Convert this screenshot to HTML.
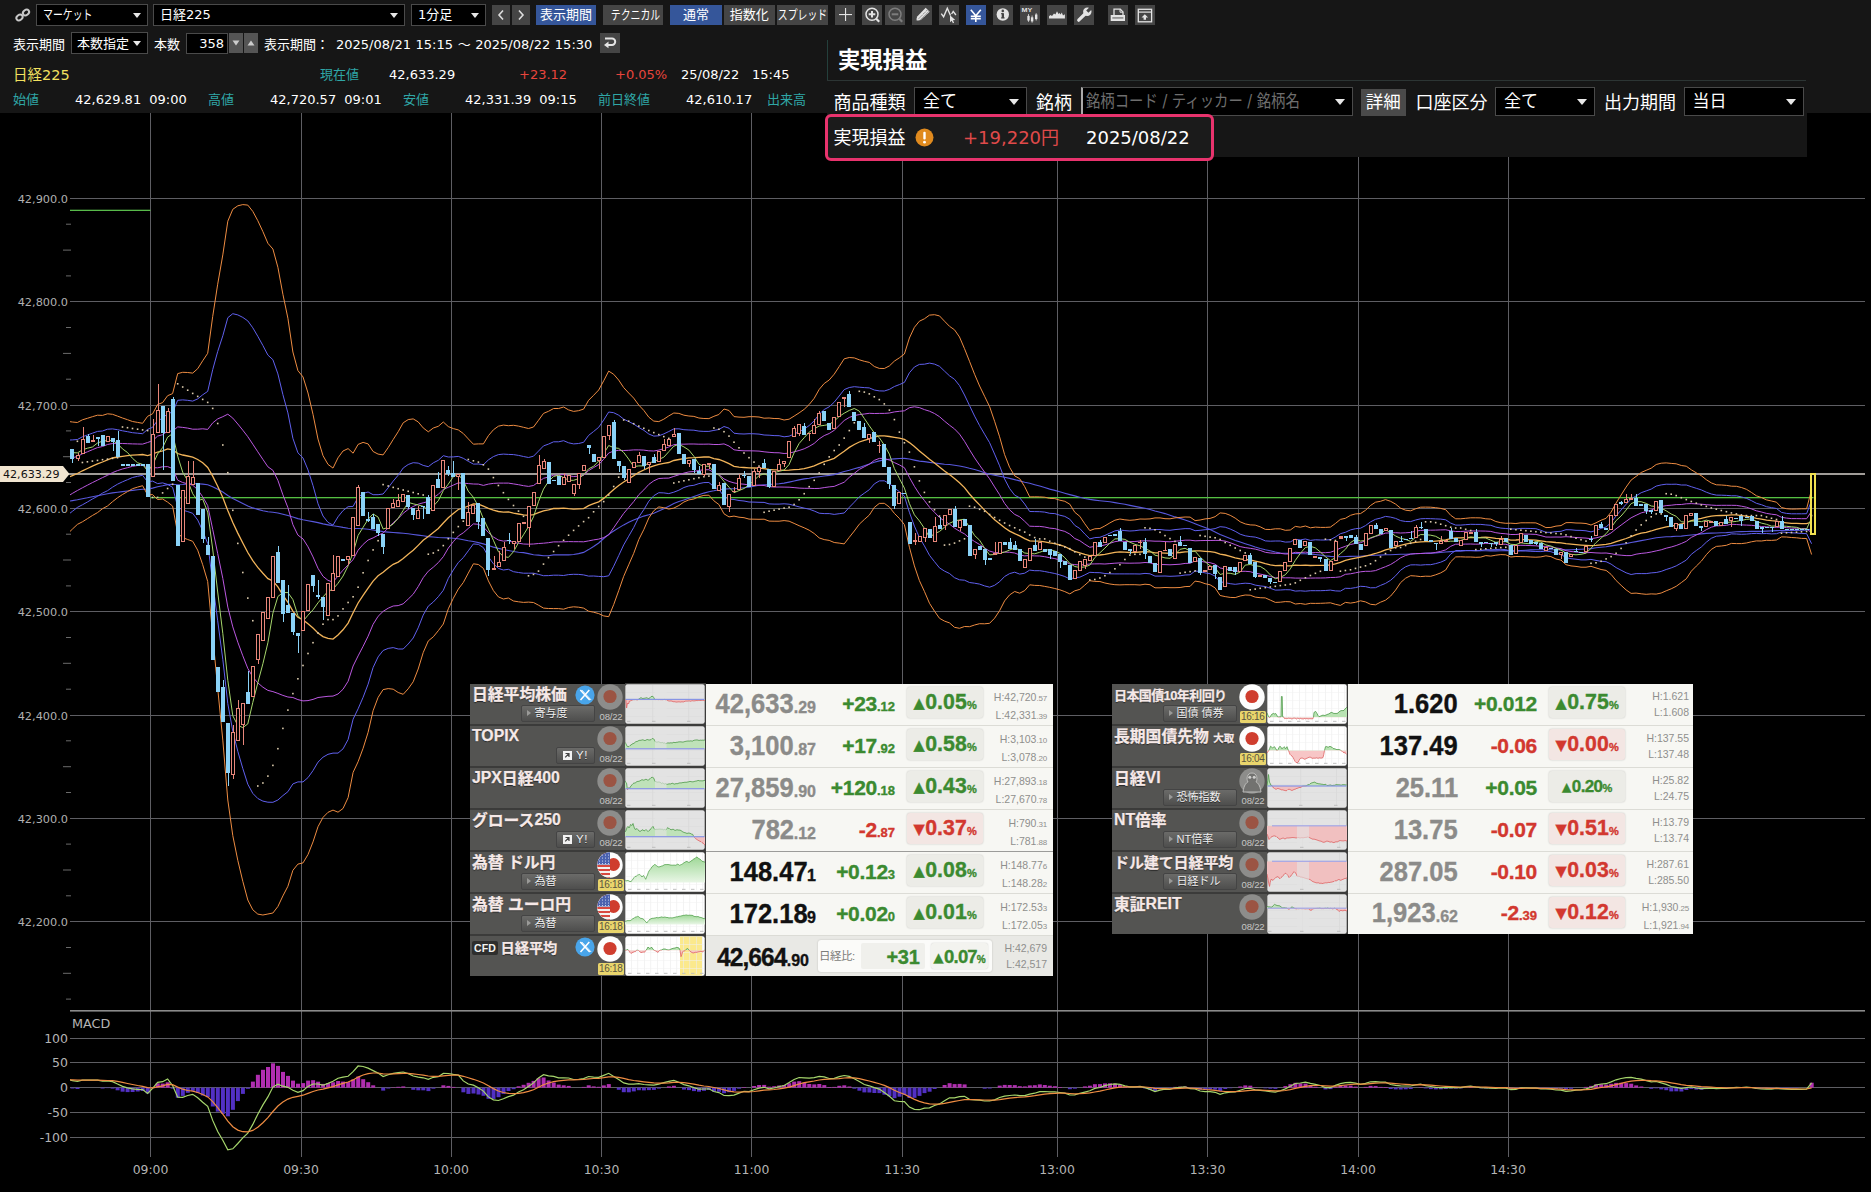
<!DOCTYPE html>
<html lang="ja"><head><meta charset="utf-8"><title>日経225 チャート</title>
<style>

html,body{margin:0;padding:0;background:#000;}
body{width:1871px;height:1192px;position:relative;overflow:hidden;font-family:"DejaVu Sans","Noto Sans CJK JP",sans-serif;color:#fff;}
#chart{position:absolute;left:0;top:0;}
.abs{position:absolute;}
#hdr{position:absolute;left:0;top:0;width:1871px;height:113px;background:#161616;}
.sel{position:absolute;box-sizing:border-box;background:#000;border:1px solid #4a4a4a;color:#fff;font-size:13px;line-height:20px;padding-left:6px;white-space:nowrap;height:22px;}
.sel:after{content:"";position:absolute;right:6px;top:8px;border-left:4px solid transparent;border-right:4px solid transparent;border-top:5px solid #e8e8e8;}
.btn{position:absolute;box-sizing:border-box;background:#454545;color:#fff;font-size:13px;line-height:19px;height:20px;text-align:center;white-space:nowrap;overflow:hidden;}
.btn.on{background:#35569a;}
.ib{position:absolute;top:5px;width:20px;height:20px;background:#454545;}
.ib svg{position:absolute;left:0;top:0;}
.t{position:absolute;white-space:nowrap;font-size:13px;line-height:16px;color:#fff;word-spacing:4px;}
.cy{color:#2fa6a6;}
.kk{display:inline-block;transform:scaleX(.76);transform-origin:0 50%;}
.rd{color:#e8453c;}

#hon:after{display:none;}
#pnl{position:absolute;left:827px;top:40px;width:979.500px;height:117px;background:#161616;font-family:"DejaVu Sans","Noto Sans CJK JP",sans-serif;}
#pnl .ttl{position:absolute;left:11px;top:5px;font-size:22.300px;font-weight:bold;line-height:30px;color:#fff;}
#pnl .lb{position:absolute;font-size:18px;line-height:24px;color:#fff;white-space:nowrap;}
#pnl .sel{font-size:17px;line-height:27px;height:29px;padding-left:8px;}
#pnl .sel:after{top:11px;right:7px;border-left-width:5px;border-right-width:5px;border-top-width:6px;}

.tb{position:absolute;font-family:"Liberation Sans","Noto Sans CJK JP",sans-serif;}
.tb .row{position:absolute;left:0;height:40px;}
.tb small{line-height:0;}
.tb .la{position:relative;top:-1.5px;}
.tb .nm{-webkit-text-stroke:0.25px;}
.tb .v,.tb .c,.tb .pb{-webkit-text-stroke:0.35px;}
.tb .lab{position:absolute;left:0;top:0;width:154.5px;height:40px;background:#545452;border-bottom:2px solid #3b3b3a;}
.tb .nm{position:absolute;left:2px;top:0px;font-weight:bold;font-size:15.8px;line-height:22px;color:#f6e9e8;white-space:nowrap;text-shadow:0 1px 1px rgba(0,0,0,.55);letter-spacing:0;}
.tb .bt{position:absolute;top:21px;height:16.5px;box-sizing:border-box;border:1px solid #444;border-radius:2px;background:linear-gradient(#6b6b69,#4e4e4d);color:#f0f0f0;font-size:11px;line-height:14px;white-space:nowrap;text-shadow:0 1px 0 rgba(0,0,0,.5);}
.tb .bt i{position:absolute;left:5px;top:3.5px;border-top:3.5px solid transparent;border-bottom:3.5px solid transparent;border-left:4px solid #9a9a98;}
.tb .bt span{position:absolute;left:12.5px;top:0;}
.tb .dt{position:absolute;left:598px;top:27px;width:26px;text-align:center;font-size:9.5px;line-height:12px;color:#c4c4c2;letter-spacing:-0.2px;}
.tb .tm{position:absolute;left:128px;top:27px;width:25.5px;height:12px;background:#e9d56c;border-radius:1.5px;text-align:center;font-size:10px;line-height:12px;color:#5a5540;letter-spacing:-0.3px;}
.tb .dd{position:absolute;left:128px;top:27px;width:26px;text-align:center;font-size:9.5px;line-height:12px;color:#c6c6c4;letter-spacing:-0.2px;}
.tb .mc{position:absolute;left:155px;top:0;width:80px;height:40px;}
.tb .wh{position:absolute;left:236px;top:0;width:347px;height:41px;background:#f7f7f3;border-bottom:1px solid #dcdcd6;}
.tb .v{position:absolute;right:237px;bottom:7.5px;font-weight:bold;white-space:nowrap;color:#8b8b89;font-size:27px;line-height:28px;letter-spacing:0;}
.tb .v u{text-decoration:none;display:inline-block;transform:scaleX(.945);transform-origin:100% 50%;}
.tb .v small{font-size:16px;letter-spacing:0;}
.tb .v.k{color:#111;}
.tb .c{position:absolute;right:158px;bottom:10px;font-weight:bold;white-space:nowrap;font-size:21px;line-height:22px;letter-spacing:-0.3px;}
.tb .c small{font-size:13px;letter-spacing:0;}
.tb .g{color:#3b8a30;}
.tb .r{color:#d2382f;}
.tb .pb{position:absolute;left:201px;top:3px;width:76px;height:31px;border-radius:3px;box-shadow:0 0 2px rgba(0,0,0,.22);background:#ecece7;text-align:center;font-weight:bold;white-space:nowrap;font-size:21.3px;line-height:31px;letter-spacing:0.1px;}
.tb .pb.r{background:#f3e6e3;}
.tb .pb small{font-size:11px;letter-spacing:-0.3px;}
.tb .pb b{font-size:14.5px;letter-spacing:0;position:relative;top:-1.5px;margin-right:0.5px;margin-left:0;font-family:'DejaVu Sans',sans-serif;font-weight:normal;}
.tb .hl{position:absolute;right:6px;top:4px;text-align:right;font-size:10.5px;line-height:18px;color:#8f8f8d;white-space:nowrap;letter-spacing:0;}
.tb .hl small{font-size:8px;letter-spacing:-0.2px;}

</style></head><body>
<svg id="chart" width="1871" height="1192" viewBox="0 0 1871 1192" shape-rendering="auto">
<defs><clipPath id="cp"><rect x="70" y="113" width="1795" height="1044"/></clipPath></defs>
<rect x="150" y="113" width="1" height="1044" fill="#5e5e63"/>
<rect x="301" y="113" width="1" height="1044" fill="#5e5e63"/>
<rect x="451" y="113" width="1" height="1044" fill="#5e5e63"/>
<rect x="601" y="113" width="1" height="1044" fill="#5e5e63"/>
<rect x="751" y="113" width="1" height="1044" fill="#5e5e63"/>
<rect x="902" y="113" width="1" height="1044" fill="#5e5e63"/>
<rect x="1057" y="113" width="1" height="1044" fill="#5e5e63"/>
<rect x="1207" y="113" width="1" height="1044" fill="#5e5e63"/>
<rect x="1358" y="113" width="1" height="1044" fill="#5e5e63"/>
<rect x="1508" y="113" width="1" height="1044" fill="#5e5e63"/>
<rect x="70" y="198" width="1795" height="1" fill="#5e5e63"/>
<rect x="70" y="301" width="1795" height="1" fill="#5e5e63"/>
<rect x="70" y="405" width="1795" height="1" fill="#5e5e63"/>
<rect x="70" y="508" width="1795" height="1" fill="#5e5e63"/>
<rect x="70" y="611" width="1795" height="1" fill="#5e5e63"/>
<rect x="70" y="715" width="1795" height="1" fill="#5e5e63"/>
<rect x="70" y="818" width="1795" height="1" fill="#5e5e63"/>
<rect x="70" y="921" width="1795" height="1" fill="#5e5e63"/>
<rect x="66.0" y="223.7" width="5" height="1" fill="#6a6a6a"/>
<rect x="63.0" y="249.6" width="8" height="1" fill="#6a6a6a"/>
<rect x="66.0" y="275.4" width="5" height="1" fill="#6a6a6a"/>
<rect x="66.0" y="327.0" width="5" height="1" fill="#6a6a6a"/>
<rect x="63.0" y="352.9" width="8" height="1" fill="#6a6a6a"/>
<rect x="66.0" y="378.7" width="5" height="1" fill="#6a6a6a"/>
<rect x="66.0" y="430.4" width="5" height="1" fill="#6a6a6a"/>
<rect x="63.0" y="456.2" width="8" height="1" fill="#6a6a6a"/>
<rect x="66.0" y="482.0" width="5" height="1" fill="#6a6a6a"/>
<rect x="66.0" y="533.7" width="5" height="1" fill="#6a6a6a"/>
<rect x="63.0" y="559.5" width="8" height="1" fill="#6a6a6a"/>
<rect x="66.0" y="585.4" width="5" height="1" fill="#6a6a6a"/>
<rect x="66.0" y="637.0" width="5" height="1" fill="#6a6a6a"/>
<rect x="63.0" y="662.8" width="8" height="1" fill="#6a6a6a"/>
<rect x="66.0" y="688.7" width="5" height="1" fill="#6a6a6a"/>
<rect x="66.0" y="740.3" width="5" height="1" fill="#6a6a6a"/>
<rect x="63.0" y="766.2" width="8" height="1" fill="#6a6a6a"/>
<rect x="66.0" y="792.0" width="5" height="1" fill="#6a6a6a"/>
<rect x="66.0" y="843.6" width="5" height="1" fill="#6a6a6a"/>
<rect x="63.0" y="869.5" width="8" height="1" fill="#6a6a6a"/>
<rect x="66.0" y="895.3" width="5" height="1" fill="#6a6a6a"/>
<rect x="66.0" y="947.0" width="5" height="1" fill="#6a6a6a"/>
<rect x="63.0" y="972.8" width="8" height="1" fill="#6a6a6a"/>
<rect x="66.0" y="998.6" width="5" height="1" fill="#6a6a6a"/>
<rect x="70" y="1010" width="1795" height="1.6" fill="#8a8a8a"/>
<rect x="70" y="1038" width="1795" height="1" fill="#5e5e63"/>
<rect x="70" y="1062" width="1795" height="1" fill="#5e5e63"/>
<rect x="70" y="1087" width="1795" height="1" fill="#5e5e63"/>
<rect x="70" y="1112" width="1795" height="1" fill="#5e5e63"/>
<rect x="70" y="1137" width="1795" height="1" fill="#5e5e63"/>
<rect x="70" y="209.7" width="80.5" height="1.3" fill="#58ba4a"/>
<rect x="150.5" y="497" width="1663" height="1.3" fill="#55c042"/>
<rect x="66" y="473" width="1799" height="2" fill="#a09c98"/>
<polyline clip-path="url(#cp)" points="67.4,501.3 72.4,500.6 77.4,499.8 82.4,498.7 87.4,497.8 92.4,496.7 97.5,495.7 102.5,494.8 107.5,493.8 112.5,492.9 117.5,492.2 122.5,491.6 127.5,491.0 132.5,490.4 137.6,489.8 142.6,489.2 147.6,489.1 152.6,488.1 157.6,486.8 162.6,485.8 167.6,484.6 172.6,484.2 177.7,484.7 182.7,484.5 187.7,484.0 192.7,483.6 197.7,483.7 202.7,484.1 207.7,484.7 212.7,486.7 217.7,489.2 222.8,492.0 227.8,495.5 232.8,498.4 237.8,500.9 242.8,503.4 247.8,505.9 252.8,507.9 257.8,509.4 262.9,510.7 267.9,511.7 272.9,512.2 277.9,513.0 282.9,514.3 287.9,515.5 292.9,517.0 297.9,518.6 303.0,519.8 308.0,520.7 313.0,521.6 318.0,522.6 323.0,523.9 328.0,524.9 333.0,525.8 338.0,526.5 343.0,527.4 348.1,528.2 353.1,528.5 358.1,528.5 363.1,528.8 368.1,529.3 373.1,530.0 378.1,530.7 383.1,531.6 388.2,532.1 393.2,532.5 398.2,532.9 403.2,533.2 408.2,533.8 413.2,534.5 418.2,535.1 423.2,535.8 428.3,536.6 433.3,537.0 438.3,537.5 443.3,537.7 448.3,537.9 453.3,538.2 458.3,538.7 463.3,539.7 468.3,540.7 473.4,541.5 478.4,542.6 483.4,543.9 488.4,545.6 493.4,547.1 498.4,548.4 503.4,549.5 508.4,550.5 513.5,551.5 518.5,552.3 523.5,552.6 528.5,553.6 533.5,554.7 538.5,555.1 543.5,555.8 548.5,555.8 553.6,554.9 558.6,554.9 563.6,554.9 568.6,554.9 573.6,554.5 578.6,553.6 583.6,552.4 588.6,549.6 593.6,546.5 598.7,543.0 603.7,538.5 608.7,534.4 613.7,531.0 618.7,527.9 623.7,524.9 628.7,522.2 633.7,520.0 638.8,517.9 643.8,516.1 648.8,514.8 653.8,513.3 658.8,511.1 663.8,508.8 668.8,506.2 673.8,503.6 678.9,501.5 683.9,499.9 688.9,498.2 693.9,496.5 698.9,494.7 703.9,493.1 708.9,491.7 713.9,490.8 718.9,489.7 724.0,489.1 729.0,488.8 734.0,488.8 739.0,488.3 744.0,487.7 749.0,487.1 754.0,486.3 759.0,485.3 764.1,484.7 769.1,484.5 774.1,484.1 779.1,483.7 784.1,483.1 789.1,482.1 794.1,481.0 799.1,479.9 804.2,478.9 809.2,478.2 814.2,477.3 819.2,476.7 824.2,476.0 829.2,475.4 834.2,474.6 839.2,473.0 844.2,471.5 849.3,470.2 854.3,468.8 859.3,467.4 864.3,465.7 869.3,463.9 874.3,462.3 879.3,460.9 884.3,459.9 889.4,459.2 894.4,458.9 899.4,458.5 904.4,458.4 909.4,459.0 914.4,460.1 919.4,461.1 924.4,461.6 929.5,462.4 934.5,463.0 939.5,463.6 944.5,464.2 949.5,464.5 954.5,465.2 959.5,466.0 964.5,467.0 969.5,468.3 974.6,469.5 979.6,471.0 984.6,472.8 989.6,474.2 994.6,475.3 999.6,476.2 1004.6,477.2 1009.6,478.4 1014.7,479.6 1019.7,480.9 1024.7,482.2 1029.7,483.3 1034.7,484.7 1039.7,486.0 1044.7,487.5 1049.7,489.1 1054.8,490.4 1059.8,491.8 1064.8,493.2 1069.8,494.6 1074.8,495.9 1079.8,497.2 1084.8,498.5 1089.8,499.4 1094.8,500.1 1099.9,500.7 1104.9,501.3 1109.9,501.8 1114.9,502.6 1119.9,503.5 1124.9,504.3 1129.9,505.4 1134.9,506.4 1140.0,507.4 1145.0,508.3 1150.0,509.5 1155.0,511.0 1160.0,512.2 1165.0,513.6 1170.0,515.3 1175.0,516.9 1180.1,518.4 1185.1,519.9 1190.1,521.8 1195.1,523.7 1200.1,525.7 1205.1,527.6 1210.1,529.6 1215.1,531.9 1220.1,534.4 1225.2,536.5 1230.2,538.5 1235.2,540.4 1240.2,542.1 1245.2,543.7 1250.2,545.3 1255.2,547.1 1260.2,548.5 1265.3,549.8 1270.3,550.8 1275.3,552.0 1280.3,553.0 1285.3,553.3 1290.3,553.4 1295.3,553.4 1300.3,553.7 1305.4,553.7 1310.4,554.1 1315.4,554.5 1320.4,555.1 1325.4,555.9 1330.4,556.4 1335.4,556.6 1340.4,556.8 1345.4,556.5 1350.5,556.4 1355.5,556.3 1360.5,556.2 1365.5,555.8 1370.5,555.4 1375.5,555.3 1380.5,555.1 1385.5,554.8 1390.6,554.8 1395.6,554.5 1400.6,554.3 1405.6,554.2 1410.6,554.0 1415.6,553.8 1420.6,553.5 1425.6,553.3 1430.7,553.1 1435.7,552.9 1440.7,552.5 1445.7,552.0 1450.7,551.6 1455.7,551.3 1460.7,551.1 1465.7,550.8 1470.7,550.6 1475.8,550.6 1480.8,550.7 1485.8,550.8 1490.8,550.9 1495.8,550.9 1500.8,550.7 1505.8,550.6 1510.8,550.8 1515.9,550.8 1520.9,550.5 1525.9,550.2 1530.9,549.9 1535.9,549.7 1540.9,549.7 1545.9,549.6 1550.9,549.7 1556.0,549.8 1561.0,549.9 1566.0,549.9 1571.0,549.8 1576.0,549.5 1581.0,549.3 1586.0,549.0 1591.0,548.6 1596.0,547.7 1601.1,547.2 1606.1,546.7 1611.1,545.9 1616.1,545.1 1621.1,544.4 1626.1,543.6 1631.1,542.5 1636.1,541.6 1641.2,540.6 1646.2,539.7 1651.2,538.7 1656.2,537.8 1661.2,537.2 1666.2,536.7 1671.2,536.6 1676.2,536.2 1681.3,536.1 1686.3,535.5 1691.3,535.0 1696.3,534.5 1701.3,533.9 1706.3,533.4 1711.3,533.1 1716.3,533.0 1721.3,532.8 1726.4,532.6 1731.4,532.2 1736.4,531.8 1741.4,531.6 1746.4,531.5 1751.4,531.4 1756.4,531.4 1761.4,531.4 1766.5,531.1 1771.5,530.9 1776.5,530.6 1781.5,530.5 1786.5,530.4 1791.5,530.4 1796.5,530.4 1801.5,530.2 1806.6,530.1 1811.6,529.1" fill="none" stroke="#5858dc" stroke-width="1.1" />
<polyline clip-path="url(#cp)" points="67.4,421.3 72.4,422.0 77.4,422.5 82.4,419.8 87.4,418.3 92.4,416.7 97.5,415.2 102.5,415.4 107.5,413.8 112.5,414.3 117.5,416.1 122.5,418.0 127.5,419.7 132.5,421.5 137.6,422.4 142.6,423.3 147.6,416.3 152.6,413.8 157.6,404.5 162.6,402.6 167.6,395.7 172.6,393.6 177.7,373.6 182.7,372.3 187.7,372.5 192.7,373.1 197.7,368.7 202.7,360.8 207.7,353.3 212.7,316.5 217.7,284.2 222.8,254.9 227.8,221.2 232.8,209.3 237.8,205.8 242.8,204.6 247.8,205.1 252.8,211.4 257.8,220.7 262.9,231.6 267.9,243.3 272.9,249.0 277.9,267.3 282.9,294.3 287.9,318.2 292.9,352.0 297.9,370.6 303.0,376.9 308.0,393.0 313.0,414.4 318.0,439.1 323.0,455.7 328.0,464.4 333.0,468.1 338.0,457.8 343.0,451.0 348.1,448.6 353.1,453.2 358.1,444.4 363.1,442.4 368.1,443.9 373.1,451.5 378.1,454.1 383.1,454.9 388.2,447.6 393.2,439.5 398.2,431.7 403.2,422.8 408.2,419.6 413.2,418.9 418.2,421.9 423.2,427.9 428.3,431.8 433.3,428.0 438.3,426.3 443.3,422.0 448.3,426.6 453.3,428.6 458.3,429.9 463.3,433.5 468.3,438.9 473.4,444.2 478.4,443.9 483.4,443.9 488.4,435.7 493.4,429.8 498.4,426.2 503.4,425.1 508.4,425.7 513.5,425.3 518.5,426.1 523.5,427.3 528.5,428.5 533.5,427.0 538.5,420.3 543.5,413.4 548.5,411.3 553.6,408.5 558.6,408.5 563.6,407.0 568.6,409.9 573.6,411.4 578.6,410.7 583.6,409.1 588.6,400.3 593.6,395.3 598.7,390.0 603.7,380.8 608.7,371.1 613.7,374.3 618.7,380.1 623.7,387.6 628.7,393.0 633.7,398.1 638.8,405.1 643.8,410.4 648.8,417.2 653.8,421.1 658.8,421.6 663.8,419.2 668.8,415.9 673.8,413.0 678.9,413.4 683.9,415.2 688.9,416.0 693.9,416.4 698.9,418.0 703.9,418.5 708.9,418.6 713.9,416.3 718.9,414.5 724.0,409.0 729.0,410.5 734.0,416.6 739.0,417.1 744.0,417.3 749.0,416.7 754.0,416.7 759.0,417.0 764.1,418.2 769.1,418.0 774.1,418.5 779.1,418.6 784.1,420.0 789.1,419.2 794.1,416.1 799.1,412.9 804.2,409.3 809.2,404.5 814.2,398.3 819.2,389.4 824.2,383.5 829.2,380.0 834.2,374.2 839.2,366.6 844.2,358.8 849.3,357.5 854.3,357.9 859.3,359.8 864.3,361.3 869.3,362.4 874.3,366.5 879.3,368.4 884.3,368.5 889.4,365.9 894.4,361.1 899.4,357.8 904.4,354.0 909.4,338.0 914.4,327.3 919.4,321.2 924.4,318.8 929.5,315.1 934.5,314.7 939.5,315.9 944.5,321.2 949.5,326.3 954.5,329.8 959.5,337.0 964.5,348.7 969.5,361.3 974.6,374.3 979.6,386.0 984.6,396.3 989.6,406.6 994.6,421.3 999.6,436.8 1004.6,454.6 1009.6,467.3 1014.7,475.9 1019.7,478.7 1024.7,486.7 1029.7,496.9 1034.7,496.8 1039.7,496.9 1044.7,497.2 1049.7,498.4 1054.8,498.6 1059.8,500.2 1064.8,501.3 1069.8,504.2 1074.8,512.3 1079.8,516.3 1084.8,523.8 1089.8,530.6 1094.8,528.8 1099.9,528.5 1104.9,525.9 1109.9,522.9 1114.9,520.2 1119.9,519.0 1124.9,519.8 1129.9,520.3 1134.9,519.9 1140.0,519.0 1145.0,519.1 1150.0,518.9 1155.0,517.9 1160.0,517.9 1165.0,518.7 1170.0,518.8 1175.0,517.9 1180.1,517.4 1185.1,517.0 1190.1,517.1 1195.1,520.6 1200.1,520.0 1205.1,518.9 1210.1,518.4 1215.1,516.7 1220.1,512.9 1225.2,513.4 1230.2,515.3 1235.2,518.1 1240.2,521.8 1245.2,523.9 1250.2,524.9 1255.2,525.1 1260.2,526.8 1265.3,529.4 1270.3,529.5 1275.3,528.8 1280.3,528.8 1285.3,530.3 1290.3,530.0 1295.3,526.4 1300.3,527.2 1305.4,526.0 1310.4,527.8 1315.4,527.1 1320.4,527.4 1325.4,527.4 1330.4,527.1 1335.4,523.5 1340.4,519.4 1345.4,518.3 1350.5,515.3 1355.5,513.9 1360.5,513.6 1365.5,510.3 1370.5,505.5 1375.5,502.2 1380.5,501.3 1385.5,499.6 1390.6,501.3 1395.6,504.1 1400.6,508.2 1405.6,510.2 1410.6,510.8 1415.6,508.8 1420.6,507.2 1425.6,507.1 1430.7,507.2 1435.7,507.7 1440.7,508.4 1445.7,509.7 1450.7,515.3 1455.7,518.8 1460.7,518.8 1465.7,518.3 1470.7,517.8 1475.8,517.8 1480.8,517.9 1485.8,518.8 1490.8,519.1 1495.8,521.5 1500.8,522.7 1505.8,523.3 1510.8,523.2 1515.9,523.5 1520.9,522.8 1525.9,522.8 1530.9,522.8 1535.9,522.9 1540.9,525.0 1545.9,527.6 1550.9,527.4 1556.0,526.1 1561.0,525.6 1566.0,522.7 1571.0,522.6 1576.0,523.0 1581.0,523.1 1586.0,523.5 1591.0,525.0 1596.0,522.8 1601.1,520.2 1606.1,518.3 1611.1,512.1 1616.1,503.0 1621.1,495.0 1626.1,487.1 1631.1,480.1 1636.1,476.4 1641.2,472.5 1646.2,470.3 1651.2,468.2 1656.2,464.5 1661.2,463.2 1666.2,462.9 1671.2,463.4 1676.2,463.8 1681.3,465.5 1686.3,466.2 1691.3,469.8 1696.3,472.8 1701.3,475.7 1706.3,479.7 1711.3,482.9 1716.3,484.8 1721.3,485.0 1726.4,485.4 1731.4,486.2 1736.4,486.3 1741.4,487.5 1746.4,489.3 1751.4,492.4 1756.4,495.8 1761.4,497.5 1766.5,499.9 1771.5,501.0 1776.5,502.2 1781.5,507.5 1786.5,508.7 1791.5,509.1 1796.5,509.0 1801.5,508.8 1806.6,508.8 1811.6,489.5" fill="none" stroke="#ee8c42" stroke-width="1.0" />
<polyline clip-path="url(#cp)" points="67.4,534.0 72.4,529.1 77.4,524.4 82.4,521.8 87.4,518.7 92.4,515.5 97.5,512.6 102.5,508.7 107.5,506.0 112.5,501.7 117.5,497.8 122.5,494.5 127.5,491.6 132.5,488.7 137.6,487.1 142.6,485.7 147.6,494.9 152.6,494.6 157.6,499.5 162.6,499.0 167.6,502.1 172.6,506.1 177.7,533.4 182.7,537.6 187.7,539.5 192.7,541.3 197.7,550.2 202.7,564.7 207.7,581.5 212.7,635.7 217.7,688.2 222.8,740.1 227.8,800.0 232.8,835.7 237.8,860.4 242.8,881.3 247.8,900.0 252.8,909.8 257.8,914.1 262.9,915.0 267.9,914.0 272.9,913.0 277.9,906.5 282.9,895.9 287.9,886.3 292.9,870.3 297.9,864.1 303.0,862.9 308.0,854.5 313.0,841.9 318.0,826.7 323.0,817.4 328.0,812.3 333.0,810.1 338.0,812.2 343.0,808.5 348.1,797.6 353.1,772.4 358.1,761.7 363.1,748.3 368.1,732.3 373.1,710.7 378.1,697.4 383.1,689.6 388.2,688.6 393.2,689.2 398.2,692.5 403.2,694.3 408.2,688.8 413.2,681.8 418.2,669.0 423.2,652.6 428.3,640.9 433.3,636.8 438.3,630.7 443.3,624.0 448.3,608.8 453.3,598.3 458.3,589.1 463.3,582.5 468.3,573.1 473.4,563.8 478.4,564.5 483.4,568.4 488.4,580.9 493.4,590.6 498.4,596.9 503.4,599.0 508.4,598.0 513.5,601.0 518.5,601.8 523.5,602.4 528.5,602.1 533.5,602.5 538.5,605.2 543.5,608.1 548.5,608.5 553.6,608.6 558.6,608.6 563.6,609.2 568.6,607.5 573.6,606.8 578.6,607.2 583.6,608.1 588.6,611.2 593.6,612.2 598.7,613.6 603.7,615.9 608.7,616.7 613.7,604.6 618.7,590.7 623.7,576.3 628.7,564.8 633.7,553.4 638.8,539.5 643.8,529.6 648.8,518.0 653.8,510.7 658.8,506.9 663.8,507.7 668.8,509.1 673.8,508.1 678.9,505.5 683.9,502.0 688.9,499.9 693.9,499.0 698.9,496.7 703.9,495.4 708.9,495.2 713.9,500.8 718.9,504.5 724.0,513.8 729.0,516.9 734.0,516.1 739.0,517.2 744.0,517.7 749.0,519.1 754.0,519.2 759.0,519.3 764.1,519.2 769.1,521.1 774.1,521.2 779.1,521.2 784.1,520.6 789.1,521.2 794.1,523.4 799.1,525.7 804.2,527.8 809.2,530.2 814.2,533.5 819.2,537.9 824.2,539.6 829.2,540.4 834.2,542.5 839.2,543.1 844.2,543.9 849.3,537.3 854.3,531.0 859.3,524.2 864.3,519.5 869.3,515.1 874.3,507.4 879.3,503.4 884.3,503.3 889.4,507.1 894.4,513.4 899.4,518.4 904.4,524.6 909.4,547.2 914.4,565.9 919.4,580.6 924.4,591.4 929.5,603.3 934.5,611.2 939.5,618.3 944.5,621.1 949.5,622.9 954.5,627.3 959.5,628.3 964.5,626.5 969.5,626.7 974.6,625.0 979.6,623.7 984.6,623.8 989.6,623.3 994.6,618.2 999.6,610.7 1004.6,600.9 1009.6,594.9 1014.7,591.5 1019.7,593.2 1024.7,590.6 1029.7,584.8 1034.7,585.4 1039.7,585.5 1044.7,586.4 1049.7,587.3 1054.8,588.5 1059.8,589.8 1064.8,591.6 1069.8,593.9 1074.8,590.8 1079.8,589.4 1084.8,585.1 1089.8,580.7 1094.8,581.4 1099.9,581.5 1104.9,583.0 1109.9,584.0 1114.9,584.7 1119.9,584.9 1124.9,584.7 1129.9,584.7 1134.9,584.7 1140.0,585.0 1145.0,584.2 1150.0,584.7 1155.0,587.8 1160.0,587.8 1165.0,587.5 1170.0,587.7 1175.0,587.7 1180.1,587.5 1185.1,586.6 1190.1,586.4 1195.1,581.1 1200.1,581.9 1205.1,583.7 1210.1,584.8 1215.1,587.9 1220.1,595.5 1225.2,596.6 1230.2,597.4 1235.2,597.6 1240.2,596.0 1245.2,595.0 1250.2,595.2 1255.2,597.1 1260.2,597.7 1265.3,597.9 1270.3,600.1 1275.3,602.4 1280.3,602.2 1285.3,601.6 1290.3,601.8 1295.3,604.0 1300.3,603.5 1305.4,604.3 1310.4,603.3 1315.4,603.4 1320.4,603.3 1325.4,603.1 1330.4,602.8 1335.4,604.3 1340.4,605.4 1345.4,602.4 1350.5,603.1 1355.5,602.3 1360.5,600.8 1365.5,601.9 1370.5,604.3 1375.5,604.8 1380.5,602.2 1385.5,600.2 1390.6,596.1 1395.6,590.1 1400.6,582.6 1405.6,578.2 1410.6,575.7 1415.6,576.0 1420.6,576.6 1425.6,576.2 1430.7,576.3 1435.7,574.8 1440.7,572.9 1445.7,570.0 1450.7,561.8 1455.7,556.9 1460.7,556.8 1465.7,557.0 1470.7,557.0 1475.8,557.3 1480.8,557.1 1485.8,555.6 1490.8,556.1 1495.8,555.2 1500.8,554.6 1505.8,554.8 1510.8,557.0 1515.9,556.5 1520.9,556.6 1525.9,556.7 1530.9,557.0 1535.9,557.2 1540.9,556.9 1545.9,555.8 1550.9,556.6 1556.0,559.0 1561.0,560.1 1566.0,564.7 1571.0,565.9 1576.0,566.4 1581.0,567.2 1586.0,567.2 1591.0,566.3 1596.0,567.9 1601.1,569.5 1606.1,570.4 1611.1,574.4 1616.1,580.5 1621.1,585.3 1626.1,589.9 1631.1,593.4 1636.1,593.1 1641.2,593.8 1646.2,594.3 1651.2,593.9 1656.2,594.1 1661.2,593.0 1666.2,590.8 1671.2,588.8 1676.2,586.3 1681.3,582.6 1686.3,578.8 1691.3,571.2 1696.3,566.1 1701.3,561.2 1706.3,554.7 1711.3,549.4 1716.3,546.4 1721.3,546.0 1726.4,545.3 1731.4,543.4 1736.4,543.6 1741.4,543.6 1746.4,543.0 1751.4,541.8 1756.4,540.9 1761.4,541.0 1766.5,540.3 1771.5,540.4 1776.5,540.0 1781.5,536.9 1786.5,537.0 1791.5,537.5 1796.5,537.8 1801.5,538.4 1806.6,538.5 1811.6,554.5" fill="none" stroke="#ee8c42" stroke-width="1.0" />
<polyline clip-path="url(#cp)" points="67.4,440.1 72.4,439.9 77.4,439.5 82.4,436.8 87.4,435.0 92.4,433.2 97.5,431.4 102.5,431.0 107.5,429.2 112.5,428.9 117.5,429.7 122.5,430.8 127.5,431.7 132.5,432.7 137.6,433.2 142.6,433.7 147.6,429.4 152.6,427.3 157.6,420.3 162.6,418.6 167.6,413.4 172.6,412.3 177.7,400.3 182.7,399.9 187.7,400.3 192.7,401.1 197.7,398.9 202.7,394.8 207.7,391.4 212.7,369.7 217.7,351.5 222.8,335.8 227.8,317.7 232.8,313.7 237.8,314.9 242.8,317.4 247.8,320.9 252.8,327.8 257.8,336.3 262.9,345.5 267.9,355.1 272.9,359.7 277.9,373.9 282.9,394.6 287.9,412.9 292.9,438.3 297.9,452.8 303.0,457.9 308.0,469.9 313.0,485.6 318.0,503.7 323.0,516.0 328.0,522.4 333.0,525.1 338.0,516.8 343.0,510.6 348.1,506.7 353.1,506.4 358.1,497.3 363.1,493.4 368.1,492.0 373.1,494.7 378.1,494.7 383.1,494.0 388.2,487.8 393.2,481.1 398.2,475.2 403.2,468.0 408.2,464.5 413.2,462.7 418.2,463.1 423.2,465.4 428.3,466.7 433.3,462.8 438.3,460.3 443.3,455.7 448.3,457.0 453.3,456.9 458.3,456.4 463.3,458.3 468.3,461.3 473.4,464.1 478.4,464.0 483.4,464.7 488.4,459.9 493.4,456.6 498.4,454.6 503.4,454.1 508.4,454.4 513.5,454.6 518.5,455.4 523.5,456.5 528.5,457.5 533.5,456.2 538.5,451.1 543.5,445.9 548.5,444.1 553.6,441.8 558.6,441.8 563.6,440.7 568.6,442.8 573.6,443.9 578.6,443.5 583.6,442.3 588.6,435.4 593.6,431.5 598.7,427.3 603.7,420.0 608.7,412.0 613.7,412.7 618.7,415.2 623.7,419.1 628.7,421.6 633.7,424.0 638.8,427.5 643.8,430.3 648.8,434.0 653.8,436.1 658.8,435.8 663.8,433.9 668.8,431.5 673.8,428.9 678.9,428.8 683.9,429.7 688.9,430.0 693.9,430.2 698.9,431.1 703.9,431.4 708.9,431.4 713.9,430.4 718.9,429.5 724.0,426.5 729.0,428.2 734.0,433.2 739.0,433.8 744.0,434.0 749.0,433.7 754.0,433.8 759.0,434.1 764.1,435.0 769.1,435.2 774.1,435.6 779.1,435.7 784.1,436.8 789.1,436.2 794.1,434.0 799.1,431.7 804.2,429.1 809.2,425.5 814.2,420.9 819.2,414.2 824.2,409.5 829.2,406.8 834.2,402.2 839.2,396.0 844.2,389.6 849.3,387.5 854.3,386.7 859.3,387.2 864.3,387.6 869.3,387.9 874.3,390.0 879.3,390.9 884.3,391.0 889.4,389.4 894.4,386.5 899.4,384.6 904.4,382.4 909.4,372.8 914.4,367.0 919.4,364.4 924.4,364.2 929.5,363.1 934.5,364.1 939.5,366.3 944.5,371.1 949.5,375.8 954.5,379.3 959.5,385.6 964.5,395.0 969.5,405.5 974.6,416.1 979.6,425.6 984.6,434.2 989.6,442.7 994.6,454.1 999.6,465.8 1004.6,479.0 1009.6,488.5 1014.7,495.2 1019.7,497.8 1024.7,504.0 1029.7,511.5 1034.7,511.6 1039.7,511.7 1044.7,512.1 1049.7,513.3 1054.8,513.6 1059.8,515.2 1064.8,516.4 1069.8,519.2 1074.8,525.4 1079.8,528.5 1084.8,534.0 1089.8,538.9 1094.8,537.6 1099.9,537.3 1104.9,535.4 1109.9,533.1 1114.9,530.9 1119.9,530.0 1124.9,530.6 1129.9,531.0 1134.9,530.7 1140.0,530.0 1145.0,530.0 1150.0,529.9 1155.0,529.5 1160.0,529.5 1165.0,530.1 1170.0,530.3 1175.0,529.6 1180.1,529.1 1185.1,528.6 1190.1,528.7 1195.1,530.7 1200.1,530.3 1205.1,529.7 1210.1,529.4 1215.1,528.6 1220.1,526.7 1225.2,527.2 1230.2,529.0 1235.2,531.3 1240.2,534.2 1245.2,535.8 1250.2,536.6 1255.2,537.1 1260.2,538.6 1265.3,540.9 1270.3,541.2 1275.3,541.0 1280.3,541.0 1285.3,542.1 1290.3,541.9 1295.3,539.3 1300.3,539.9 1305.4,539.0 1310.4,540.4 1315.4,539.8 1320.4,540.0 1325.4,540.0 1330.4,539.7 1335.4,537.0 1340.4,533.7 1345.4,532.3 1350.5,529.9 1355.5,528.7 1360.5,528.2 1365.5,525.6 1370.5,521.9 1375.5,519.3 1380.5,518.1 1385.5,516.4 1390.6,517.1 1395.6,518.4 1400.6,520.6 1405.6,521.5 1410.6,521.6 1415.6,520.0 1420.6,518.8 1425.6,518.6 1430.7,518.7 1435.7,518.9 1440.7,519.1 1445.7,519.8 1450.7,523.1 1455.7,525.1 1460.7,525.1 1465.7,524.7 1470.7,524.3 1475.8,524.4 1480.8,524.4 1485.8,524.9 1490.8,525.3 1495.8,527.1 1500.8,528.1 1505.8,528.5 1510.8,528.9 1515.9,529.0 1520.9,528.4 1525.9,528.4 1530.9,528.5 1535.9,528.7 1540.9,530.3 1545.9,532.3 1550.9,532.3 1556.0,531.6 1561.0,531.3 1566.0,529.7 1571.0,529.8 1576.0,530.3 1581.0,530.4 1586.0,530.8 1591.0,531.9 1596.0,530.4 1601.1,528.4 1606.1,527.0 1611.1,522.5 1616.1,515.9 1621.1,510.0 1626.1,504.3 1631.1,499.0 1636.1,495.9 1641.2,492.7 1646.2,490.9 1651.2,489.1 1656.2,486.1 1661.2,484.9 1666.2,484.2 1671.2,484.3 1676.2,484.2 1681.3,485.0 1686.3,485.0 1691.3,486.7 1696.3,488.3 1701.3,489.9 1706.3,492.2 1711.3,494.0 1716.3,495.1 1721.3,495.2 1726.4,495.4 1731.4,495.8 1736.4,495.8 1741.4,496.9 1746.4,498.3 1751.4,500.6 1756.4,503.3 1761.4,504.7 1766.5,506.7 1771.5,507.6 1776.5,508.5 1781.5,512.4 1786.5,513.4 1791.5,513.8 1796.5,513.8 1801.5,513.8 1806.6,513.7 1811.6,500.4" fill="none" stroke="#6060ee" stroke-width="1.0" />
<polyline clip-path="url(#cp)" points="67.4,515.2 72.4,511.3 77.4,507.4 82.4,504.8 87.4,502.0 92.4,499.0 97.5,496.3 102.5,493.1 107.5,490.7 112.5,487.2 117.5,484.2 122.5,481.8 127.5,479.7 132.5,477.5 137.6,476.3 142.6,475.3 147.6,481.8 152.6,481.1 157.6,483.6 162.6,482.9 167.6,484.4 172.6,487.3 177.7,506.8 182.7,510.1 187.7,511.6 192.7,513.3 197.7,520.0 202.7,530.8 207.7,543.5 212.7,582.5 217.7,620.8 222.8,659.3 227.8,703.6 232.8,731.3 237.8,751.3 242.8,768.5 247.8,784.2 252.8,793.4 257.8,798.5 262.9,801.1 267.9,802.2 272.9,802.3 277.9,800.0 282.9,795.6 287.9,791.7 292.9,783.9 297.9,781.9 303.0,781.9 308.0,777.6 313.0,770.6 318.0,762.1 323.0,757.2 328.0,754.3 333.0,753.1 338.0,753.1 343.0,748.9 348.1,739.5 353.1,719.2 358.1,708.8 363.1,697.3 368.1,684.2 373.1,667.5 378.1,656.9 383.1,650.5 388.2,648.4 393.2,647.6 398.2,649.0 403.2,649.0 408.2,644.0 413.2,638.0 418.2,627.8 423.2,615.1 428.3,606.1 433.3,602.0 438.3,596.7 443.3,590.3 448.3,578.4 453.3,570.0 458.3,562.5 463.3,557.6 468.3,550.8 473.4,543.9 478.4,544.4 483.4,547.6 488.4,556.7 493.4,563.8 498.4,568.4 503.4,570.0 508.4,569.3 513.5,571.7 518.5,572.5 523.5,573.2 528.5,573.2 533.5,573.2 538.5,574.4 543.5,575.7 548.5,575.6 553.6,575.2 558.6,575.2 563.6,575.5 568.6,574.6 573.6,574.3 578.6,574.4 583.6,574.9 588.6,576.1 593.6,576.0 598.7,576.4 603.7,576.7 608.7,575.8 613.7,566.2 618.7,555.6 623.7,544.9 628.7,536.2 633.7,527.5 638.8,517.1 643.8,509.7 648.8,501.2 653.8,495.7 658.8,492.7 663.8,492.9 668.8,493.6 673.8,492.2 678.9,490.2 683.9,487.5 688.9,485.9 693.9,485.3 698.9,483.6 703.9,482.6 708.9,482.5 713.9,486.7 718.9,489.5 724.0,496.3 729.0,499.2 734.0,499.5 739.0,500.5 744.0,501.0 749.0,502.0 754.0,502.1 759.0,502.3 764.1,502.4 769.1,503.9 774.1,504.1 779.1,504.1 784.1,503.8 789.1,504.2 794.1,505.5 799.1,506.9 804.2,508.1 809.2,509.2 814.2,511.0 819.2,513.2 824.2,513.6 829.2,513.6 834.2,514.4 839.2,513.7 844.2,513.0 849.3,507.3 854.3,502.2 859.3,496.8 864.3,493.2 869.3,489.7 874.3,483.9 879.3,480.9 884.3,480.8 889.4,483.6 894.4,488.0 899.4,491.7 904.4,496.1 909.4,512.3 914.4,526.1 919.4,537.4 924.4,545.9 929.5,555.3 934.5,561.7 939.5,567.9 944.5,571.1 949.5,573.5 954.5,577.7 959.5,579.8 964.5,580.2 969.5,582.5 974.6,583.2 979.6,584.1 984.6,585.9 989.6,587.2 994.6,585.3 999.6,581.7 1004.6,576.5 1009.6,573.6 1014.7,572.2 1019.7,574.1 1024.7,573.2 1029.7,570.1 1034.7,570.7 1039.7,570.7 1044.7,571.5 1049.7,572.5 1054.8,573.5 1059.8,574.9 1064.8,576.5 1069.8,579.0 1074.8,577.7 1079.8,577.2 1084.8,574.9 1089.8,572.3 1094.8,572.6 1099.9,572.7 1104.9,573.5 1109.9,573.8 1114.9,573.9 1119.9,573.9 1124.9,573.9 1129.9,573.9 1134.9,573.9 1140.0,574.0 1145.0,573.4 1150.0,573.8 1155.0,576.1 1160.0,576.1 1165.0,576.0 1170.0,576.3 1175.0,576.1 1180.1,575.8 1185.1,575.0 1190.1,574.8 1195.1,571.0 1200.1,571.5 1205.1,572.9 1210.1,573.7 1215.1,576.1 1220.1,581.7 1225.2,582.7 1230.2,583.7 1235.2,584.3 1240.2,583.7 1245.2,583.2 1250.2,583.5 1255.2,585.1 1260.2,585.9 1265.3,586.5 1270.3,588.3 1275.3,590.1 1280.3,590.0 1285.3,589.7 1290.3,589.8 1295.3,591.1 1300.3,590.8 1305.4,591.2 1310.4,590.7 1315.4,590.7 1320.4,590.7 1325.4,590.5 1330.4,590.1 1335.4,590.9 1340.4,591.1 1345.4,588.3 1350.5,588.4 1355.5,587.6 1360.5,586.3 1365.5,586.6 1370.5,587.8 1375.5,587.7 1380.5,585.4 1385.5,583.4 1390.6,580.3 1395.6,575.8 1400.6,570.2 1405.6,566.8 1410.6,564.9 1415.6,564.8 1420.6,565.1 1425.6,564.7 1430.7,564.7 1435.7,563.6 1440.7,562.2 1445.7,560.0 1450.7,554.1 1455.7,550.5 1460.7,550.5 1465.7,550.5 1470.7,550.5 1475.8,550.8 1480.8,550.6 1485.8,549.5 1490.8,549.9 1495.8,549.5 1500.8,549.3 1505.8,549.6 1510.8,551.4 1515.9,551.0 1520.9,551.0 1525.9,551.0 1530.9,551.3 1535.9,551.5 1540.9,551.6 1545.9,551.1 1550.9,551.7 1556.0,553.5 1561.0,554.3 1566.0,557.7 1571.0,558.7 1576.0,559.2 1581.0,559.9 1586.0,559.9 1591.0,559.4 1596.0,560.4 1601.1,561.3 1606.1,561.7 1611.1,564.1 1616.1,567.6 1621.1,570.2 1626.1,572.8 1631.1,574.5 1636.1,573.6 1641.2,573.6 1646.2,573.6 1651.2,572.9 1656.2,572.5 1661.2,571.4 1666.2,569.5 1671.2,567.9 1676.2,565.9 1681.3,563.0 1686.3,560.1 1691.3,554.3 1696.3,550.5 1701.3,547.0 1706.3,542.2 1711.3,538.3 1716.3,536.2 1721.3,535.8 1726.4,535.3 1731.4,533.9 1736.4,534.0 1741.4,534.3 1746.4,534.1 1751.4,533.6 1756.4,533.4 1761.4,533.7 1766.5,533.5 1771.5,533.9 1776.5,533.7 1781.5,532.0 1786.5,532.3 1791.5,532.8 1796.5,533.0 1801.5,533.5 1806.6,533.6 1811.6,543.7" fill="none" stroke="#6060ee" stroke-width="1.0" />
<polyline clip-path="url(#cp)" points="67.4,458.9 72.4,457.7 77.4,456.5 82.4,453.8 87.4,451.8 92.4,449.7 97.5,447.6 102.5,446.5 107.5,444.5 112.5,443.5 117.5,443.3 122.5,443.5 127.5,443.7 132.5,443.9 137.6,444.0 142.6,444.1 147.6,442.5 152.6,440.7 157.6,436.1 162.6,434.7 167.6,431.1 172.6,431.1 177.7,426.9 182.7,427.4 187.7,428.1 192.7,429.2 197.7,429.2 202.7,428.8 207.7,429.4 212.7,422.9 217.7,418.9 222.8,416.7 227.8,414.2 232.8,418.1 237.8,424.0 242.8,430.2 247.8,436.7 252.8,444.2 257.8,451.8 262.9,459.4 267.9,466.8 272.9,470.3 277.9,480.4 282.9,494.8 287.9,507.6 292.9,524.7 297.9,535.1 303.0,538.9 308.0,546.8 313.0,556.9 318.0,568.3 323.0,576.3 328.0,580.4 333.0,582.1 338.0,575.9 343.0,570.2 348.1,564.9 353.1,559.6 358.1,550.2 363.1,544.4 368.1,540.0 373.1,537.9 378.1,535.2 383.1,533.1 388.2,527.9 393.2,522.7 398.2,518.6 403.2,513.3 408.2,509.4 413.2,506.5 418.2,504.2 423.2,502.8 428.3,501.5 433.3,497.6 438.3,494.4 443.3,489.3 448.3,487.3 453.3,485.1 458.3,482.9 463.3,483.1 468.3,483.6 473.4,484.0 478.4,484.1 483.4,485.4 488.4,484.1 493.4,483.4 498.4,483.1 503.4,483.1 508.4,483.1 513.5,483.9 518.5,484.7 523.5,485.7 528.5,486.4 533.5,485.5 538.5,481.9 543.5,478.3 548.5,477.0 553.6,475.2 558.6,475.2 563.6,474.4 568.6,475.8 573.6,476.5 578.6,476.2 583.6,475.4 588.6,470.6 593.6,467.6 598.7,464.6 603.7,459.2 608.7,453.0 613.7,451.1 618.7,450.3 623.7,450.5 628.7,450.3 633.7,449.9 638.8,449.9 643.8,450.1 648.8,450.8 653.8,451.0 658.8,450.1 663.8,448.7 668.8,447.0 673.8,444.7 678.9,444.1 683.9,444.2 688.9,444.0 693.9,444.0 698.9,444.2 703.9,444.2 708.9,444.1 713.9,444.5 718.9,444.5 724.0,443.9 729.0,446.0 734.0,449.8 739.0,450.5 744.0,450.8 749.0,450.8 754.0,450.9 759.0,451.1 764.1,451.8 769.1,452.3 774.1,452.7 779.1,452.8 784.1,453.5 789.1,453.2 794.1,451.9 799.1,450.5 804.2,448.8 809.2,446.4 814.2,443.4 819.2,438.9 824.2,435.6 829.2,433.5 834.2,430.3 839.2,425.4 844.2,420.5 849.3,417.4 854.3,415.6 859.3,414.6 864.3,414.0 869.3,413.3 874.3,413.5 879.3,413.4 884.3,413.4 889.4,413.0 894.4,411.9 899.4,411.3 904.4,410.8 909.4,407.7 914.4,406.8 919.4,407.6 924.4,409.6 929.5,411.2 934.5,413.5 939.5,416.7 944.5,421.1 949.5,425.2 954.5,428.9 959.5,434.1 964.5,441.3 969.5,449.7 974.6,457.9 979.6,465.2 984.6,472.1 989.6,478.8 994.6,486.9 999.6,494.7 1004.6,503.4 1009.6,509.8 1014.7,514.4 1019.7,516.8 1024.7,521.3 1029.7,526.2 1034.7,526.4 1039.7,526.4 1044.7,527.0 1049.7,528.1 1054.8,528.6 1059.8,530.1 1064.8,531.4 1069.8,534.1 1074.8,538.5 1079.8,540.7 1084.8,544.2 1089.8,547.3 1094.8,546.3 1099.9,546.1 1104.9,544.9 1109.9,543.3 1114.9,541.7 1119.9,540.9 1124.9,541.4 1129.9,541.7 1134.9,541.5 1140.0,541.0 1145.0,540.8 1150.0,540.9 1155.0,541.2 1160.0,541.2 1165.0,541.6 1170.0,541.8 1175.0,541.2 1180.1,540.8 1185.1,540.2 1190.1,540.2 1195.1,540.8 1200.1,540.6 1205.1,540.5 1210.1,540.5 1215.1,540.4 1220.1,540.4 1225.2,541.1 1230.2,542.7 1235.2,544.6 1240.2,546.6 1245.2,547.6 1250.2,548.3 1255.2,549.1 1260.2,550.4 1265.3,552.3 1270.3,553.0 1275.3,553.3 1280.3,553.3 1285.3,554.0 1290.3,553.9 1295.3,552.3 1300.3,552.6 1305.4,552.1 1310.4,552.9 1315.4,552.5 1320.4,552.7 1325.4,552.7 1330.4,552.3 1335.4,550.4 1340.4,548.1 1345.4,546.3 1350.5,544.5 1355.5,543.4 1360.5,542.7 1365.5,540.8 1370.5,538.4 1375.5,536.4 1380.5,534.9 1385.5,533.1 1390.6,532.9 1395.6,532.7 1400.6,533.0 1405.6,532.8 1410.6,532.4 1415.6,531.2 1420.6,530.4 1425.6,530.2 1430.7,530.2 1435.7,530.1 1440.7,529.9 1445.7,529.8 1450.7,530.8 1455.7,531.5 1460.7,531.5 1465.7,531.2 1470.7,530.9 1475.8,531.0 1480.8,531.0 1485.8,531.1 1490.8,531.4 1495.8,532.7 1500.8,533.4 1505.8,533.8 1510.8,534.5 1515.9,534.5 1520.9,534.0 1525.9,534.1 1530.9,534.2 1535.9,534.4 1540.9,535.6 1545.9,537.0 1550.9,537.1 1556.0,537.0 1561.0,537.1 1566.0,536.7 1571.0,537.0 1576.0,537.5 1581.0,537.8 1586.0,538.1 1591.0,538.7 1596.0,537.9 1601.1,536.6 1606.1,535.7 1611.1,532.9 1616.1,528.8 1621.1,525.1 1626.1,521.4 1631.1,517.8 1636.1,515.3 1641.2,512.9 1646.2,511.6 1651.2,510.1 1656.2,507.7 1661.2,506.5 1666.2,505.6 1671.2,505.2 1676.2,504.6 1681.3,504.5 1686.3,503.8 1691.3,503.6 1696.3,503.9 1701.3,504.2 1706.3,504.7 1711.3,505.1 1716.3,505.4 1721.3,505.3 1726.4,505.3 1731.4,505.3 1736.4,505.4 1741.4,506.2 1746.4,507.2 1751.4,508.9 1756.4,510.8 1761.4,512.0 1766.5,513.4 1771.5,514.2 1776.5,514.8 1781.5,517.3 1786.5,518.1 1791.5,518.6 1796.5,518.6 1801.5,518.7 1806.6,518.7 1811.6,511.2" fill="none" stroke="#bb58e0" stroke-width="1.0" />
<polyline clip-path="url(#cp)" points="67.4,496.5 72.4,493.4 77.4,490.5 82.4,487.8 87.4,485.2 92.4,482.6 97.5,480.1 102.5,477.6 107.5,475.3 112.5,472.6 117.5,470.6 122.5,469.0 127.5,467.7 132.5,466.3 137.6,465.5 142.6,464.9 147.6,468.7 152.6,467.7 157.6,467.8 162.6,466.8 167.6,466.6 172.6,468.6 177.7,480.2 182.7,482.5 187.7,483.8 192.7,485.2 197.7,489.7 202.7,496.8 207.7,505.5 212.7,529.3 217.7,553.5 222.8,578.4 227.8,607.1 232.8,626.9 237.8,642.2 242.8,655.8 247.8,668.4 252.8,677.0 257.8,682.9 262.9,687.2 267.9,690.4 272.9,691.6 277.9,693.4 282.9,695.4 287.9,697.0 292.9,697.5 297.9,699.6 303.0,700.9 308.0,700.6 313.0,699.4 318.0,697.5 323.0,696.9 328.0,696.3 333.0,696.1 338.0,694.0 343.0,689.3 348.1,681.3 353.1,666.0 358.1,655.9 363.1,646.3 368.1,636.2 373.1,624.3 378.1,616.3 383.1,611.4 388.2,608.2 393.2,606.0 398.2,605.6 403.2,603.8 408.2,599.1 413.2,594.2 418.2,586.6 423.2,577.7 428.3,571.2 433.3,567.2 438.3,562.6 443.3,556.7 448.3,548.1 453.3,541.7 458.3,536.0 463.3,532.8 468.3,528.4 473.4,523.9 478.4,524.3 483.4,526.9 488.4,532.5 493.4,537.0 498.4,540.0 503.4,541.1 508.4,540.6 513.5,542.5 518.5,543.2 523.5,544.0 528.5,544.2 533.5,544.0 538.5,543.5 543.5,543.2 548.5,542.7 553.6,541.9 558.6,541.9 563.6,541.8 568.6,541.6 573.6,541.7 578.6,541.7 583.6,541.8 588.6,540.9 593.6,539.9 598.7,539.1 603.7,537.6 608.7,534.9 613.7,527.8 618.7,520.5 623.7,513.4 628.7,507.5 633.7,501.6 638.8,494.7 643.8,489.9 648.8,484.4 653.8,480.8 658.8,478.5 663.8,478.2 668.8,478.1 673.8,476.4 678.9,474.8 683.9,473.1 688.9,471.9 693.9,471.5 698.9,470.4 703.9,469.8 708.9,469.7 713.9,472.6 718.9,474.5 724.0,478.9 729.0,481.4 734.0,482.9 739.0,483.8 744.0,484.2 749.0,485.0 754.0,485.1 759.0,485.2 764.1,485.5 769.1,486.7 774.1,487.0 779.1,487.0 784.1,487.1 789.1,487.2 794.1,487.6 799.1,488.1 804.2,488.3 809.2,488.3 814.2,488.5 819.2,488.4 824.2,487.6 829.2,486.9 834.2,486.4 839.2,484.3 844.2,482.2 849.3,477.3 854.3,473.3 859.3,469.4 864.3,466.8 869.3,464.2 874.3,460.4 879.3,458.4 884.3,458.4 889.4,460.1 894.4,462.6 899.4,464.9 904.4,467.7 909.4,477.4 914.4,486.3 919.4,494.1 924.4,500.5 929.5,507.2 934.5,512.3 939.5,517.5 944.5,521.1 949.5,524.1 954.5,528.1 959.5,531.2 964.5,533.9 969.5,538.2 974.6,541.5 979.6,544.5 984.6,548.0 989.6,551.1 994.6,552.5 999.6,552.7 1004.6,552.1 1009.6,552.3 1014.7,553.0 1019.7,555.0 1024.7,555.9 1029.7,555.5 1034.7,555.9 1039.7,556.0 1044.7,556.7 1049.7,557.7 1054.8,558.6 1059.8,560.0 1064.8,561.5 1069.8,564.0 1074.8,564.6 1079.8,565.0 1084.8,564.6 1089.8,564.0 1094.8,563.9 1099.9,563.8 1104.9,564.0 1109.9,563.6 1114.9,563.2 1119.9,562.9 1124.9,563.1 1129.9,563.2 1134.9,563.1 1140.0,563.0 1145.0,562.5 1150.0,562.8 1155.0,564.5 1160.0,564.5 1165.0,564.6 1170.0,564.8 1175.0,564.5 1180.1,564.2 1185.1,563.4 1190.1,563.3 1195.1,560.9 1200.1,561.2 1205.1,562.1 1210.1,562.7 1215.1,564.2 1220.1,568.0 1225.2,568.9 1230.2,570.0 1235.2,571.1 1240.2,571.3 1245.2,571.3 1250.2,571.7 1255.2,573.1 1260.2,574.1 1265.3,575.1 1270.3,576.5 1275.3,577.8 1280.3,577.7 1285.3,577.8 1290.3,577.8 1295.3,578.1 1300.3,578.1 1305.4,578.2 1310.4,578.1 1315.4,578.0 1320.4,578.0 1325.4,577.9 1330.4,577.5 1335.4,577.4 1340.4,576.8 1345.4,574.3 1350.5,573.8 1355.5,572.8 1360.5,571.8 1365.5,571.3 1370.5,571.3 1375.5,570.6 1380.5,568.6 1385.5,566.7 1390.6,564.5 1395.6,561.4 1400.6,557.8 1405.6,555.5 1410.6,554.1 1415.6,553.6 1420.6,553.5 1425.6,553.2 1430.7,553.2 1435.7,552.4 1440.7,551.4 1445.7,549.9 1450.7,546.3 1455.7,544.2 1460.7,544.2 1465.7,544.1 1470.7,544.0 1475.8,544.2 1480.8,544.0 1485.8,543.3 1490.8,543.7 1495.8,543.9 1500.8,544.0 1505.8,544.3 1510.8,545.7 1515.9,545.5 1520.9,545.3 1525.9,545.4 1530.9,545.6 1535.9,545.8 1540.9,546.3 1545.9,546.4 1550.9,546.9 1556.0,548.0 1561.0,548.6 1566.0,550.7 1571.0,551.5 1576.0,552.0 1581.0,552.5 1586.0,552.7 1591.0,552.5 1596.0,552.9 1601.1,553.1 1606.1,553.0 1611.1,553.7 1616.1,554.7 1621.1,555.2 1626.1,555.6 1631.1,555.6 1636.1,554.2 1641.2,553.4 1646.2,552.9 1651.2,552.0 1656.2,550.9 1661.2,549.8 1666.2,548.2 1671.2,547.0 1676.2,545.5 1681.3,543.5 1686.3,541.3 1691.3,537.4 1696.3,535.0 1701.3,532.7 1706.3,529.7 1711.3,527.2 1716.3,525.9 1721.3,525.7 1726.4,525.3 1731.4,524.3 1736.4,524.5 1741.4,524.9 1746.4,525.1 1751.4,525.3 1756.4,525.9 1761.4,526.5 1766.5,526.8 1771.5,527.3 1776.5,527.4 1781.5,527.1 1786.5,527.6 1791.5,528.1 1796.5,528.2 1801.5,528.6 1806.6,528.6 1811.6,532.9" fill="none" stroke="#bb58e0" stroke-width="1.0" />
<polyline clip-path="url(#cp)" points="67.4,477.7 72.4,475.6 77.4,473.5 82.4,470.8 87.4,468.5 92.4,466.1 97.5,463.9 102.5,462.0 107.5,459.9 112.5,458.0 117.5,457.0 122.5,456.3 127.5,455.7 132.5,455.1 137.6,454.8 142.6,454.5 147.6,455.6 152.6,454.2 157.6,452.0 162.6,450.8 167.6,448.9 172.6,449.8 177.7,453.5 182.7,455.0 187.7,456.0 192.7,457.2 197.7,459.5 202.7,462.8 207.7,467.4 212.7,476.1 217.7,486.2 222.8,497.5 227.8,510.6 232.8,522.5 237.8,533.1 242.8,543.0 247.8,552.5 252.8,560.6 257.8,567.4 262.9,573.3 267.9,578.6 272.9,581.0 277.9,586.9 282.9,595.1 287.9,602.3 292.9,611.1 297.9,617.3 303.0,619.9 308.0,623.7 313.0,628.1 318.0,632.9 323.0,636.6 328.0,638.4 333.0,639.1 338.0,635.0 343.0,629.8 348.1,623.1 353.1,612.8 358.1,603.0 363.1,595.4 368.1,588.1 373.1,581.1 378.1,575.8 383.1,572.3 388.2,568.1 393.2,564.3 398.2,562.1 403.2,558.5 408.2,554.2 413.2,550.3 418.2,545.4 423.2,540.3 428.3,536.4 433.3,532.4 438.3,528.5 443.3,523.0 448.3,517.7 453.3,513.4 458.3,509.5 463.3,508.0 468.3,506.0 473.4,504.0 478.4,504.2 483.4,506.2 488.4,508.3 493.4,510.2 498.4,511.5 503.4,512.1 508.4,511.8 513.5,513.2 518.5,514.0 523.5,514.8 528.5,515.3 533.5,514.7 538.5,512.7 543.5,510.8 548.5,509.9 553.6,508.5 558.6,508.5 563.6,508.1 568.6,508.7 573.6,509.1 578.6,508.9 583.6,508.6 588.6,505.7 593.6,503.7 598.7,501.8 603.7,498.4 608.7,493.9 613.7,489.5 618.7,485.4 623.7,482.0 628.7,478.9 633.7,475.8 638.8,472.3 643.8,470.0 648.8,467.6 653.8,465.9 658.8,464.3 663.8,463.4 668.8,462.5 673.8,460.5 678.9,459.5 683.9,458.6 688.9,457.9 693.9,457.7 698.9,457.3 703.9,457.0 708.9,456.9 713.9,458.6 718.9,459.5 724.0,461.4 729.0,463.7 734.0,466.4 739.0,467.1 744.0,467.5 749.0,467.9 754.0,468.0 759.0,468.2 764.1,468.7 769.1,469.5 774.1,469.9 779.1,469.9 784.1,470.3 789.1,470.2 794.1,469.7 799.1,469.3 804.2,468.6 809.2,467.3 814.2,465.9 819.2,463.7 824.2,461.6 829.2,460.2 834.2,458.3 839.2,454.8 844.2,451.3 849.3,447.4 854.3,444.5 859.3,442.0 864.3,440.4 869.3,438.8 874.3,437.0 879.3,435.9 884.3,435.9 889.4,436.5 894.4,437.3 899.4,438.1 904.4,439.3 909.4,442.6 914.4,446.6 919.4,450.9 924.4,455.1 929.5,459.2 934.5,462.9 939.5,467.1 944.5,471.1 949.5,474.6 954.5,478.5 959.5,482.7 964.5,487.6 969.5,494.0 974.6,499.7 979.6,504.9 984.6,510.1 989.6,514.9 994.6,519.7 999.6,523.7 1004.6,527.7 1009.6,531.1 1014.7,533.7 1019.7,535.9 1024.7,538.6 1029.7,540.8 1034.7,541.1 1039.7,541.2 1044.7,541.8 1049.7,542.9 1054.8,543.6 1059.8,545.0 1064.8,546.5 1069.8,549.1 1074.8,551.5 1079.8,552.9 1084.8,554.4 1089.8,555.6 1094.8,555.1 1099.9,555.0 1104.9,554.4 1109.9,553.4 1114.9,552.4 1119.9,551.9 1124.9,552.2 1129.9,552.5 1134.9,552.3 1140.0,552.0 1145.0,551.7 1150.0,551.8 1155.0,552.8 1160.0,552.8 1165.0,553.1 1170.0,553.3 1175.0,552.8 1180.1,552.5 1185.1,551.8 1190.1,551.7 1195.1,550.8 1200.1,550.9 1205.1,551.3 1210.1,551.6 1215.1,552.3 1220.1,554.2 1225.2,555.0 1230.2,556.3 1235.2,557.8 1240.2,558.9 1245.2,559.5 1250.2,560.0 1255.2,561.1 1260.2,562.2 1265.3,563.7 1270.3,564.8 1275.3,565.6 1280.3,565.5 1285.3,565.9 1290.3,565.9 1295.3,565.2 1300.3,565.3 1305.4,565.1 1310.4,565.5 1315.4,565.3 1320.4,565.4 1325.4,565.3 1330.4,564.9 1335.4,563.9 1340.4,562.4 1345.4,560.3 1350.5,559.2 1355.5,558.1 1360.5,557.2 1365.5,556.1 1370.5,554.9 1375.5,553.5 1380.5,551.8 1385.5,549.9 1390.6,548.7 1395.6,547.1 1400.6,545.4 1405.6,544.2 1410.6,543.2 1415.6,542.4 1420.6,541.9 1425.6,541.7 1430.7,541.7 1435.7,541.2 1440.7,540.6 1445.7,539.9 1450.7,538.6 1455.7,537.8 1460.7,537.8 1465.7,537.6 1470.7,537.4 1475.8,537.6 1480.8,537.5 1485.8,537.2 1490.8,537.6 1495.8,538.3 1500.8,538.7 1505.8,539.0 1510.8,540.1 1515.9,540.0 1520.9,539.7 1525.9,539.7 1530.9,539.9 1535.9,540.1 1540.9,540.9 1545.9,541.7 1550.9,542.0 1556.0,542.5 1561.0,542.8 1566.0,543.7 1571.0,544.2 1576.0,544.7 1581.0,545.1 1586.0,545.4 1591.0,545.6 1596.0,545.4 1601.1,544.8 1606.1,544.4 1611.1,543.3 1616.1,541.7 1621.1,540.1 1626.1,538.5 1631.1,536.7 1636.1,534.7 1641.2,533.1 1646.2,532.3 1651.2,531.0 1656.2,529.3 1661.2,528.1 1666.2,526.9 1671.2,526.1 1676.2,525.1 1681.3,524.0 1686.3,522.5 1691.3,520.5 1696.3,519.4 1701.3,518.4 1706.3,517.2 1711.3,516.2 1716.3,515.6 1721.3,515.5 1726.4,515.3 1731.4,514.8 1736.4,514.9 1741.4,515.6 1746.4,516.2 1751.4,517.1 1756.4,518.4 1761.4,519.2 1766.5,520.1 1771.5,520.7 1776.5,521.1 1781.5,522.2 1786.5,522.8 1791.5,523.3 1796.5,523.4 1801.5,523.6 1806.6,523.7 1811.6,522.0" fill="none" stroke="#f2b45a" stroke-width="1.3" />
<polyline clip-path="url(#cp)" points="67.4,452.1 72.4,452.6 77.4,452.9 82.4,449.9 87.4,448.2 92.4,447.0 97.5,443.0 102.5,441.1 107.5,440.6 112.5,440.3 117.5,443.7 122.5,448.9 127.5,452.5 132.5,458.3 137.6,462.8 142.6,464.4 147.6,471.0 152.6,465.0 157.6,454.0 162.6,447.7 167.6,437.1 172.6,433.7 177.7,456.2 182.7,472.2 187.7,480.7 192.7,493.7 197.7,500.7 202.7,499.1 207.7,512.1 212.7,549.0 217.7,592.0 222.8,633.4 227.8,680.3 232.8,715.8 237.8,725.4 242.8,727.6 247.8,723.9 252.8,702.4 257.8,682.9 262.9,663.7 267.9,642.7 272.9,613.2 277.9,596.5 282.9,592.5 287.9,592.6 292.9,599.6 297.9,615.5 303.0,621.2 308.0,615.2 313.0,609.8 318.0,602.8 323.0,596.9 328.0,591.4 333.0,589.1 338.0,583.3 343.0,576.1 348.1,565.9 353.1,552.6 358.1,535.4 363.1,527.3 368.1,519.3 373.1,513.9 378.1,517.1 383.1,529.0 388.2,527.4 393.2,524.0 398.2,518.2 403.2,510.4 408.2,502.4 413.2,503.8 418.2,505.0 423.2,506.3 428.3,510.4 433.3,506.1 438.3,500.7 443.3,490.6 448.3,484.1 453.3,476.7 458.3,474.4 463.3,480.6 468.3,491.2 473.4,497.3 478.4,506.4 483.4,518.8 488.4,529.1 493.4,540.3 498.4,551.7 503.4,556.5 508.4,557.4 513.5,551.7 518.5,542.7 523.5,534.8 528.5,526.6 533.5,516.8 538.5,501.6 543.5,489.1 548.5,481.4 553.6,476.5 558.6,475.2 563.6,477.5 568.6,480.3 573.6,480.3 578.6,478.7 583.6,474.7 588.6,468.8 593.6,466.3 598.7,461.0 603.7,453.6 608.7,445.5 613.7,447.7 618.7,448.4 623.7,452.4 628.7,459.1 633.7,466.6 638.8,465.9 643.8,465.9 648.8,462.9 653.8,461.6 658.8,459.4 663.8,457.2 668.8,451.7 673.8,446.2 678.9,444.3 683.9,446.9 688.9,450.1 693.9,456.3 698.9,464.2 703.9,466.3 708.9,466.2 713.9,472.0 718.9,475.0 724.0,481.4 729.0,487.2 734.0,492.7 739.0,490.6 744.0,488.5 749.0,484.9 754.0,480.4 759.0,475.7 764.1,473.7 769.1,476.1 774.1,472.7 779.1,471.3 784.1,470.1 789.1,464.5 794.1,452.8 799.1,443.5 804.2,437.7 809.2,432.1 814.2,428.9 819.2,426.0 824.2,425.4 829.2,424.4 834.2,421.1 839.2,416.5 844.2,413.2 849.3,410.4 854.3,408.5 859.3,411.1 864.3,418.4 869.3,425.8 874.3,432.8 879.3,437.7 884.3,445.0 889.4,454.2 894.4,468.6 899.4,478.5 904.4,488.1 909.4,503.5 914.4,514.8 919.4,520.9 924.4,528.3 929.5,537.4 934.5,533.7 939.5,531.5 944.5,527.2 949.5,523.3 954.5,521.0 959.5,519.9 964.5,519.2 969.5,527.4 974.6,535.5 979.6,540.2 984.6,548.1 989.6,554.9 994.6,554.5 999.6,553.1 1004.6,552.1 1009.6,550.0 1014.7,548.1 1019.7,549.7 1024.7,553.0 1029.7,553.6 1034.7,553.8 1039.7,552.3 1044.7,550.4 1049.7,549.5 1054.8,551.0 1059.8,553.3 1064.8,557.7 1069.8,563.4 1074.8,566.5 1079.8,567.5 1084.8,566.9 1089.8,565.1 1094.8,557.6 1099.9,552.8 1104.9,548.1 1109.9,543.2 1114.9,538.9 1119.9,538.7 1124.9,539.4 1129.9,542.2 1134.9,544.3 1140.0,545.8 1145.0,548.4 1150.0,550.9 1155.0,555.2 1160.0,556.4 1165.0,557.9 1170.0,558.3 1175.0,554.6 1180.1,549.3 1185.1,548.3 1190.1,551.0 1195.1,551.2 1200.1,557.0 1205.1,561.7 1210.1,565.8 1215.1,567.9 1220.1,574.5 1225.2,573.1 1230.2,573.3 1235.2,574.4 1240.2,572.0 1245.2,565.1 1250.2,564.5 1255.2,565.8 1260.2,566.4 1265.3,569.6 1270.3,574.9 1275.3,578.7 1280.3,577.4 1285.3,574.8 1290.3,568.9 1295.3,560.4 1300.3,553.4 1305.4,547.5 1310.4,546.3 1315.4,547.9 1320.4,552.0 1325.4,556.7 1330.4,560.6 1335.4,557.7 1340.4,553.7 1345.4,549.3 1350.5,542.6 1355.5,539.3 1360.5,541.1 1365.5,540.4 1370.5,537.8 1375.5,536.1 1380.5,534.0 1385.5,529.7 1390.6,532.6 1395.6,536.0 1400.6,538.3 1405.6,539.4 1410.6,541.4 1415.6,537.4 1420.6,534.6 1425.6,534.7 1430.7,535.2 1435.7,536.3 1440.7,539.1 1445.7,541.7 1450.7,541.2 1455.7,541.2 1460.7,540.5 1465.7,538.6 1470.7,537.0 1475.8,537.6 1480.8,537.7 1485.8,538.0 1490.8,540.2 1495.8,542.3 1500.8,541.7 1505.8,541.7 1510.8,544.3 1515.9,544.6 1520.9,542.8 1525.9,543.5 1530.9,543.8 1535.9,541.3 1540.9,542.1 1545.9,544.9 1550.9,546.0 1556.0,548.3 1561.0,550.1 1566.0,553.0 1571.0,554.3 1576.0,554.8 1581.0,554.3 1586.0,553.2 1591.0,548.3 1596.0,542.6 1601.1,538.1 1606.1,533.7 1611.1,527.6 1616.1,520.6 1621.1,516.0 1626.1,510.1 1631.1,503.6 1636.1,501.6 1641.2,501.7 1646.2,503.4 1651.2,506.0 1656.2,506.6 1661.2,508.2 1666.2,510.8 1671.2,514.0 1676.2,516.3 1681.3,521.8 1686.3,522.1 1691.3,521.1 1696.3,521.0 1701.3,521.7 1706.3,520.1 1711.3,521.3 1716.3,523.9 1721.3,523.1 1726.4,522.6 1731.4,521.9 1736.4,521.4 1741.4,520.4 1746.4,519.4 1751.4,518.9 1756.4,521.3 1761.4,523.1 1766.5,524.3 1771.5,526.1 1776.5,526.0 1781.5,526.0 1786.5,526.3 1791.5,526.8 1796.5,527.3 1801.5,529.0 1806.6,529.0 1811.6,518.0" fill="none" stroke="#a6d66c" stroke-width="1.0" />
<rect x="76.6" y="440.5" width="1.6" height="1.6" fill="#dccbad"/>
<rect x="81.6" y="461.7" width="1.6" height="1.6" fill="#dccbad"/>
<rect x="86.6" y="461.0" width="1.6" height="1.6" fill="#dccbad"/>
<rect x="91.6" y="460.3" width="1.6" height="1.6" fill="#dccbad"/>
<rect x="96.7" y="459.6" width="1.6" height="1.6" fill="#dccbad"/>
<rect x="101.7" y="458.9" width="1.6" height="1.6" fill="#dccbad"/>
<rect x="106.7" y="458.3" width="1.6" height="1.6" fill="#dccbad"/>
<rect x="111.7" y="457.6" width="1.6" height="1.6" fill="#dccbad"/>
<rect x="116.7" y="457.0" width="1.6" height="1.6" fill="#dccbad"/>
<rect x="121.7" y="426.2" width="1.6" height="1.6" fill="#dccbad"/>
<rect x="126.7" y="426.9" width="1.6" height="1.6" fill="#dccbad"/>
<rect x="131.7" y="427.7" width="1.6" height="1.6" fill="#dccbad"/>
<rect x="136.8" y="428.4" width="1.6" height="1.6" fill="#dccbad"/>
<rect x="141.8" y="429.1" width="1.6" height="1.6" fill="#dccbad"/>
<rect x="146.8" y="429.8" width="1.6" height="1.6" fill="#dccbad"/>
<rect x="151.8" y="496.6" width="1.6" height="1.6" fill="#dccbad"/>
<rect x="156.8" y="496.6" width="1.6" height="1.6" fill="#dccbad"/>
<rect x="161.8" y="492.1" width="1.6" height="1.6" fill="#dccbad"/>
<rect x="166.8" y="487.7" width="1.6" height="1.6" fill="#dccbad"/>
<rect x="171.8" y="483.5" width="1.6" height="1.6" fill="#dccbad"/>
<rect x="176.9" y="383.0" width="1.6" height="1.6" fill="#dccbad"/>
<rect x="181.9" y="386.2" width="1.6" height="1.6" fill="#dccbad"/>
<rect x="186.9" y="389.4" width="1.6" height="1.6" fill="#dccbad"/>
<rect x="191.9" y="392.6" width="1.6" height="1.6" fill="#dccbad"/>
<rect x="196.9" y="395.6" width="1.6" height="1.6" fill="#dccbad"/>
<rect x="201.9" y="398.6" width="1.6" height="1.6" fill="#dccbad"/>
<rect x="206.9" y="401.6" width="1.6" height="1.6" fill="#dccbad"/>
<rect x="211.9" y="407.6" width="1.6" height="1.6" fill="#dccbad"/>
<rect x="216.9" y="422.7" width="1.6" height="1.6" fill="#dccbad"/>
<rect x="222.0" y="444.2" width="1.6" height="1.6" fill="#dccbad"/>
<rect x="227.0" y="471.9" width="1.6" height="1.6" fill="#dccbad"/>
<rect x="232.0" y="509.5" width="1.6" height="1.6" fill="#dccbad"/>
<rect x="237.0" y="542.6" width="1.6" height="1.6" fill="#dccbad"/>
<rect x="242.0" y="571.7" width="1.6" height="1.6" fill="#dccbad"/>
<rect x="247.0" y="597.3" width="1.6" height="1.6" fill="#dccbad"/>
<rect x="252.0" y="619.9" width="1.6" height="1.6" fill="#dccbad"/>
<rect x="257.0" y="785.2" width="1.6" height="1.6" fill="#dccbad"/>
<rect x="262.1" y="782.2" width="1.6" height="1.6" fill="#dccbad"/>
<rect x="267.1" y="775.3" width="1.6" height="1.6" fill="#dccbad"/>
<rect x="272.1" y="764.6" width="1.6" height="1.6" fill="#dccbad"/>
<rect x="277.1" y="747.9" width="1.6" height="1.6" fill="#dccbad"/>
<rect x="282.1" y="727.6" width="1.6" height="1.6" fill="#dccbad"/>
<rect x="287.1" y="709.3" width="1.6" height="1.6" fill="#dccbad"/>
<rect x="292.1" y="692.8" width="1.6" height="1.6" fill="#dccbad"/>
<rect x="297.1" y="678.0" width="1.6" height="1.6" fill="#dccbad"/>
<rect x="302.2" y="664.7" width="1.6" height="1.6" fill="#dccbad"/>
<rect x="307.2" y="652.7" width="1.6" height="1.6" fill="#dccbad"/>
<rect x="312.2" y="641.9" width="1.6" height="1.6" fill="#dccbad"/>
<rect x="317.2" y="632.2" width="1.6" height="1.6" fill="#dccbad"/>
<rect x="322.2" y="623.4" width="1.6" height="1.6" fill="#dccbad"/>
<rect x="327.2" y="618.8" width="1.6" height="1.6" fill="#dccbad"/>
<rect x="332.2" y="618.8" width="1.6" height="1.6" fill="#dccbad"/>
<rect x="337.2" y="615.1" width="1.6" height="1.6" fill="#dccbad"/>
<rect x="342.2" y="608.1" width="1.6" height="1.6" fill="#dccbad"/>
<rect x="347.3" y="601.7" width="1.6" height="1.6" fill="#dccbad"/>
<rect x="352.3" y="596.0" width="1.6" height="1.6" fill="#dccbad"/>
<rect x="357.3" y="586.4" width="1.6" height="1.6" fill="#dccbad"/>
<rect x="362.3" y="572.0" width="1.6" height="1.6" fill="#dccbad"/>
<rect x="367.3" y="559.7" width="1.6" height="1.6" fill="#dccbad"/>
<rect x="372.3" y="549.1" width="1.6" height="1.6" fill="#dccbad"/>
<rect x="377.3" y="539.9" width="1.6" height="1.6" fill="#dccbad"/>
<rect x="382.3" y="483.8" width="1.6" height="1.6" fill="#dccbad"/>
<rect x="387.4" y="485.2" width="1.6" height="1.6" fill="#dccbad"/>
<rect x="392.4" y="486.6" width="1.6" height="1.6" fill="#dccbad"/>
<rect x="397.4" y="487.9" width="1.6" height="1.6" fill="#dccbad"/>
<rect x="402.4" y="489.2" width="1.6" height="1.6" fill="#dccbad"/>
<rect x="407.4" y="490.5" width="1.6" height="1.6" fill="#dccbad"/>
<rect x="412.4" y="491.7" width="1.6" height="1.6" fill="#dccbad"/>
<rect x="417.4" y="493.0" width="1.6" height="1.6" fill="#dccbad"/>
<rect x="422.4" y="494.2" width="1.6" height="1.6" fill="#dccbad"/>
<rect x="427.5" y="553.4" width="1.6" height="1.6" fill="#dccbad"/>
<rect x="432.5" y="552.2" width="1.6" height="1.6" fill="#dccbad"/>
<rect x="437.5" y="549.5" width="1.6" height="1.6" fill="#dccbad"/>
<rect x="442.5" y="544.8" width="1.6" height="1.6" fill="#dccbad"/>
<rect x="447.5" y="537.9" width="1.6" height="1.6" fill="#dccbad"/>
<rect x="452.5" y="531.6" width="1.6" height="1.6" fill="#dccbad"/>
<rect x="457.5" y="525.8" width="1.6" height="1.6" fill="#dccbad"/>
<rect x="462.5" y="520.4" width="1.6" height="1.6" fill="#dccbad"/>
<rect x="467.5" y="458.7" width="1.6" height="1.6" fill="#dccbad"/>
<rect x="472.6" y="460.0" width="1.6" height="1.6" fill="#dccbad"/>
<rect x="477.6" y="461.3" width="1.6" height="1.6" fill="#dccbad"/>
<rect x="482.6" y="464.0" width="1.6" height="1.6" fill="#dccbad"/>
<rect x="487.6" y="468.3" width="1.6" height="1.6" fill="#dccbad"/>
<rect x="492.6" y="476.8" width="1.6" height="1.6" fill="#dccbad"/>
<rect x="497.6" y="484.7" width="1.6" height="1.6" fill="#dccbad"/>
<rect x="502.6" y="491.9" width="1.6" height="1.6" fill="#dccbad"/>
<rect x="507.6" y="498.6" width="1.6" height="1.6" fill="#dccbad"/>
<rect x="512.7" y="504.7" width="1.6" height="1.6" fill="#dccbad"/>
<rect x="517.7" y="510.3" width="1.6" height="1.6" fill="#dccbad"/>
<rect x="522.7" y="515.5" width="1.6" height="1.6" fill="#dccbad"/>
<rect x="527.7" y="575.0" width="1.6" height="1.6" fill="#dccbad"/>
<rect x="532.7" y="573.6" width="1.6" height="1.6" fill="#dccbad"/>
<rect x="537.7" y="570.3" width="1.6" height="1.6" fill="#dccbad"/>
<rect x="542.7" y="563.3" width="1.6" height="1.6" fill="#dccbad"/>
<rect x="547.7" y="556.8" width="1.6" height="1.6" fill="#dccbad"/>
<rect x="552.8" y="550.7" width="1.6" height="1.6" fill="#dccbad"/>
<rect x="557.8" y="544.9" width="1.6" height="1.6" fill="#dccbad"/>
<rect x="562.8" y="539.5" width="1.6" height="1.6" fill="#dccbad"/>
<rect x="567.8" y="534.4" width="1.6" height="1.6" fill="#dccbad"/>
<rect x="572.8" y="529.6" width="1.6" height="1.6" fill="#dccbad"/>
<rect x="577.8" y="525.1" width="1.6" height="1.6" fill="#dccbad"/>
<rect x="582.8" y="520.8" width="1.6" height="1.6" fill="#dccbad"/>
<rect x="587.8" y="516.9" width="1.6" height="1.6" fill="#dccbad"/>
<rect x="592.8" y="511.0" width="1.6" height="1.6" fill="#dccbad"/>
<rect x="597.9" y="505.7" width="1.6" height="1.6" fill="#dccbad"/>
<rect x="602.9" y="500.8" width="1.6" height="1.6" fill="#dccbad"/>
<rect x="607.9" y="494.2" width="1.6" height="1.6" fill="#dccbad"/>
<rect x="612.9" y="485.7" width="1.6" height="1.6" fill="#dccbad"/>
<rect x="617.9" y="476.4" width="1.6" height="1.6" fill="#dccbad"/>
<rect x="622.9" y="419.2" width="1.6" height="1.6" fill="#dccbad"/>
<rect x="627.9" y="420.4" width="1.6" height="1.6" fill="#dccbad"/>
<rect x="632.9" y="422.9" width="1.6" height="1.6" fill="#dccbad"/>
<rect x="638.0" y="425.3" width="1.6" height="1.6" fill="#dccbad"/>
<rect x="643.0" y="427.5" width="1.6" height="1.6" fill="#dccbad"/>
<rect x="648.0" y="429.7" width="1.6" height="1.6" fill="#dccbad"/>
<rect x="653.0" y="431.8" width="1.6" height="1.6" fill="#dccbad"/>
<rect x="658.0" y="433.8" width="1.6" height="1.6" fill="#dccbad"/>
<rect x="663.0" y="435.8" width="1.6" height="1.6" fill="#dccbad"/>
<rect x="668.0" y="437.6" width="1.6" height="1.6" fill="#dccbad"/>
<rect x="673.0" y="482.2" width="1.6" height="1.6" fill="#dccbad"/>
<rect x="678.1" y="481.1" width="1.6" height="1.6" fill="#dccbad"/>
<rect x="683.1" y="480.0" width="1.6" height="1.6" fill="#dccbad"/>
<rect x="688.1" y="479.0" width="1.6" height="1.6" fill="#dccbad"/>
<rect x="693.1" y="477.9" width="1.6" height="1.6" fill="#dccbad"/>
<rect x="698.1" y="476.9" width="1.6" height="1.6" fill="#dccbad"/>
<rect x="703.1" y="475.9" width="1.6" height="1.6" fill="#dccbad"/>
<rect x="708.1" y="475.3" width="1.6" height="1.6" fill="#dccbad"/>
<rect x="713.1" y="427.2" width="1.6" height="1.6" fill="#dccbad"/>
<rect x="718.1" y="428.4" width="1.6" height="1.6" fill="#dccbad"/>
<rect x="723.2" y="430.9" width="1.6" height="1.6" fill="#dccbad"/>
<rect x="728.2" y="435.3" width="1.6" height="1.6" fill="#dccbad"/>
<rect x="733.2" y="441.4" width="1.6" height="1.6" fill="#dccbad"/>
<rect x="738.2" y="447.0" width="1.6" height="1.6" fill="#dccbad"/>
<rect x="743.2" y="452.2" width="1.6" height="1.6" fill="#dccbad"/>
<rect x="748.2" y="456.9" width="1.6" height="1.6" fill="#dccbad"/>
<rect x="753.2" y="461.3" width="1.6" height="1.6" fill="#dccbad"/>
<rect x="758.2" y="465.3" width="1.6" height="1.6" fill="#dccbad"/>
<rect x="763.3" y="511.5" width="1.6" height="1.6" fill="#dccbad"/>
<rect x="768.3" y="510.4" width="1.6" height="1.6" fill="#dccbad"/>
<rect x="773.3" y="509.4" width="1.6" height="1.6" fill="#dccbad"/>
<rect x="778.3" y="508.3" width="1.6" height="1.6" fill="#dccbad"/>
<rect x="783.3" y="507.3" width="1.6" height="1.6" fill="#dccbad"/>
<rect x="788.3" y="506.4" width="1.6" height="1.6" fill="#dccbad"/>
<rect x="793.3" y="503.7" width="1.6" height="1.6" fill="#dccbad"/>
<rect x="798.3" y="499.0" width="1.6" height="1.6" fill="#dccbad"/>
<rect x="803.4" y="492.9" width="1.6" height="1.6" fill="#dccbad"/>
<rect x="808.4" y="485.9" width="1.6" height="1.6" fill="#dccbad"/>
<rect x="813.4" y="479.5" width="1.6" height="1.6" fill="#dccbad"/>
<rect x="818.4" y="472.2" width="1.6" height="1.6" fill="#dccbad"/>
<rect x="823.4" y="463.5" width="1.6" height="1.6" fill="#dccbad"/>
<rect x="828.4" y="456.1" width="1.6" height="1.6" fill="#dccbad"/>
<rect x="833.4" y="449.7" width="1.6" height="1.6" fill="#dccbad"/>
<rect x="838.4" y="444.2" width="1.6" height="1.6" fill="#dccbad"/>
<rect x="843.4" y="437.3" width="1.6" height="1.6" fill="#dccbad"/>
<rect x="848.5" y="429.8" width="1.6" height="1.6" fill="#dccbad"/>
<rect x="853.5" y="422.0" width="1.6" height="1.6" fill="#dccbad"/>
<rect x="858.5" y="390.5" width="1.6" height="1.6" fill="#dccbad"/>
<rect x="863.5" y="391.3" width="1.6" height="1.6" fill="#dccbad"/>
<rect x="868.5" y="393.1" width="1.6" height="1.6" fill="#dccbad"/>
<rect x="873.5" y="396.0" width="1.6" height="1.6" fill="#dccbad"/>
<rect x="878.5" y="398.8" width="1.6" height="1.6" fill="#dccbad"/>
<rect x="883.5" y="403.1" width="1.6" height="1.6" fill="#dccbad"/>
<rect x="888.6" y="409.3" width="1.6" height="1.6" fill="#dccbad"/>
<rect x="893.6" y="418.8" width="1.6" height="1.6" fill="#dccbad"/>
<rect x="898.6" y="431.3" width="1.6" height="1.6" fill="#dccbad"/>
<rect x="903.6" y="442.0" width="1.6" height="1.6" fill="#dccbad"/>
<rect x="908.6" y="451.3" width="1.6" height="1.6" fill="#dccbad"/>
<rect x="913.6" y="466.0" width="1.6" height="1.6" fill="#dccbad"/>
<rect x="918.6" y="480.1" width="1.6" height="1.6" fill="#dccbad"/>
<rect x="923.6" y="491.6" width="1.6" height="1.6" fill="#dccbad"/>
<rect x="928.7" y="501.1" width="1.6" height="1.6" fill="#dccbad"/>
<rect x="933.7" y="508.9" width="1.6" height="1.6" fill="#dccbad"/>
<rect x="938.7" y="515.3" width="1.6" height="1.6" fill="#dccbad"/>
<rect x="943.7" y="544.3" width="1.6" height="1.6" fill="#dccbad"/>
<rect x="948.7" y="543.7" width="1.6" height="1.6" fill="#dccbad"/>
<rect x="953.7" y="542.3" width="1.6" height="1.6" fill="#dccbad"/>
<rect x="958.7" y="540.1" width="1.6" height="1.6" fill="#dccbad"/>
<rect x="963.7" y="538.0" width="1.6" height="1.6" fill="#dccbad"/>
<rect x="968.7" y="505.4" width="1.6" height="1.6" fill="#dccbad"/>
<rect x="973.8" y="506.4" width="1.6" height="1.6" fill="#dccbad"/>
<rect x="978.8" y="508.5" width="1.6" height="1.6" fill="#dccbad"/>
<rect x="983.8" y="510.5" width="1.6" height="1.6" fill="#dccbad"/>
<rect x="988.8" y="513.7" width="1.6" height="1.6" fill="#dccbad"/>
<rect x="993.8" y="516.7" width="1.6" height="1.6" fill="#dccbad"/>
<rect x="998.8" y="519.5" width="1.6" height="1.6" fill="#dccbad"/>
<rect x="1003.8" y="522.2" width="1.6" height="1.6" fill="#dccbad"/>
<rect x="1008.8" y="524.7" width="1.6" height="1.6" fill="#dccbad"/>
<rect x="1013.9" y="527.0" width="1.6" height="1.6" fill="#dccbad"/>
<rect x="1018.9" y="529.2" width="1.6" height="1.6" fill="#dccbad"/>
<rect x="1023.9" y="531.3" width="1.6" height="1.6" fill="#dccbad"/>
<rect x="1028.9" y="534.2" width="1.6" height="1.6" fill="#dccbad"/>
<rect x="1033.9" y="536.8" width="1.6" height="1.6" fill="#dccbad"/>
<rect x="1038.9" y="538.1" width="1.6" height="1.6" fill="#dccbad"/>
<rect x="1043.9" y="538.1" width="1.6" height="1.6" fill="#dccbad"/>
<rect x="1048.9" y="540.4" width="1.6" height="1.6" fill="#dccbad"/>
<rect x="1054.0" y="542.5" width="1.6" height="1.6" fill="#dccbad"/>
<rect x="1059.0" y="544.4" width="1.6" height="1.6" fill="#dccbad"/>
<rect x="1064.0" y="546.2" width="1.6" height="1.6" fill="#dccbad"/>
<rect x="1069.0" y="547.9" width="1.6" height="1.6" fill="#dccbad"/>
<rect x="1074.0" y="551.0" width="1.6" height="1.6" fill="#dccbad"/>
<rect x="1079.0" y="553.8" width="1.6" height="1.6" fill="#dccbad"/>
<rect x="1084.0" y="556.3" width="1.6" height="1.6" fill="#dccbad"/>
<rect x="1089.0" y="579.2" width="1.6" height="1.6" fill="#dccbad"/>
<rect x="1094.0" y="578.7" width="1.6" height="1.6" fill="#dccbad"/>
<rect x="1099.1" y="577.2" width="1.6" height="1.6" fill="#dccbad"/>
<rect x="1104.1" y="574.9" width="1.6" height="1.6" fill="#dccbad"/>
<rect x="1109.1" y="571.8" width="1.6" height="1.6" fill="#dccbad"/>
<rect x="1114.1" y="568.0" width="1.6" height="1.6" fill="#dccbad"/>
<rect x="1119.1" y="563.9" width="1.6" height="1.6" fill="#dccbad"/>
<rect x="1124.1" y="558.7" width="1.6" height="1.6" fill="#dccbad"/>
<rect x="1129.1" y="554.3" width="1.6" height="1.6" fill="#dccbad"/>
<rect x="1134.1" y="553.5" width="1.6" height="1.6" fill="#dccbad"/>
<rect x="1139.2" y="553.5" width="1.6" height="1.6" fill="#dccbad"/>
<rect x="1144.2" y="527.0" width="1.6" height="1.6" fill="#dccbad"/>
<rect x="1149.2" y="527.6" width="1.6" height="1.6" fill="#dccbad"/>
<rect x="1154.2" y="529.0" width="1.6" height="1.6" fill="#dccbad"/>
<rect x="1159.2" y="531.5" width="1.6" height="1.6" fill="#dccbad"/>
<rect x="1164.2" y="534.8" width="1.6" height="1.6" fill="#dccbad"/>
<rect x="1169.2" y="537.8" width="1.6" height="1.6" fill="#dccbad"/>
<rect x="1174.2" y="540.6" width="1.6" height="1.6" fill="#dccbad"/>
<rect x="1179.3" y="572.3" width="1.6" height="1.6" fill="#dccbad"/>
<rect x="1184.3" y="571.5" width="1.6" height="1.6" fill="#dccbad"/>
<rect x="1189.3" y="570.8" width="1.6" height="1.6" fill="#dccbad"/>
<rect x="1194.3" y="570.1" width="1.6" height="1.6" fill="#dccbad"/>
<rect x="1199.3" y="534.7" width="1.6" height="1.6" fill="#dccbad"/>
<rect x="1204.3" y="535.5" width="1.6" height="1.6" fill="#dccbad"/>
<rect x="1209.3" y="536.3" width="1.6" height="1.6" fill="#dccbad"/>
<rect x="1214.3" y="537.0" width="1.6" height="1.6" fill="#dccbad"/>
<rect x="1219.3" y="538.7" width="1.6" height="1.6" fill="#dccbad"/>
<rect x="1224.4" y="541.7" width="1.6" height="1.6" fill="#dccbad"/>
<rect x="1229.4" y="544.5" width="1.6" height="1.6" fill="#dccbad"/>
<rect x="1234.4" y="547.2" width="1.6" height="1.6" fill="#dccbad"/>
<rect x="1239.4" y="549.7" width="1.6" height="1.6" fill="#dccbad"/>
<rect x="1244.4" y="552.1" width="1.6" height="1.6" fill="#dccbad"/>
<rect x="1249.4" y="589.0" width="1.6" height="1.6" fill="#dccbad"/>
<rect x="1254.4" y="588.3" width="1.6" height="1.6" fill="#dccbad"/>
<rect x="1259.4" y="587.5" width="1.6" height="1.6" fill="#dccbad"/>
<rect x="1264.5" y="586.8" width="1.6" height="1.6" fill="#dccbad"/>
<rect x="1269.5" y="586.2" width="1.6" height="1.6" fill="#dccbad"/>
<rect x="1274.5" y="585.5" width="1.6" height="1.6" fill="#dccbad"/>
<rect x="1279.5" y="584.8" width="1.6" height="1.6" fill="#dccbad"/>
<rect x="1284.5" y="584.2" width="1.6" height="1.6" fill="#dccbad"/>
<rect x="1289.5" y="583.5" width="1.6" height="1.6" fill="#dccbad"/>
<rect x="1294.5" y="582.1" width="1.6" height="1.6" fill="#dccbad"/>
<rect x="1299.5" y="579.5" width="1.6" height="1.6" fill="#dccbad"/>
<rect x="1304.6" y="577.0" width="1.6" height="1.6" fill="#dccbad"/>
<rect x="1309.6" y="574.7" width="1.6" height="1.6" fill="#dccbad"/>
<rect x="1314.6" y="572.5" width="1.6" height="1.6" fill="#dccbad"/>
<rect x="1319.6" y="570.5" width="1.6" height="1.6" fill="#dccbad"/>
<rect x="1324.6" y="538.4" width="1.6" height="1.6" fill="#dccbad"/>
<rect x="1329.6" y="539.0" width="1.6" height="1.6" fill="#dccbad"/>
<rect x="1334.6" y="539.7" width="1.6" height="1.6" fill="#dccbad"/>
<rect x="1339.6" y="570.4" width="1.6" height="1.6" fill="#dccbad"/>
<rect x="1344.6" y="569.7" width="1.6" height="1.6" fill="#dccbad"/>
<rect x="1349.7" y="569.0" width="1.6" height="1.6" fill="#dccbad"/>
<rect x="1354.7" y="567.6" width="1.6" height="1.6" fill="#dccbad"/>
<rect x="1359.7" y="566.3" width="1.6" height="1.6" fill="#dccbad"/>
<rect x="1364.7" y="565.0" width="1.6" height="1.6" fill="#dccbad"/>
<rect x="1369.7" y="563.0" width="1.6" height="1.6" fill="#dccbad"/>
<rect x="1374.7" y="559.9" width="1.6" height="1.6" fill="#dccbad"/>
<rect x="1379.7" y="556.1" width="1.6" height="1.6" fill="#dccbad"/>
<rect x="1384.7" y="552.8" width="1.6" height="1.6" fill="#dccbad"/>
<rect x="1389.8" y="549.7" width="1.6" height="1.6" fill="#dccbad"/>
<rect x="1394.8" y="547.0" width="1.6" height="1.6" fill="#dccbad"/>
<rect x="1399.8" y="546.7" width="1.6" height="1.6" fill="#dccbad"/>
<rect x="1404.8" y="544.7" width="1.6" height="1.6" fill="#dccbad"/>
<rect x="1409.8" y="542.5" width="1.6" height="1.6" fill="#dccbad"/>
<rect x="1414.8" y="540.5" width="1.6" height="1.6" fill="#dccbad"/>
<rect x="1419.8" y="538.7" width="1.6" height="1.6" fill="#dccbad"/>
<rect x="1424.8" y="521.0" width="1.6" height="1.6" fill="#dccbad"/>
<rect x="1429.9" y="521.0" width="1.6" height="1.6" fill="#dccbad"/>
<rect x="1434.9" y="521.8" width="1.6" height="1.6" fill="#dccbad"/>
<rect x="1439.9" y="523.4" width="1.6" height="1.6" fill="#dccbad"/>
<rect x="1444.9" y="524.9" width="1.6" height="1.6" fill="#dccbad"/>
<rect x="1449.9" y="526.4" width="1.6" height="1.6" fill="#dccbad"/>
<rect x="1454.9" y="527.2" width="1.6" height="1.6" fill="#dccbad"/>
<rect x="1459.9" y="527.2" width="1.6" height="1.6" fill="#dccbad"/>
<rect x="1464.9" y="528.5" width="1.6" height="1.6" fill="#dccbad"/>
<rect x="1469.9" y="529.7" width="1.6" height="1.6" fill="#dccbad"/>
<rect x="1475.0" y="548.8" width="1.6" height="1.6" fill="#dccbad"/>
<rect x="1480.0" y="548.4" width="1.6" height="1.6" fill="#dccbad"/>
<rect x="1485.0" y="548.0" width="1.6" height="1.6" fill="#dccbad"/>
<rect x="1490.0" y="547.6" width="1.6" height="1.6" fill="#dccbad"/>
<rect x="1495.0" y="547.2" width="1.6" height="1.6" fill="#dccbad"/>
<rect x="1500.0" y="546.8" width="1.6" height="1.6" fill="#dccbad"/>
<rect x="1505.0" y="546.5" width="1.6" height="1.6" fill="#dccbad"/>
<rect x="1510.0" y="528.4" width="1.6" height="1.6" fill="#dccbad"/>
<rect x="1515.1" y="528.9" width="1.6" height="1.6" fill="#dccbad"/>
<rect x="1520.1" y="529.4" width="1.6" height="1.6" fill="#dccbad"/>
<rect x="1525.1" y="529.9" width="1.6" height="1.6" fill="#dccbad"/>
<rect x="1530.1" y="530.4" width="1.6" height="1.6" fill="#dccbad"/>
<rect x="1535.1" y="530.9" width="1.6" height="1.6" fill="#dccbad"/>
<rect x="1540.1" y="531.3" width="1.6" height="1.6" fill="#dccbad"/>
<rect x="1545.1" y="531.8" width="1.6" height="1.6" fill="#dccbad"/>
<rect x="1550.1" y="532.2" width="1.6" height="1.6" fill="#dccbad"/>
<rect x="1555.2" y="532.7" width="1.6" height="1.6" fill="#dccbad"/>
<rect x="1560.2" y="533.1" width="1.6" height="1.6" fill="#dccbad"/>
<rect x="1565.2" y="534.1" width="1.6" height="1.6" fill="#dccbad"/>
<rect x="1570.2" y="535.8" width="1.6" height="1.6" fill="#dccbad"/>
<rect x="1575.2" y="537.4" width="1.6" height="1.6" fill="#dccbad"/>
<rect x="1580.2" y="538.9" width="1.6" height="1.6" fill="#dccbad"/>
<rect x="1585.2" y="540.3" width="1.6" height="1.6" fill="#dccbad"/>
<rect x="1590.2" y="562.5" width="1.6" height="1.6" fill="#dccbad"/>
<rect x="1595.2" y="562.0" width="1.6" height="1.6" fill="#dccbad"/>
<rect x="1600.3" y="560.5" width="1.6" height="1.6" fill="#dccbad"/>
<rect x="1605.3" y="558.1" width="1.6" height="1.6" fill="#dccbad"/>
<rect x="1610.3" y="555.8" width="1.6" height="1.6" fill="#dccbad"/>
<rect x="1615.3" y="552.5" width="1.6" height="1.6" fill="#dccbad"/>
<rect x="1620.3" y="547.6" width="1.6" height="1.6" fill="#dccbad"/>
<rect x="1625.3" y="542.0" width="1.6" height="1.6" fill="#dccbad"/>
<rect x="1630.3" y="535.1" width="1.6" height="1.6" fill="#dccbad"/>
<rect x="1635.3" y="529.2" width="1.6" height="1.6" fill="#dccbad"/>
<rect x="1640.4" y="524.1" width="1.6" height="1.6" fill="#dccbad"/>
<rect x="1645.4" y="519.7" width="1.6" height="1.6" fill="#dccbad"/>
<rect x="1650.4" y="516.0" width="1.6" height="1.6" fill="#dccbad"/>
<rect x="1655.4" y="513.1" width="1.6" height="1.6" fill="#dccbad"/>
<rect x="1660.4" y="513.1" width="1.6" height="1.6" fill="#dccbad"/>
<rect x="1665.4" y="492.9" width="1.6" height="1.6" fill="#dccbad"/>
<rect x="1670.4" y="493.4" width="1.6" height="1.6" fill="#dccbad"/>
<rect x="1675.4" y="494.8" width="1.6" height="1.6" fill="#dccbad"/>
<rect x="1680.5" y="496.9" width="1.6" height="1.6" fill="#dccbad"/>
<rect x="1685.5" y="498.8" width="1.6" height="1.6" fill="#dccbad"/>
<rect x="1690.5" y="500.7" width="1.6" height="1.6" fill="#dccbad"/>
<rect x="1695.5" y="502.4" width="1.6" height="1.6" fill="#dccbad"/>
<rect x="1700.5" y="504.1" width="1.6" height="1.6" fill="#dccbad"/>
<rect x="1705.5" y="505.6" width="1.6" height="1.6" fill="#dccbad"/>
<rect x="1710.5" y="507.1" width="1.6" height="1.6" fill="#dccbad"/>
<rect x="1715.5" y="508.4" width="1.6" height="1.6" fill="#dccbad"/>
<rect x="1720.5" y="509.7" width="1.6" height="1.6" fill="#dccbad"/>
<rect x="1725.6" y="510.9" width="1.6" height="1.6" fill="#dccbad"/>
<rect x="1730.6" y="512.1" width="1.6" height="1.6" fill="#dccbad"/>
<rect x="1735.6" y="513.1" width="1.6" height="1.6" fill="#dccbad"/>
<rect x="1740.6" y="514.1" width="1.6" height="1.6" fill="#dccbad"/>
<rect x="1745.6" y="514.8" width="1.6" height="1.6" fill="#dccbad"/>
<rect x="1750.6" y="514.8" width="1.6" height="1.6" fill="#dccbad"/>
<rect x="1755.6" y="514.8" width="1.6" height="1.6" fill="#dccbad"/>
<rect x="1760.6" y="514.8" width="1.6" height="1.6" fill="#dccbad"/>
<rect x="1765.7" y="516.2" width="1.6" height="1.6" fill="#dccbad"/>
<rect x="1770.7" y="517.5" width="1.6" height="1.6" fill="#dccbad"/>
<rect x="1775.7" y="518.7" width="1.6" height="1.6" fill="#dccbad"/>
<rect x="1780.7" y="532.4" width="1.6" height="1.6" fill="#dccbad"/>
<rect x="1785.7" y="532.0" width="1.6" height="1.6" fill="#dccbad"/>
<rect x="1790.7" y="531.7" width="1.6" height="1.6" fill="#dccbad"/>
<rect x="1795.7" y="531.4" width="1.6" height="1.6" fill="#dccbad"/>
<rect x="1800.7" y="531.0" width="1.6" height="1.6" fill="#dccbad"/>
<rect x="1805.8" y="530.7" width="1.6" height="1.6" fill="#dccbad"/>
<rect x="1810.8" y="514.8" width="1.6" height="1.6" fill="#dccbad"/>
<g shape-rendering="crispEdges">
<rect x="71.5" y="458.7" width="1" height="3.8" fill="#8ad2f7"/>
<rect x="70.0" y="448.9" width="4.0" height="9.8" fill="#8ad2f7"/>
<rect x="77.5" y="453.0" width="1" height="2.4" fill="#e8867a"/>
<rect x="77.5" y="459.2" width="1" height="1.3" fill="#e8867a"/>
<rect x="76.5" y="455.9" width="3.0" height="2.8" fill="#000" stroke="#e8867a" stroke-width="1"/>
<rect x="82.5" y="427.0" width="1" height="11.5" fill="#e8867a"/>
<rect x="81.5" y="439.0" width="3.0" height="14.8" fill="#000" stroke="#e8867a" stroke-width="1"/>
<rect x="87.5" y="433.6" width="1" height="2.7" fill="#8ad2f7"/>
<rect x="86.0" y="436.3" width="4.0" height="6.6" fill="#8ad2f7"/>
<rect x="92.5" y="435.3" width="1" height="4.3" fill="#e8867a"/>
<rect x="91.0" y="439.6" width="4.0" height="2.2" fill="#e8867a"/>
<rect x="97.5" y="438.5" width="1" height="7.1" fill="#8ad2f7"/>
<rect x="96.0" y="436.9" width="4.0" height="1.6" fill="#8ad2f7"/>
<rect x="101.0" y="435.3" width="4.0" height="10.9" fill="#8ad2f7"/>
<rect x="106.5" y="436.1" width="3.0" height="5.5" fill="#000" stroke="#e8867a" stroke-width="1"/>
<rect x="112.5" y="441.8" width="1" height="8.7" fill="#8ad2f7"/>
<rect x="111.0" y="438.0" width="4.0" height="3.8" fill="#8ad2f7"/>
<rect x="117.5" y="431.4" width="1" height="8.2" fill="#8ad2f7"/>
<rect x="116.0" y="439.6" width="4.0" height="16.9" fill="#8ad2f7"/>
<rect x="121.0" y="464.4" width="4.0" height="1.2" fill="#8ad2f7"/>
<rect x="126.0" y="464.4" width="4.0" height="1.2" fill="#8ad2f7"/>
<rect x="131.0" y="464.4" width="4.0" height="1.2" fill="#8ad2f7"/>
<rect x="136.0" y="464.4" width="4.0" height="1.2" fill="#8ad2f7"/>
<rect x="141.0" y="464.4" width="4.0" height="1.2" fill="#8ad2f7"/>
<rect x="146.0" y="464.4" width="4.0" height="33.0" fill="#8ad2f7"/>
<rect x="152.5" y="418.9" width="1" height="15.3" fill="#e8867a"/>
<rect x="151.5" y="434.7" width="3.0" height="42.0" fill="#000" stroke="#e8867a" stroke-width="1"/>
<rect x="157.5" y="383.8" width="1" height="25.8" fill="#e8867a"/>
<rect x="156.5" y="410.1" width="3.0" height="21.9" fill="#000" stroke="#e8867a" stroke-width="1"/>
<rect x="162.5" y="433.1" width="1" height="36.5" fill="#8ad2f7"/>
<rect x="161.0" y="406.4" width="4.0" height="26.7" fill="#8ad2f7"/>
<rect x="167.5" y="408.0" width="1" height="3.3" fill="#e8867a"/>
<rect x="166.5" y="411.8" width="3.0" height="20.8" fill="#000" stroke="#e8867a" stroke-width="1"/>
<rect x="172.5" y="396.5" width="1" height="2.8" fill="#8ad2f7"/>
<rect x="171.0" y="399.3" width="4.0" height="81.2" fill="#8ad2f7"/>
<rect x="176.0" y="485.3" width="4.0" height="61.0" fill="#8ad2f7"/>
<rect x="181.5" y="490.1" width="3.0" height="51.4" fill="#000" stroke="#e8867a" stroke-width="1"/>
<rect x="187.5" y="460.9" width="1" height="14.7" fill="#e8867a"/>
<rect x="186.5" y="476.1" width="3.0" height="27.2" fill="#000" stroke="#e8867a" stroke-width="1"/>
<rect x="192.5" y="460.9" width="1" height="15.6" fill="#e8867a"/>
<rect x="191.5" y="477.0" width="3.0" height="7.8" fill="#000" stroke="#e8867a" stroke-width="1"/>
<rect x="196.0" y="482.5" width="4.0" height="32.8" fill="#8ad2f7"/>
<rect x="202.5" y="538.7" width="1" height="4.3" fill="#8ad2f7"/>
<rect x="201.0" y="508.7" width="4.0" height="30.0" fill="#8ad2f7"/>
<rect x="207.5" y="536.5" width="1" height="8.7" fill="#8ad2f7"/>
<rect x="206.0" y="545.2" width="4.0" height="9.3" fill="#8ad2f7"/>
<rect x="211.0" y="556.4" width="4.0" height="103.6" fill="#8ad2f7"/>
<rect x="216.0" y="666.5" width="4.0" height="25.1" fill="#8ad2f7"/>
<rect x="222.5" y="680.0" width="1" height="7.2" fill="#8ad2f7"/>
<rect x="221.0" y="687.2" width="4.0" height="34.9" fill="#8ad2f7"/>
<rect x="227.5" y="773.4" width="1" height="12.6" fill="#8ad2f7"/>
<rect x="226.0" y="723.2" width="4.0" height="50.2" fill="#8ad2f7"/>
<rect x="232.5" y="725.0" width="1" height="7.0" fill="#e8867a"/>
<rect x="232.5" y="774.5" width="1" height="4.5" fill="#e8867a"/>
<rect x="231.5" y="732.5" width="3.0" height="41.5" fill="#000" stroke="#e8867a" stroke-width="1"/>
<rect x="237.5" y="700.0" width="1" height="8.0" fill="#e8867a"/>
<rect x="236.5" y="708.5" width="3.0" height="31.7" fill="#000" stroke="#e8867a" stroke-width="1"/>
<rect x="242.5" y="725.4" width="1" height="19.6" fill="#e8867a"/>
<rect x="241.5" y="703.0" width="3.0" height="21.9" fill="#000" stroke="#e8867a" stroke-width="1"/>
<rect x="247.5" y="671.0" width="1" height="21.2" fill="#8ad2f7"/>
<rect x="246.0" y="692.2" width="4.0" height="11.4" fill="#8ad2f7"/>
<rect x="251.5" y="666.5" width="3.0" height="30.0" fill="#000" stroke="#e8867a" stroke-width="1"/>
<rect x="257.5" y="659.5" width="1" height="4.5" fill="#e8867a"/>
<rect x="256.5" y="634.7" width="3.0" height="24.3" fill="#000" stroke="#e8867a" stroke-width="1"/>
<rect x="261.5" y="612.9" width="3.0" height="27.4" fill="#000" stroke="#e8867a" stroke-width="1"/>
<rect x="266.5" y="597.6" width="3.0" height="20.4" fill="#000" stroke="#e8867a" stroke-width="1"/>
<rect x="271.5" y="556.9" width="3.0" height="40.4" fill="#000" stroke="#e8867a" stroke-width="1"/>
<rect x="277.5" y="545.5" width="1" height="6.5" fill="#8ad2f7"/>
<rect x="276.0" y="552.0" width="4.0" height="30.5" fill="#8ad2f7"/>
<rect x="282.5" y="614.2" width="1" height="8.2" fill="#8ad2f7"/>
<rect x="281.0" y="580.3" width="4.0" height="33.9" fill="#8ad2f7"/>
<rect x="287.5" y="584.7" width="1" height="20.7" fill="#8ad2f7"/>
<rect x="286.0" y="605.4" width="4.0" height="7.6" fill="#8ad2f7"/>
<rect x="292.5" y="632.0" width="1" height="3.0" fill="#8ad2f7"/>
<rect x="291.0" y="613.0" width="4.0" height="19.0" fill="#8ad2f7"/>
<rect x="297.5" y="636.0" width="1" height="17.4" fill="#8ad2f7"/>
<rect x="296.0" y="632.7" width="4.0" height="3.3" fill="#8ad2f7"/>
<rect x="301.5" y="611.4" width="3.0" height="19.3" fill="#000" stroke="#e8867a" stroke-width="1"/>
<rect x="306.5" y="584.8" width="3.0" height="25.6" fill="#000" stroke="#e8867a" stroke-width="1"/>
<rect x="312.5" y="585.8" width="1" height="6.5" fill="#8ad2f7"/>
<rect x="311.0" y="575.3" width="4.0" height="10.5" fill="#8ad2f7"/>
<rect x="317.5" y="580.3" width="1" height="14.2" fill="#8ad2f7"/>
<rect x="317.5" y="597.0" width="1" height="2.3" fill="#8ad2f7"/>
<rect x="316.0" y="594.5" width="4.0" height="2.5" fill="#8ad2f7"/>
<rect x="322.5" y="606.5" width="1" height="13.1" fill="#8ad2f7"/>
<rect x="321.0" y="596.7" width="4.0" height="9.8" fill="#8ad2f7"/>
<rect x="326.5" y="583.7" width="3.0" height="31.7" fill="#000" stroke="#e8867a" stroke-width="1"/>
<rect x="332.5" y="555.3" width="1" height="17.9" fill="#e8867a"/>
<rect x="331.5" y="573.7" width="3.0" height="17.1" fill="#000" stroke="#e8867a" stroke-width="1"/>
<rect x="336.5" y="556.9" width="3.0" height="19.7" fill="#000" stroke="#e8867a" stroke-width="1"/>
<rect x="341.0" y="558.5" width="4.0" height="2.7" fill="#8ad2f7"/>
<rect x="347.5" y="559.6" width="1" height="5.4" fill="#e8867a"/>
<rect x="346.5" y="556.2" width="3.0" height="2.9" fill="#000" stroke="#e8867a" stroke-width="1"/>
<rect x="351.5" y="517.1" width="3.0" height="38.4" fill="#000" stroke="#e8867a" stroke-width="1"/>
<rect x="357.5" y="484.6" width="1" height="2.7" fill="#e8867a"/>
<rect x="356.5" y="487.8" width="3.0" height="37.3" fill="#000" stroke="#e8867a" stroke-width="1"/>
<rect x="361.0" y="492.2" width="4.0" height="23.7" fill="#8ad2f7"/>
<rect x="367.5" y="512.4" width="1" height="6.3" fill="#8ad2f7"/>
<rect x="367.5" y="520.8" width="1" height="1.4" fill="#8ad2f7"/>
<rect x="366.0" y="518.7" width="4.0" height="2.1" fill="#8ad2f7"/>
<rect x="372.5" y="513.8" width="1" height="3.5" fill="#8ad2f7"/>
<rect x="371.0" y="517.3" width="4.0" height="11.8" fill="#8ad2f7"/>
<rect x="377.5" y="532.6" width="1" height="3.5" fill="#8ad2f7"/>
<rect x="376.0" y="524.2" width="4.0" height="8.4" fill="#8ad2f7"/>
<rect x="382.5" y="546.5" width="1" height="7.7" fill="#8ad2f7"/>
<rect x="381.0" y="534.4" width="4.0" height="12.1" fill="#8ad2f7"/>
<rect x="386.5" y="508.7" width="3.0" height="19.9" fill="#000" stroke="#e8867a" stroke-width="1"/>
<rect x="392.5" y="498.5" width="1" height="4.9" fill="#e8867a"/>
<rect x="391.5" y="503.9" width="3.0" height="3.8" fill="#000" stroke="#e8867a" stroke-width="1"/>
<rect x="397.5" y="493.6" width="1" height="6.6" fill="#e8867a"/>
<rect x="396.5" y="500.7" width="3.0" height="5.4" fill="#000" stroke="#e8867a" stroke-width="1"/>
<rect x="401.5" y="494.1" width="3.0" height="7.8" fill="#000" stroke="#e8867a" stroke-width="1"/>
<rect x="407.5" y="506.6" width="1" height="2.3" fill="#8ad2f7"/>
<rect x="406.0" y="495.0" width="4.0" height="11.6" fill="#8ad2f7"/>
<rect x="412.5" y="515.2" width="1" height="4.9" fill="#8ad2f7"/>
<rect x="411.0" y="508.2" width="4.0" height="7.0" fill="#8ad2f7"/>
<rect x="417.5" y="505.5" width="1" height="4.1" fill="#e8867a"/>
<rect x="416.5" y="510.1" width="3.0" height="8.1" fill="#000" stroke="#e8867a" stroke-width="1"/>
<rect x="422.5" y="506.6" width="1" height="12.8" fill="#8ad2f7"/>
<rect x="421.0" y="506.0" width="4.0" height="1.2" fill="#8ad2f7"/>
<rect x="427.5" y="495.0" width="1" height="2.1" fill="#8ad2f7"/>
<rect x="426.0" y="497.1" width="4.0" height="16.7" fill="#8ad2f7"/>
<rect x="431.5" y="485.8" width="3.0" height="24.7" fill="#000" stroke="#e8867a" stroke-width="1"/>
<rect x="437.5" y="472.0" width="1" height="7.0" fill="#8ad2f7"/>
<rect x="436.0" y="479.0" width="4.0" height="9.0" fill="#8ad2f7"/>
<rect x="441.5" y="460.0" width="3.0" height="27.5" fill="#000" stroke="#e8867a" stroke-width="1"/>
<rect x="447.5" y="465.8" width="1" height="4.1" fill="#8ad2f7"/>
<rect x="447.5" y="474.1" width="1" height="2.1" fill="#8ad2f7"/>
<rect x="446.0" y="469.9" width="4.0" height="4.2" fill="#8ad2f7"/>
<rect x="452.5" y="460.9" width="1" height="12.5" fill="#8ad2f7"/>
<rect x="451.0" y="473.4" width="4.0" height="3.1" fill="#8ad2f7"/>
<rect x="457.5" y="476.9" width="1" height="13.2" fill="#e8867a"/>
<rect x="456.5" y="474.6" width="3.0" height="1.8" fill="#000" stroke="#e8867a" stroke-width="1"/>
<rect x="461.0" y="472.7" width="4.0" height="46.0" fill="#8ad2f7"/>
<rect x="467.5" y="502.0" width="1" height="10.4" fill="#e8867a"/>
<rect x="466.5" y="512.9" width="3.0" height="12.9" fill="#000" stroke="#e8867a" stroke-width="1"/>
<rect x="471.5" y="505.3" width="3.0" height="8.0" fill="#000" stroke="#e8867a" stroke-width="1"/>
<rect x="477.5" y="522.2" width="1" height="6.9" fill="#8ad2f7"/>
<rect x="476.0" y="503.4" width="4.0" height="18.8" fill="#8ad2f7"/>
<rect x="481.0" y="518.0" width="4.0" height="18.1" fill="#8ad2f7"/>
<rect x="487.5" y="570.2" width="1" height="5.6" fill="#8ad2f7"/>
<rect x="486.0" y="538.2" width="4.0" height="32.0" fill="#8ad2f7"/>
<rect x="493.5" y="555.6" width="1" height="12.5" fill="#e8867a"/>
<rect x="492.0" y="568.1" width="4.0" height="2.1" fill="#e8867a"/>
<rect x="498.5" y="551.4" width="1" height="10.4" fill="#e8867a"/>
<rect x="497.5" y="562.3" width="3.0" height="3.9" fill="#000" stroke="#e8867a" stroke-width="1"/>
<rect x="503.5" y="541.7" width="1" height="4.8" fill="#e8867a"/>
<rect x="502.5" y="547.0" width="3.0" height="13.7" fill="#000" stroke="#e8867a" stroke-width="1"/>
<rect x="508.5" y="532.6" width="1" height="7.4" fill="#8ad2f7"/>
<rect x="508.5" y="540.5" width="1" height="3.9" fill="#8ad2f7"/>
<rect x="507.0" y="540.0" width="4.0" height="1.2" fill="#8ad2f7"/>
<rect x="513.5" y="544.4" width="1" height="4.2" fill="#e8867a"/>
<rect x="512.5" y="541.9" width="3.0" height="2.0" fill="#000" stroke="#e8867a" stroke-width="1"/>
<rect x="517.5" y="523.8" width="3.0" height="17.4" fill="#000" stroke="#e8867a" stroke-width="1"/>
<rect x="522.0" y="522.2" width="4.0" height="2.1" fill="#e8867a"/>
<rect x="528.5" y="528.4" width="1" height="18.1" fill="#e8867a"/>
<rect x="527.5" y="506.0" width="3.0" height="21.9" fill="#000" stroke="#e8867a" stroke-width="1"/>
<rect x="532.5" y="492.3" width="3.0" height="12.7" fill="#000" stroke="#e8867a" stroke-width="1"/>
<rect x="538.5" y="455.3" width="1" height="9.8" fill="#e8867a"/>
<rect x="537.5" y="465.6" width="3.0" height="17.8" fill="#000" stroke="#e8867a" stroke-width="1"/>
<rect x="543.5" y="458.8" width="1" height="2.1" fill="#e8867a"/>
<rect x="542.5" y="461.4" width="3.0" height="6.6" fill="#000" stroke="#e8867a" stroke-width="1"/>
<rect x="547.0" y="462.3" width="4.0" height="21.6" fill="#8ad2f7"/>
<rect x="552.0" y="480.2" width="4.0" height="1.2" fill="#8ad2f7"/>
<rect x="557.0" y="476.2" width="4.0" height="9.1" fill="#8ad2f7"/>
<rect x="563.5" y="472.7" width="1" height="4.2" fill="#e8867a"/>
<rect x="562.5" y="477.4" width="3.0" height="7.4" fill="#000" stroke="#e8867a" stroke-width="1"/>
<rect x="567.5" y="475.3" width="3.0" height="6.0" fill="#000" stroke="#e8867a" stroke-width="1"/>
<rect x="573.5" y="493.6" width="1" height="2.8" fill="#e8867a"/>
<rect x="572.5" y="484.4" width="3.0" height="8.7" fill="#000" stroke="#e8867a" stroke-width="1"/>
<rect x="578.5" y="485.3" width="1" height="4.1" fill="#e8867a"/>
<rect x="577.5" y="473.2" width="3.0" height="11.6" fill="#000" stroke="#e8867a" stroke-width="1"/>
<rect x="582.5" y="465.6" width="3.0" height="4.8" fill="#000" stroke="#e8867a" stroke-width="1"/>
<rect x="588.5" y="447.7" width="1" height="6.3" fill="#8ad2f7"/>
<rect x="587.0" y="444.9" width="4.0" height="2.8" fill="#8ad2f7"/>
<rect x="592.0" y="453.8" width="4.0" height="8.4" fill="#8ad2f7"/>
<rect x="598.5" y="460.8" width="1" height="8.2" fill="#e8867a"/>
<rect x="597.5" y="457.8" width="3.0" height="2.5" fill="#000" stroke="#e8867a" stroke-width="1"/>
<rect x="602.5" y="436.2" width="3.0" height="21.3" fill="#000" stroke="#e8867a" stroke-width="1"/>
<rect x="608.5" y="436.4" width="1" height="3.5" fill="#e8867a"/>
<rect x="607.5" y="425.1" width="3.0" height="10.8" fill="#000" stroke="#e8867a" stroke-width="1"/>
<rect x="613.5" y="420.0" width="1" height="1.8" fill="#8ad2f7"/>
<rect x="612.0" y="421.8" width="4.0" height="36.9" fill="#8ad2f7"/>
<rect x="618.5" y="465.6" width="1" height="6.3" fill="#8ad2f7"/>
<rect x="617.0" y="460.8" width="4.0" height="4.8" fill="#8ad2f7"/>
<rect x="623.5" y="477.5" width="1" height="2.8" fill="#8ad2f7"/>
<rect x="622.0" y="466.3" width="4.0" height="11.2" fill="#8ad2f7"/>
<rect x="627.5" y="469.6" width="3.0" height="12.9" fill="#000" stroke="#e8867a" stroke-width="1"/>
<rect x="632.5" y="462.7" width="3.0" height="5.2" fill="#000" stroke="#e8867a" stroke-width="1"/>
<rect x="638.5" y="451.7" width="1" height="3.5" fill="#e8867a"/>
<rect x="637.5" y="455.7" width="3.0" height="6.7" fill="#000" stroke="#e8867a" stroke-width="1"/>
<rect x="643.5" y="465.6" width="1" height="3.5" fill="#8ad2f7"/>
<rect x="642.0" y="455.9" width="4.0" height="9.7" fill="#8ad2f7"/>
<rect x="648.5" y="465.0" width="1" height="7.6" fill="#e8867a"/>
<rect x="647.5" y="462.7" width="3.0" height="1.8" fill="#000" stroke="#e8867a" stroke-width="1"/>
<rect x="653.5" y="453.8" width="1" height="3.5" fill="#8ad2f7"/>
<rect x="652.0" y="457.3" width="4.0" height="5.6" fill="#8ad2f7"/>
<rect x="657.5" y="451.5" width="3.0" height="10.2" fill="#000" stroke="#e8867a" stroke-width="1"/>
<rect x="663.5" y="438.5" width="1" height="5.6" fill="#e8867a"/>
<rect x="662.5" y="444.6" width="3.0" height="5.9" fill="#000" stroke="#e8867a" stroke-width="1"/>
<rect x="667.5" y="439.0" width="3.0" height="6.6" fill="#000" stroke="#e8867a" stroke-width="1"/>
<rect x="673.5" y="428.0" width="1" height="6.3" fill="#e8867a"/>
<rect x="672.5" y="434.8" width="3.0" height="2.1" fill="#000" stroke="#e8867a" stroke-width="1"/>
<rect x="677.0" y="433.2" width="4.0" height="20.6" fill="#8ad2f7"/>
<rect x="682.0" y="453.8" width="4.0" height="9.8" fill="#8ad2f7"/>
<rect x="688.5" y="464.2" width="1" height="2.8" fill="#e8867a"/>
<rect x="687.5" y="460.6" width="3.0" height="3.1" fill="#000" stroke="#e8867a" stroke-width="1"/>
<rect x="693.5" y="469.8" width="1" height="2.8" fill="#8ad2f7"/>
<rect x="692.0" y="458.7" width="4.0" height="11.1" fill="#8ad2f7"/>
<rect x="698.5" y="466.3" width="1" height="4.2" fill="#8ad2f7"/>
<rect x="697.0" y="470.5" width="4.0" height="3.1" fill="#8ad2f7"/>
<rect x="703.5" y="474.7" width="1" height="1.4" fill="#e8867a"/>
<rect x="702.5" y="464.7" width="3.0" height="9.5" fill="#000" stroke="#e8867a" stroke-width="1"/>
<rect x="708.5" y="465.2" width="1" height="3.9" fill="#e8867a"/>
<rect x="707.0" y="463.3" width="4.0" height="1.9" fill="#e8867a"/>
<rect x="712.0" y="463.6" width="4.0" height="25.3" fill="#8ad2f7"/>
<rect x="718.5" y="482.4" width="1" height="2.7" fill="#e8867a"/>
<rect x="717.5" y="485.6" width="3.0" height="5.3" fill="#000" stroke="#e8867a" stroke-width="1"/>
<rect x="722.0" y="483.3" width="4.0" height="22.0" fill="#8ad2f7"/>
<rect x="728.5" y="507.4" width="1" height="4.9" fill="#e8867a"/>
<rect x="727.5" y="494.0" width="3.0" height="12.9" fill="#000" stroke="#e8867a" stroke-width="1"/>
<rect x="733.5" y="486.5" width="1" height="4.2" fill="#e8867a"/>
<rect x="732.0" y="490.7" width="4.0" height="1.4" fill="#e8867a"/>
<rect x="738.5" y="474.0" width="1" height="4.2" fill="#e8867a"/>
<rect x="737.5" y="478.7" width="3.0" height="10.8" fill="#000" stroke="#e8867a" stroke-width="1"/>
<rect x="743.5" y="471.2" width="1" height="3.5" fill="#8ad2f7"/>
<rect x="743.5" y="475.0" width="1" height="2.5" fill="#8ad2f7"/>
<rect x="742.0" y="474.7" width="4.0" height="1.2" fill="#8ad2f7"/>
<rect x="747.0" y="476.1" width="4.0" height="11.1" fill="#8ad2f7"/>
<rect x="753.5" y="469.1" width="1" height="2.1" fill="#e8867a"/>
<rect x="752.5" y="471.7" width="3.0" height="13.6" fill="#000" stroke="#e8867a" stroke-width="1"/>
<rect x="758.5" y="471.9" width="1" height="5.6" fill="#e8867a"/>
<rect x="757.5" y="467.5" width="3.0" height="3.9" fill="#000" stroke="#e8867a" stroke-width="1"/>
<rect x="763.5" y="458.7" width="1" height="4.2" fill="#8ad2f7"/>
<rect x="762.0" y="462.9" width="4.0" height="5.5" fill="#8ad2f7"/>
<rect x="768.5" y="486.5" width="1" height="1.4" fill="#8ad2f7"/>
<rect x="767.0" y="469.1" width="4.0" height="17.4" fill="#8ad2f7"/>
<rect x="772.5" y="471.0" width="3.0" height="15.0" fill="#000" stroke="#e8867a" stroke-width="1"/>
<rect x="778.5" y="459.4" width="1" height="4.8" fill="#e8867a"/>
<rect x="777.5" y="464.7" width="3.0" height="6.0" fill="#000" stroke="#e8867a" stroke-width="1"/>
<rect x="783.5" y="463.6" width="1" height="3.4" fill="#e8867a"/>
<rect x="782.5" y="461.3" width="3.0" height="1.8" fill="#000" stroke="#e8867a" stroke-width="1"/>
<rect x="787.5" y="441.1" width="3.0" height="16.4" fill="#000" stroke="#e8867a" stroke-width="1"/>
<rect x="793.5" y="426.0" width="1" height="2.0" fill="#e8867a"/>
<rect x="792.5" y="428.5" width="3.0" height="8.4" fill="#000" stroke="#e8867a" stroke-width="1"/>
<rect x="798.5" y="433.6" width="1" height="2.1" fill="#e8867a"/>
<rect x="797.5" y="424.4" width="3.0" height="8.7" fill="#000" stroke="#e8867a" stroke-width="1"/>
<rect x="803.5" y="423.2" width="1" height="2.8" fill="#8ad2f7"/>
<rect x="802.0" y="426.0" width="4.0" height="9.0" fill="#8ad2f7"/>
<rect x="808.5" y="434.3" width="1" height="6.3" fill="#e8867a"/>
<rect x="807.0" y="432.9" width="4.0" height="1.4" fill="#e8867a"/>
<rect x="813.5" y="419.0" width="1" height="5.6" fill="#e8867a"/>
<rect x="812.5" y="425.1" width="3.0" height="8.0" fill="#000" stroke="#e8867a" stroke-width="1"/>
<rect x="818.5" y="411.3" width="1" height="2.1" fill="#e8867a"/>
<rect x="817.5" y="413.9" width="3.0" height="10.9" fill="#000" stroke="#e8867a" stroke-width="1"/>
<rect x="822.0" y="411.3" width="4.0" height="9.8" fill="#8ad2f7"/>
<rect x="827.0" y="423.4" width="4.0" height="6.7" fill="#8ad2f7"/>
<rect x="832.5" y="417.0" width="3.0" height="11.9" fill="#000" stroke="#e8867a" stroke-width="1"/>
<rect x="837.5" y="402.1" width="3.0" height="13.9" fill="#000" stroke="#e8867a" stroke-width="1"/>
<rect x="843.5" y="398.8" width="1" height="8.4" fill="#e8867a"/>
<rect x="842.0" y="396.7" width="4.0" height="2.1" fill="#e8867a"/>
<rect x="848.5" y="391.3" width="1" height="2.6" fill="#8ad2f7"/>
<rect x="847.0" y="393.9" width="4.0" height="13.3" fill="#8ad2f7"/>
<rect x="852.0" y="411.5" width="4.0" height="9.0" fill="#8ad2f7"/>
<rect x="857.0" y="420.5" width="4.0" height="9.1" fill="#8ad2f7"/>
<rect x="863.5" y="423.3" width="1" height="3.5" fill="#8ad2f7"/>
<rect x="862.0" y="426.8" width="4.0" height="11.1" fill="#8ad2f7"/>
<rect x="868.5" y="438.6" width="1" height="4.2" fill="#e8867a"/>
<rect x="867.5" y="434.2" width="3.0" height="3.9" fill="#000" stroke="#e8867a" stroke-width="1"/>
<rect x="872.0" y="432.3" width="4.0" height="9.8" fill="#8ad2f7"/>
<rect x="878.5" y="440.7" width="1" height="4.3" fill="#e8867a"/>
<rect x="878.5" y="445.4" width="1" height="7.8" fill="#e8867a"/>
<rect x="877.0" y="445.0" width="4.0" height="1.2" fill="#e8867a"/>
<rect x="882.0" y="444.2" width="4.0" height="22.3" fill="#8ad2f7"/>
<rect x="888.5" y="483.9" width="1" height="4.8" fill="#8ad2f7"/>
<rect x="887.0" y="467.2" width="4.0" height="16.7" fill="#8ad2f7"/>
<rect x="893.5" y="505.5" width="1" height="3.4" fill="#8ad2f7"/>
<rect x="892.0" y="484.6" width="4.0" height="20.9" fill="#8ad2f7"/>
<rect x="897.5" y="492.0" width="3.0" height="11.6" fill="#000" stroke="#e8867a" stroke-width="1"/>
<rect x="902.0" y="492.9" width="4.0" height="1.2" fill="#8ad2f7"/>
<rect x="908.0" y="521.5" width="4.0" height="22.3" fill="#8ad2f7"/>
<rect x="914.5" y="533.3" width="1" height="7.0" fill="#e8867a"/>
<rect x="914.5" y="540.6" width="1" height="4.5" fill="#e8867a"/>
<rect x="913.0" y="540.3" width="4.0" height="1.2" fill="#e8867a"/>
<rect x="918.5" y="536.6" width="3.0" height="4.6" fill="#000" stroke="#e8867a" stroke-width="1"/>
<rect x="924.5" y="537.5" width="1" height="4.9" fill="#e8867a"/>
<rect x="923.5" y="528.9" width="3.0" height="8.1" fill="#000" stroke="#e8867a" stroke-width="1"/>
<rect x="928.0" y="529.1" width="4.0" height="9.1" fill="#8ad2f7"/>
<rect x="934.5" y="517.3" width="1" height="8.3" fill="#e8867a"/>
<rect x="933.5" y="526.1" width="3.0" height="15.1" fill="#000" stroke="#e8867a" stroke-width="1"/>
<rect x="939.5" y="516.6" width="1" height="8.4" fill="#8ad2f7"/>
<rect x="938.0" y="525.0" width="4.0" height="4.1" fill="#8ad2f7"/>
<rect x="944.5" y="525.6" width="1" height="4.2" fill="#e8867a"/>
<rect x="943.5" y="515.0" width="3.0" height="10.1" fill="#000" stroke="#e8867a" stroke-width="1"/>
<rect x="948.5" y="509.4" width="3.0" height="5.3" fill="#000" stroke="#e8867a" stroke-width="1"/>
<rect x="954.5" y="506.2" width="1" height="2.7" fill="#8ad2f7"/>
<rect x="953.0" y="508.9" width="4.0" height="18.1" fill="#8ad2f7"/>
<rect x="959.5" y="528.4" width="1" height="2.1" fill="#e8867a"/>
<rect x="958.5" y="520.6" width="3.0" height="7.3" fill="#000" stroke="#e8867a" stroke-width="1"/>
<rect x="963.0" y="519.4" width="4.0" height="6.2" fill="#8ad2f7"/>
<rect x="968.0" y="525.0" width="4.0" height="30.6" fill="#8ad2f7"/>
<rect x="974.5" y="554.9" width="1" height="4.2" fill="#e8867a"/>
<rect x="973.5" y="549.9" width="3.0" height="4.5" fill="#000" stroke="#e8867a" stroke-width="1"/>
<rect x="978.0" y="545.9" width="4.0" height="4.2" fill="#8ad2f7"/>
<rect x="984.5" y="559.8" width="1" height="4.9" fill="#8ad2f7"/>
<rect x="983.0" y="548.7" width="4.0" height="11.1" fill="#8ad2f7"/>
<rect x="988.0" y="557.7" width="4.0" height="2.1" fill="#8ad2f7"/>
<rect x="994.5" y="542.4" width="1" height="10.9" fill="#e8867a"/>
<rect x="993.0" y="553.3" width="4.0" height="1.2" fill="#e8867a"/>
<rect x="998.5" y="542.9" width="3.0" height="10.9" fill="#000" stroke="#e8867a" stroke-width="1"/>
<rect x="1003.0" y="542.4" width="4.0" height="2.8" fill="#8ad2f7"/>
<rect x="1009.5" y="538.2" width="1" height="3.5" fill="#8ad2f7"/>
<rect x="1008.0" y="541.7" width="4.0" height="7.7" fill="#8ad2f7"/>
<rect x="1014.5" y="541.0" width="1" height="3.5" fill="#8ad2f7"/>
<rect x="1013.0" y="544.5" width="4.0" height="5.6" fill="#8ad2f7"/>
<rect x="1018.0" y="548.7" width="4.0" height="12.5" fill="#8ad2f7"/>
<rect x="1023.5" y="559.6" width="3.0" height="7.4" fill="#000" stroke="#e8867a" stroke-width="1"/>
<rect x="1028.5" y="548.5" width="3.0" height="11.5" fill="#000" stroke="#e8867a" stroke-width="1"/>
<rect x="1034.5" y="538.9" width="1" height="6.3" fill="#8ad2f7"/>
<rect x="1033.0" y="545.2" width="4.0" height="5.6" fill="#8ad2f7"/>
<rect x="1038.5" y="542.9" width="3.0" height="6.7" fill="#000" stroke="#e8867a" stroke-width="1"/>
<rect x="1043.0" y="548.7" width="4.0" height="2.8" fill="#8ad2f7"/>
<rect x="1049.5" y="554.9" width="1" height="4.2" fill="#8ad2f7"/>
<rect x="1048.0" y="548.7" width="4.0" height="6.2" fill="#8ad2f7"/>
<rect x="1053.0" y="550.8" width="4.0" height="4.8" fill="#8ad2f7"/>
<rect x="1059.5" y="561.9" width="1" height="5.6" fill="#8ad2f7"/>
<rect x="1058.0" y="554.3" width="4.0" height="7.6" fill="#8ad2f7"/>
<rect x="1063.0" y="561.2" width="4.0" height="3.5" fill="#8ad2f7"/>
<rect x="1068.0" y="565.4" width="4.0" height="14.6" fill="#8ad2f7"/>
<rect x="1073.5" y="570.8" width="3.0" height="8.0" fill="#000" stroke="#e8867a" stroke-width="1"/>
<rect x="1078.5" y="561.0" width="3.0" height="9.5" fill="#000" stroke="#e8867a" stroke-width="1"/>
<rect x="1084.5" y="566.1" width="1" height="2.8" fill="#e8867a"/>
<rect x="1083.5" y="559.6" width="3.0" height="6.0" fill="#000" stroke="#e8867a" stroke-width="1"/>
<rect x="1088.5" y="556.1" width="3.0" height="3.9" fill="#000" stroke="#e8867a" stroke-width="1"/>
<rect x="1093.5" y="542.9" width="3.0" height="12.2" fill="#000" stroke="#e8867a" stroke-width="1"/>
<rect x="1099.5" y="539.6" width="1" height="2.1" fill="#8ad2f7"/>
<rect x="1098.0" y="541.7" width="4.0" height="4.9" fill="#8ad2f7"/>
<rect x="1103.5" y="537.1" width="3.0" height="5.5" fill="#000" stroke="#e8867a" stroke-width="1"/>
<rect x="1108.0" y="534.6" width="4.0" height="1.2" fill="#8ad2f7"/>
<rect x="1113.0" y="534.3" width="4.0" height="1.2" fill="#8ad2f7"/>
<rect x="1119.5" y="527.8" width="1" height="3.5" fill="#8ad2f7"/>
<rect x="1118.0" y="531.3" width="4.0" height="9.7" fill="#8ad2f7"/>
<rect x="1123.0" y="542.4" width="4.0" height="7.7" fill="#8ad2f7"/>
<rect x="1129.5" y="550.8" width="1" height="3.5" fill="#8ad2f7"/>
<rect x="1128.0" y="548.7" width="4.0" height="2.1" fill="#8ad2f7"/>
<rect x="1133.5" y="545.7" width="3.0" height="5.3" fill="#000" stroke="#e8867a" stroke-width="1"/>
<rect x="1139.5" y="539.6" width="1" height="2.1" fill="#e8867a"/>
<rect x="1139.5" y="543.1" width="1" height="6.3" fill="#e8867a"/>
<rect x="1138.0" y="541.7" width="4.0" height="1.4" fill="#e8867a"/>
<rect x="1144.5" y="538.2" width="1" height="3.5" fill="#8ad2f7"/>
<rect x="1144.5" y="554.3" width="1" height="4.8" fill="#8ad2f7"/>
<rect x="1143.0" y="541.7" width="4.0" height="12.6" fill="#8ad2f7"/>
<rect x="1148.0" y="556.3" width="4.0" height="6.3" fill="#8ad2f7"/>
<rect x="1153.0" y="562.6" width="4.0" height="9.8" fill="#8ad2f7"/>
<rect x="1158.5" y="551.3" width="3.0" height="21.3" fill="#000" stroke="#e8867a" stroke-width="1"/>
<rect x="1164.5" y="542.4" width="1" height="7.1" fill="#e8867a"/>
<rect x="1163.0" y="549.5" width="4.0" height="1.2" fill="#e8867a"/>
<rect x="1168.0" y="549.4" width="4.0" height="6.9" fill="#8ad2f7"/>
<rect x="1173.5" y="544.3" width="3.0" height="14.3" fill="#000" stroke="#e8867a" stroke-width="1"/>
<rect x="1179.5" y="535.5" width="1" height="6.9" fill="#8ad2f7"/>
<rect x="1178.0" y="542.4" width="4.0" height="3.9" fill="#8ad2f7"/>
<rect x="1183.0" y="545.0" width="4.0" height="1.2" fill="#8ad2f7"/>
<rect x="1188.0" y="548.0" width="4.0" height="15.3" fill="#8ad2f7"/>
<rect x="1193.5" y="557.5" width="3.0" height="3.9" fill="#000" stroke="#e8867a" stroke-width="1"/>
<rect x="1199.5" y="573.1" width="1" height="2.0" fill="#8ad2f7"/>
<rect x="1198.0" y="558.4" width="4.0" height="14.7" fill="#8ad2f7"/>
<rect x="1203.5" y="570.1" width="3.0" height="1.8" fill="#000" stroke="#e8867a" stroke-width="1"/>
<rect x="1208.5" y="566.6" width="3.0" height="2.5" fill="#000" stroke="#e8867a" stroke-width="1"/>
<rect x="1214.5" y="573.7" width="1" height="4.9" fill="#8ad2f7"/>
<rect x="1213.0" y="565.4" width="4.0" height="8.3" fill="#8ad2f7"/>
<rect x="1218.0" y="576.5" width="4.0" height="13.3" fill="#8ad2f7"/>
<rect x="1223.5" y="566.8" width="3.0" height="19.9" fill="#000" stroke="#e8867a" stroke-width="1"/>
<rect x="1228.0" y="567.0" width="4.0" height="3.5" fill="#8ad2f7"/>
<rect x="1234.5" y="571.9" width="1" height="3.5" fill="#8ad2f7"/>
<rect x="1233.0" y="566.6" width="4.0" height="5.3" fill="#8ad2f7"/>
<rect x="1238.5" y="562.0" width="3.0" height="9.4" fill="#000" stroke="#e8867a" stroke-width="1"/>
<rect x="1243.5" y="555.7" width="3.0" height="4.6" fill="#000" stroke="#e8867a" stroke-width="1"/>
<rect x="1249.5" y="553.1" width="1" height="2.1" fill="#8ad2f7"/>
<rect x="1248.0" y="555.2" width="4.0" height="8.4" fill="#8ad2f7"/>
<rect x="1254.5" y="576.8" width="1" height="1.4" fill="#8ad2f7"/>
<rect x="1253.0" y="561.5" width="4.0" height="15.3" fill="#8ad2f7"/>
<rect x="1258.0" y="574.7" width="4.0" height="2.1" fill="#e8867a"/>
<rect x="1263.0" y="575.4" width="4.0" height="2.1" fill="#8ad2f7"/>
<rect x="1269.5" y="581.7" width="1" height="2.0" fill="#8ad2f7"/>
<rect x="1268.0" y="578.2" width="4.0" height="3.5" fill="#8ad2f7"/>
<rect x="1273.0" y="582.2" width="4.0" height="1.2" fill="#8ad2f7"/>
<rect x="1278.5" y="571.0" width="3.0" height="10.9" fill="#000" stroke="#e8867a" stroke-width="1"/>
<rect x="1283.5" y="562.0" width="3.0" height="8.0" fill="#000" stroke="#e8867a" stroke-width="1"/>
<rect x="1288.5" y="548.7" width="3.0" height="13.0" fill="#000" stroke="#e8867a" stroke-width="1"/>
<rect x="1293.5" y="539.7" width="3.0" height="4.6" fill="#000" stroke="#e8867a" stroke-width="1"/>
<rect x="1298.0" y="539.9" width="4.0" height="7.6" fill="#8ad2f7"/>
<rect x="1303.5" y="541.8" width="3.0" height="3.2" fill="#000" stroke="#e8867a" stroke-width="1"/>
<rect x="1308.0" y="542.0" width="4.0" height="13.2" fill="#8ad2f7"/>
<rect x="1313.0" y="556.4" width="4.0" height="1.2" fill="#e8867a"/>
<rect x="1319.5" y="559.4" width="1" height="2.8" fill="#8ad2f7"/>
<rect x="1318.0" y="557.3" width="4.0" height="2.1" fill="#8ad2f7"/>
<rect x="1324.0" y="559.4" width="4.0" height="11.8" fill="#8ad2f7"/>
<rect x="1329.5" y="561.3" width="3.0" height="8.7" fill="#000" stroke="#e8867a" stroke-width="1"/>
<rect x="1334.5" y="541.1" width="3.0" height="19.2" fill="#000" stroke="#e8867a" stroke-width="1"/>
<rect x="1339.0" y="536.4" width="4.0" height="2.1" fill="#e8867a"/>
<rect x="1345.5" y="537.4" width="1" height="3.9" fill="#8ad2f7"/>
<rect x="1344.0" y="536.4" width="4.0" height="1.2" fill="#8ad2f7"/>
<rect x="1349.0" y="535.0" width="4.0" height="2.8" fill="#8ad2f7"/>
<rect x="1355.5" y="535.0" width="1" height="2.1" fill="#8ad2f7"/>
<rect x="1354.0" y="537.1" width="4.0" height="7.0" fill="#8ad2f7"/>
<rect x="1359.0" y="544.1" width="4.0" height="5.5" fill="#8ad2f7"/>
<rect x="1364.5" y="533.4" width="3.0" height="12.2" fill="#000" stroke="#e8867a" stroke-width="1"/>
<rect x="1369.5" y="525.1" width="3.0" height="8.0" fill="#000" stroke="#e8867a" stroke-width="1"/>
<rect x="1375.5" y="523.2" width="1" height="1.6" fill="#8ad2f7"/>
<rect x="1374.0" y="524.8" width="4.0" height="4.6" fill="#8ad2f7"/>
<rect x="1379.0" y="529.0" width="4.0" height="4.6" fill="#8ad2f7"/>
<rect x="1384.5" y="528.5" width="3.0" height="1.8" fill="#000" stroke="#e8867a" stroke-width="1"/>
<rect x="1389.0" y="530.4" width="4.0" height="17.1" fill="#8ad2f7"/>
<rect x="1394.5" y="541.8" width="3.0" height="3.2" fill="#000" stroke="#e8867a" stroke-width="1"/>
<rect x="1400.5" y="536.4" width="1" height="4.4" fill="#8ad2f7"/>
<rect x="1399.0" y="540.8" width="4.0" height="1.2" fill="#8ad2f7"/>
<rect x="1404.0" y="539.2" width="4.0" height="1.2" fill="#8ad2f7"/>
<rect x="1410.5" y="530.8" width="1" height="6.8" fill="#8ad2f7"/>
<rect x="1409.0" y="537.6" width="4.0" height="1.2" fill="#8ad2f7"/>
<rect x="1415.5" y="524.6" width="1" height="2.7" fill="#e8867a"/>
<rect x="1414.5" y="527.8" width="3.0" height="9.5" fill="#000" stroke="#e8867a" stroke-width="1"/>
<rect x="1420.5" y="521.8" width="1" height="5.3" fill="#8ad2f7"/>
<rect x="1420.5" y="527.5" width="1" height="1.2" fill="#8ad2f7"/>
<rect x="1419.0" y="527.1" width="4.0" height="1.2" fill="#8ad2f7"/>
<rect x="1424.0" y="529.0" width="4.0" height="12.3" fill="#8ad2f7"/>
<rect x="1429.0" y="539.9" width="4.0" height="2.1" fill="#8ad2f7"/>
<rect x="1435.5" y="543.6" width="1" height="6.0" fill="#8ad2f7"/>
<rect x="1434.0" y="543.2" width="4.0" height="1.2" fill="#8ad2f7"/>
<rect x="1440.5" y="536.4" width="1" height="4.9" fill="#e8867a"/>
<rect x="1439.5" y="541.8" width="3.0" height="1.8" fill="#000" stroke="#e8867a" stroke-width="1"/>
<rect x="1444.0" y="540.4" width="4.0" height="1.2" fill="#e8867a"/>
<rect x="1450.5" y="528.0" width="1" height="2.8" fill="#8ad2f7"/>
<rect x="1449.0" y="530.8" width="4.0" height="7.7" fill="#8ad2f7"/>
<rect x="1454.0" y="537.8" width="4.0" height="4.2" fill="#8ad2f7"/>
<rect x="1459.5" y="540.8" width="3.0" height="4.6" fill="#000" stroke="#e8867a" stroke-width="1"/>
<rect x="1464.5" y="532.5" width="3.0" height="6.6" fill="#000" stroke="#e8867a" stroke-width="1"/>
<rect x="1469.0" y="532.0" width="4.0" height="2.0" fill="#e8867a"/>
<rect x="1475.5" y="529.2" width="1" height="2.8" fill="#8ad2f7"/>
<rect x="1474.0" y="532.0" width="4.0" height="9.7" fill="#8ad2f7"/>
<rect x="1480.5" y="542.6" width="1" height="4.7" fill="#8ad2f7"/>
<rect x="1479.0" y="542.4" width="4.0" height="1.2" fill="#8ad2f7"/>
<rect x="1484.0" y="541.9" width="4.0" height="1.2" fill="#8ad2f7"/>
<rect x="1490.5" y="542.9" width="1" height="4.4" fill="#8ad2f7"/>
<rect x="1489.0" y="542.7" width="4.0" height="1.2" fill="#8ad2f7"/>
<rect x="1495.5" y="542.6" width="1" height="3.3" fill="#8ad2f7"/>
<rect x="1494.0" y="542.4" width="4.0" height="1.2" fill="#8ad2f7"/>
<rect x="1500.5" y="535.5" width="1" height="3.4" fill="#e8867a"/>
<rect x="1499.5" y="539.4" width="3.0" height="5.3" fill="#000" stroke="#e8867a" stroke-width="1"/>
<rect x="1504.0" y="537.5" width="4.0" height="4.9" fill="#8ad2f7"/>
<rect x="1509.0" y="545.2" width="4.0" height="9.7" fill="#8ad2f7"/>
<rect x="1514.5" y="545.0" width="3.0" height="8.7" fill="#000" stroke="#e8867a" stroke-width="1"/>
<rect x="1519.5" y="533.9" width="3.0" height="8.7" fill="#000" stroke="#e8867a" stroke-width="1"/>
<rect x="1524.0" y="534.8" width="4.0" height="7.6" fill="#8ad2f7"/>
<rect x="1529.0" y="540.3" width="4.0" height="3.5" fill="#8ad2f7"/>
<rect x="1535.5" y="542.6" width="1" height="2.6" fill="#8ad2f7"/>
<rect x="1534.0" y="542.4" width="4.0" height="1.2" fill="#8ad2f7"/>
<rect x="1539.0" y="543.1" width="4.0" height="5.6" fill="#8ad2f7"/>
<rect x="1544.5" y="547.8" width="3.0" height="2.5" fill="#000" stroke="#e8867a" stroke-width="1"/>
<rect x="1549.0" y="548.0" width="4.0" height="1.2" fill="#8ad2f7"/>
<rect x="1554.0" y="548.7" width="4.0" height="6.2" fill="#8ad2f7"/>
<rect x="1560.5" y="554.9" width="1" height="4.2" fill="#e8867a"/>
<rect x="1559.5" y="552.0" width="3.0" height="2.4" fill="#000" stroke="#e8867a" stroke-width="1"/>
<rect x="1564.0" y="551.5" width="4.0" height="11.8" fill="#8ad2f7"/>
<rect x="1569.5" y="554.1" width="3.0" height="2.4" fill="#000" stroke="#e8867a" stroke-width="1"/>
<rect x="1575.5" y="548.0" width="1" height="2.8" fill="#8ad2f7"/>
<rect x="1574.0" y="550.8" width="4.0" height="1.2" fill="#8ad2f7"/>
<rect x="1579.0" y="552.0" width="4.0" height="1.2" fill="#8ad2f7"/>
<rect x="1584.5" y="546.4" width="3.0" height="5.3" fill="#000" stroke="#e8867a" stroke-width="1"/>
<rect x="1590.5" y="536.1" width="1" height="2.8" fill="#8ad2f7"/>
<rect x="1590.5" y="539.1" width="1" height="3.3" fill="#8ad2f7"/>
<rect x="1589.0" y="538.9" width="4.0" height="1.2" fill="#8ad2f7"/>
<rect x="1594.5" y="525.9" width="3.0" height="9.7" fill="#000" stroke="#e8867a" stroke-width="1"/>
<rect x="1600.5" y="521.5" width="1" height="2.8" fill="#8ad2f7"/>
<rect x="1599.0" y="524.3" width="4.0" height="3.9" fill="#8ad2f7"/>
<rect x="1604.0" y="527.8" width="4.0" height="2.4" fill="#8ad2f7"/>
<rect x="1609.5" y="515.8" width="3.0" height="13.6" fill="#000" stroke="#e8867a" stroke-width="1"/>
<rect x="1614.5" y="504.6" width="3.0" height="10.9" fill="#000" stroke="#e8867a" stroke-width="1"/>
<rect x="1620.5" y="501.3" width="1" height="1.0" fill="#8ad2f7"/>
<rect x="1620.5" y="502.5" width="1" height="2.3" fill="#8ad2f7"/>
<rect x="1619.0" y="502.3" width="4.0" height="1.2" fill="#8ad2f7"/>
<rect x="1625.5" y="493.7" width="1" height="4.8" fill="#e8867a"/>
<rect x="1624.5" y="499.0" width="3.0" height="3.9" fill="#000" stroke="#e8867a" stroke-width="1"/>
<rect x="1630.5" y="494.4" width="1" height="3.2" fill="#e8867a"/>
<rect x="1629.0" y="497.6" width="4.0" height="2.3" fill="#e8867a"/>
<rect x="1635.5" y="493.7" width="1" height="3.9" fill="#8ad2f7"/>
<rect x="1634.0" y="497.6" width="4.0" height="7.9" fill="#8ad2f7"/>
<rect x="1639.0" y="504.3" width="4.0" height="1.2" fill="#8ad2f7"/>
<rect x="1645.5" y="511.1" width="1" height="2.8" fill="#8ad2f7"/>
<rect x="1644.0" y="504.1" width="4.0" height="7.0" fill="#8ad2f7"/>
<rect x="1650.5" y="511.5" width="1" height="2.4" fill="#8ad2f7"/>
<rect x="1649.0" y="509.7" width="4.0" height="1.8" fill="#8ad2f7"/>
<rect x="1654.5" y="501.1" width="3.0" height="9.5" fill="#000" stroke="#e8867a" stroke-width="1"/>
<rect x="1659.0" y="499.5" width="4.0" height="13.9" fill="#8ad2f7"/>
<rect x="1665.5" y="517.3" width="1" height="3.5" fill="#8ad2f7"/>
<rect x="1664.0" y="515.3" width="4.0" height="2.0" fill="#8ad2f7"/>
<rect x="1669.0" y="517.3" width="4.0" height="9.8" fill="#8ad2f7"/>
<rect x="1675.5" y="528.5" width="1" height="2.1" fill="#e8867a"/>
<rect x="1674.5" y="523.4" width="3.0" height="4.6" fill="#000" stroke="#e8867a" stroke-width="1"/>
<rect x="1679.0" y="523.6" width="4.0" height="4.9" fill="#8ad2f7"/>
<rect x="1684.5" y="515.1" width="3.0" height="13.6" fill="#000" stroke="#e8867a" stroke-width="1"/>
<rect x="1689.5" y="513.0" width="3.0" height="2.5" fill="#000" stroke="#e8867a" stroke-width="1"/>
<rect x="1694.0" y="513.2" width="4.0" height="13.2" fill="#8ad2f7"/>
<rect x="1700.5" y="526.5" width="1" height="4.0" fill="#8ad2f7"/>
<rect x="1699.0" y="526.3" width="4.0" height="1.2" fill="#8ad2f7"/>
<rect x="1704.5" y="521.1" width="3.0" height="5.7" fill="#000" stroke="#e8867a" stroke-width="1"/>
<rect x="1709.5" y="521.1" width="3.0" height="1.5" fill="#000" stroke="#e8867a" stroke-width="1"/>
<rect x="1714.0" y="521.4" width="4.0" height="4.2" fill="#8ad2f7"/>
<rect x="1719.5" y="522.8" width="3.0" height="2.3" fill="#000" stroke="#e8867a" stroke-width="1"/>
<rect x="1725.5" y="515.6" width="1" height="3.3" fill="#8ad2f7"/>
<rect x="1724.0" y="518.9" width="4.0" height="5.0" fill="#8ad2f7"/>
<rect x="1730.5" y="521.4" width="1" height="5.9" fill="#e8867a"/>
<rect x="1729.5" y="517.7" width="3.0" height="3.2" fill="#000" stroke="#e8867a" stroke-width="1"/>
<rect x="1734.0" y="518.1" width="4.0" height="1.2" fill="#8ad2f7"/>
<rect x="1740.5" y="520.6" width="1" height="5.0" fill="#8ad2f7"/>
<rect x="1739.0" y="515.6" width="4.0" height="5.0" fill="#8ad2f7"/>
<rect x="1745.0" y="517.0" width="4.0" height="1.2" fill="#8ad2f7"/>
<rect x="1750.0" y="515.6" width="4.0" height="5.8" fill="#8ad2f7"/>
<rect x="1755.0" y="520.6" width="4.0" height="8.4" fill="#8ad2f7"/>
<rect x="1761.5" y="527.5" width="1" height="5.7" fill="#8ad2f7"/>
<rect x="1760.0" y="527.3" width="4.0" height="1.2" fill="#8ad2f7"/>
<rect x="1765.0" y="526.5" width="4.0" height="1.2" fill="#8ad2f7"/>
<rect x="1771.5" y="526.7" width="1" height="5.6" fill="#8ad2f7"/>
<rect x="1770.0" y="526.5" width="4.0" height="1.2" fill="#8ad2f7"/>
<rect x="1775.5" y="521.1" width="3.0" height="4.9" fill="#000" stroke="#e8867a" stroke-width="1"/>
<rect x="1781.5" y="515.6" width="1" height="5.8" fill="#8ad2f7"/>
<rect x="1780.0" y="521.4" width="4.0" height="7.6" fill="#8ad2f7"/>
<rect x="1785.0" y="529.0" width="4.0" height="1.2" fill="#8ad2f7"/>
<rect x="1790.0" y="529.0" width="4.0" height="1.2" fill="#8ad2f7"/>
<rect x="1795.0" y="529.0" width="4.0" height="1.2" fill="#8ad2f7"/>
<rect x="1800.0" y="529.0" width="4.0" height="1.2" fill="#8ad2f7"/>
<rect x="1805.0" y="529.0" width="4.0" height="1.2" fill="#8ad2f7"/>
<rect x="1810.9" y="474.0" width="4.2" height="60.0" fill="none" stroke="#f0e050" stroke-width="1.2"/>
</g>
<rect x="70.5" y="1087.7" width="4" height="0.8" fill="#5230c4"/>
<rect x="75.5" y="1087.7" width="4" height="1.3" fill="#5230c4"/>
<rect x="100.6" y="1087.7" width="4" height="0.8" fill="#5230c4"/>
<rect x="105.6" y="1087.7" width="4" height="0.4" fill="#5230c4"/>
<rect x="110.6" y="1087.7" width="4" height="0.9" fill="#5230c4"/>
<rect x="115.6" y="1087.7" width="4" height="2.6" fill="#5230c4"/>
<rect x="120.6" y="1087.7" width="4" height="4.0" fill="#5230c4"/>
<rect x="125.6" y="1087.7" width="4" height="4.4" fill="#5230c4"/>
<rect x="130.6" y="1087.7" width="4" height="4.3" fill="#5230c4"/>
<rect x="135.7" y="1087.7" width="4" height="3.8" fill="#5230c4"/>
<rect x="140.7" y="1087.7" width="4" height="3.3" fill="#5230c4"/>
<rect x="145.7" y="1087.7" width="4" height="5.7" fill="#5230c4"/>
<rect x="150.7" y="1087.7" width="4" height="0.5" fill="#5230c4"/>
<rect x="155.7" y="1083.3" width="4" height="4.4" fill="#b02eb0"/>
<rect x="160.7" y="1083.6" width="4" height="4.1" fill="#b02eb0"/>
<rect x="165.7" y="1082.3" width="4" height="5.4" fill="#b02eb0"/>
<rect x="170.7" y="1087.7" width="4" height="0.9" fill="#5230c4"/>
<rect x="175.8" y="1087.7" width="4" height="10.0" fill="#5230c4"/>
<rect x="180.8" y="1087.7" width="4" height="8.2" fill="#5230c4"/>
<rect x="185.8" y="1087.7" width="4" height="5.1" fill="#5230c4"/>
<rect x="190.8" y="1087.7" width="4" height="3.1" fill="#5230c4"/>
<rect x="195.8" y="1087.7" width="4" height="5.3" fill="#5230c4"/>
<rect x="200.8" y="1087.7" width="4" height="7.8" fill="#5230c4"/>
<rect x="205.8" y="1087.7" width="4" height="9.5" fill="#5230c4"/>
<rect x="210.8" y="1087.7" width="4" height="18.8" fill="#5230c4"/>
<rect x="215.8" y="1087.7" width="4" height="23.9" fill="#5230c4"/>
<rect x="220.9" y="1087.7" width="4" height="26.2" fill="#5230c4"/>
<rect x="225.9" y="1087.7" width="4" height="28.6" fill="#5230c4"/>
<rect x="230.9" y="1087.7" width="4" height="22.1" fill="#5230c4"/>
<rect x="235.9" y="1087.7" width="4" height="13.4" fill="#5230c4"/>
<rect x="240.9" y="1087.7" width="4" height="6.2" fill="#5230c4"/>
<rect x="245.9" y="1087.7" width="4" height="1.1" fill="#5230c4"/>
<rect x="250.9" y="1081.6" width="4" height="6.1" fill="#b02eb0"/>
<rect x="255.9" y="1074.8" width="4" height="12.9" fill="#b02eb0"/>
<rect x="261.0" y="1069.8" width="4" height="17.9" fill="#b02eb0"/>
<rect x="266.0" y="1067.0" width="4" height="20.7" fill="#b02eb0"/>
<rect x="271.0" y="1063.3" width="4" height="24.4" fill="#b02eb0"/>
<rect x="276.0" y="1065.9" width="4" height="21.8" fill="#b02eb0"/>
<rect x="281.0" y="1071.9" width="4" height="15.8" fill="#b02eb0"/>
<rect x="286.0" y="1075.9" width="4" height="11.8" fill="#b02eb0"/>
<rect x="291.0" y="1080.6" width="4" height="7.1" fill="#b02eb0"/>
<rect x="296.0" y="1083.7" width="4" height="4.0" fill="#b02eb0"/>
<rect x="301.1" y="1083.1" width="4" height="4.6" fill="#b02eb0"/>
<rect x="306.1" y="1080.6" width="4" height="7.1" fill="#b02eb0"/>
<rect x="311.1" y="1080.2" width="4" height="7.5" fill="#b02eb0"/>
<rect x="316.1" y="1081.7" width="4" height="6.0" fill="#b02eb0"/>
<rect x="321.1" y="1083.9" width="4" height="3.8" fill="#b02eb0"/>
<rect x="326.1" y="1083.1" width="4" height="4.6" fill="#b02eb0"/>
<rect x="331.1" y="1082.3" width="4" height="5.4" fill="#b02eb0"/>
<rect x="336.1" y="1081.0" width="4" height="6.7" fill="#b02eb0"/>
<rect x="341.1" y="1081.6" width="4" height="6.1" fill="#b02eb0"/>
<rect x="346.2" y="1082.1" width="4" height="5.6" fill="#b02eb0"/>
<rect x="351.2" y="1079.5" width="4" height="8.2" fill="#b02eb0"/>
<rect x="356.2" y="1076.6" width="4" height="11.1" fill="#b02eb0"/>
<rect x="361.2" y="1079.2" width="4" height="8.5" fill="#b02eb0"/>
<rect x="366.2" y="1082.2" width="4" height="5.5" fill="#b02eb0"/>
<rect x="371.2" y="1085.3" width="4" height="2.4" fill="#b02eb0"/>
<rect x="381.2" y="1087.7" width="4" height="2.9" fill="#5230c4"/>
<rect x="386.3" y="1087.7" width="4" height="0.8" fill="#5230c4"/>
<rect x="391.3" y="1087.3" width="4" height="0.4" fill="#b02eb0"/>
<rect x="396.3" y="1086.8" width="4" height="0.9" fill="#b02eb0"/>
<rect x="401.3" y="1086.4" width="4" height="1.3" fill="#b02eb0"/>
<rect x="411.3" y="1087.7" width="4" height="2.1" fill="#5230c4"/>
<rect x="416.3" y="1087.7" width="4" height="2.6" fill="#5230c4"/>
<rect x="421.3" y="1087.7" width="4" height="2.6" fill="#5230c4"/>
<rect x="426.4" y="1087.7" width="4" height="3.4" fill="#5230c4"/>
<rect x="431.4" y="1087.7" width="4" height="1.0" fill="#5230c4"/>
<rect x="441.4" y="1085.3" width="4" height="2.4" fill="#b02eb0"/>
<rect x="446.4" y="1085.9" width="4" height="1.8" fill="#b02eb0"/>
<rect x="451.4" y="1086.9" width="4" height="0.8" fill="#b02eb0"/>
<rect x="461.4" y="1087.7" width="4" height="4.6" fill="#5230c4"/>
<rect x="466.4" y="1087.7" width="4" height="6.2" fill="#5230c4"/>
<rect x="471.5" y="1087.7" width="4" height="5.8" fill="#5230c4"/>
<rect x="476.5" y="1087.7" width="4" height="6.8" fill="#5230c4"/>
<rect x="481.5" y="1087.7" width="4" height="8.1" fill="#5230c4"/>
<rect x="486.5" y="1087.7" width="4" height="11.1" fill="#5230c4"/>
<rect x="491.5" y="1087.7" width="4" height="11.2" fill="#5230c4"/>
<rect x="496.5" y="1087.7" width="4" height="9.5" fill="#5230c4"/>
<rect x="501.5" y="1087.7" width="4" height="6.2" fill="#5230c4"/>
<rect x="506.5" y="1087.7" width="4" height="3.3" fill="#5230c4"/>
<rect x="511.6" y="1087.7" width="4" height="1.5" fill="#5230c4"/>
<rect x="516.6" y="1086.3" width="4" height="1.4" fill="#b02eb0"/>
<rect x="521.6" y="1084.8" width="4" height="2.9" fill="#b02eb0"/>
<rect x="526.6" y="1082.8" width="4" height="4.9" fill="#b02eb0"/>
<rect x="531.6" y="1080.9" width="4" height="6.8" fill="#b02eb0"/>
<rect x="536.6" y="1078.2" width="4" height="9.5" fill="#b02eb0"/>
<rect x="541.6" y="1077.5" width="4" height="10.2" fill="#b02eb0"/>
<rect x="546.6" y="1080.5" width="4" height="7.2" fill="#b02eb0"/>
<rect x="551.7" y="1082.5" width="4" height="5.2" fill="#b02eb0"/>
<rect x="556.7" y="1084.6" width="4" height="3.1" fill="#b02eb0"/>
<rect x="561.7" y="1085.3" width="4" height="2.4" fill="#b02eb0"/>
<rect x="566.7" y="1085.9" width="4" height="1.8" fill="#b02eb0"/>
<rect x="581.7" y="1086.9" width="4" height="0.8" fill="#b02eb0"/>
<rect x="586.7" y="1085.3" width="4" height="2.4" fill="#b02eb0"/>
<rect x="591.7" y="1086.4" width="4" height="1.3" fill="#b02eb0"/>
<rect x="596.8" y="1086.8" width="4" height="0.9" fill="#b02eb0"/>
<rect x="601.8" y="1085.4" width="4" height="2.3" fill="#b02eb0"/>
<rect x="606.8" y="1084.1" width="4" height="3.6" fill="#b02eb0"/>
<rect x="616.8" y="1087.7" width="4" height="2.1" fill="#5230c4"/>
<rect x="621.8" y="1087.7" width="4" height="4.5" fill="#5230c4"/>
<rect x="626.8" y="1087.7" width="4" height="4.6" fill="#5230c4"/>
<rect x="631.8" y="1087.7" width="4" height="3.7" fill="#5230c4"/>
<rect x="636.9" y="1087.7" width="4" height="2.5" fill="#5230c4"/>
<rect x="641.9" y="1087.7" width="4" height="2.7" fill="#5230c4"/>
<rect x="646.9" y="1087.7" width="4" height="2.4" fill="#5230c4"/>
<rect x="651.9" y="1087.7" width="4" height="2.2" fill="#5230c4"/>
<rect x="656.9" y="1087.7" width="4" height="0.9" fill="#5230c4"/>
<rect x="666.9" y="1086.4" width="4" height="1.3" fill="#b02eb0"/>
<rect x="671.9" y="1085.8" width="4" height="1.9" fill="#b02eb0"/>
<rect x="682.0" y="1087.7" width="4" height="1.9" fill="#5230c4"/>
<rect x="687.0" y="1087.7" width="4" height="2.4" fill="#5230c4"/>
<rect x="692.0" y="1087.7" width="4" height="3.4" fill="#5230c4"/>
<rect x="697.0" y="1087.7" width="4" height="4.0" fill="#5230c4"/>
<rect x="702.0" y="1087.7" width="4" height="3.1" fill="#5230c4"/>
<rect x="707.0" y="1087.7" width="4" height="2.2" fill="#5230c4"/>
<rect x="712.0" y="1087.7" width="4" height="4.0" fill="#5230c4"/>
<rect x="717.0" y="1087.7" width="4" height="4.1" fill="#5230c4"/>
<rect x="722.1" y="1087.7" width="4" height="5.5" fill="#5230c4"/>
<rect x="727.1" y="1087.7" width="4" height="4.5" fill="#5230c4"/>
<rect x="732.1" y="1087.7" width="4" height="3.2" fill="#5230c4"/>
<rect x="737.1" y="1087.7" width="4" height="1.0" fill="#5230c4"/>
<rect x="742.1" y="1087.1" width="4" height="0.6" fill="#b02eb0"/>
<rect x="752.1" y="1086.0" width="4" height="1.7" fill="#b02eb0"/>
<rect x="757.1" y="1085.0" width="4" height="2.7" fill="#b02eb0"/>
<rect x="762.2" y="1084.9" width="4" height="2.8" fill="#b02eb0"/>
<rect x="767.2" y="1086.7" width="4" height="1.0" fill="#b02eb0"/>
<rect x="772.2" y="1086.2" width="4" height="1.5" fill="#b02eb0"/>
<rect x="777.2" y="1085.5" width="4" height="2.2" fill="#b02eb0"/>
<rect x="782.2" y="1085.0" width="4" height="2.7" fill="#b02eb0"/>
<rect x="787.2" y="1083.2" width="4" height="4.5" fill="#b02eb0"/>
<rect x="792.2" y="1081.6" width="4" height="6.1" fill="#b02eb0"/>
<rect x="797.2" y="1081.2" width="4" height="6.5" fill="#b02eb0"/>
<rect x="802.3" y="1082.8" width="4" height="4.9" fill="#b02eb0"/>
<rect x="807.3" y="1084.0" width="4" height="3.7" fill="#b02eb0"/>
<rect x="812.3" y="1084.4" width="4" height="3.3" fill="#b02eb0"/>
<rect x="817.3" y="1084.0" width="4" height="3.7" fill="#b02eb0"/>
<rect x="822.3" y="1085.1" width="4" height="2.6" fill="#b02eb0"/>
<rect x="827.3" y="1087.0" width="4" height="0.7" fill="#b02eb0"/>
<rect x="832.3" y="1086.9" width="4" height="0.8" fill="#b02eb0"/>
<rect x="837.3" y="1085.8" width="4" height="1.9" fill="#b02eb0"/>
<rect x="842.3" y="1085.3" width="4" height="2.4" fill="#b02eb0"/>
<rect x="847.4" y="1086.5" width="4" height="1.2" fill="#b02eb0"/>
<rect x="852.4" y="1087.7" width="4" height="1.0" fill="#5230c4"/>
<rect x="857.4" y="1087.7" width="4" height="3.0" fill="#5230c4"/>
<rect x="862.4" y="1087.7" width="4" height="4.7" fill="#5230c4"/>
<rect x="867.4" y="1087.7" width="4" height="4.8" fill="#5230c4"/>
<rect x="872.4" y="1087.7" width="4" height="5.3" fill="#5230c4"/>
<rect x="877.4" y="1087.7" width="4" height="5.4" fill="#5230c4"/>
<rect x="882.4" y="1087.7" width="4" height="7.0" fill="#5230c4"/>
<rect x="887.5" y="1087.7" width="4" height="8.6" fill="#5230c4"/>
<rect x="892.5" y="1087.7" width="4" height="10.5" fill="#5230c4"/>
<rect x="897.5" y="1087.7" width="4" height="9.0" fill="#5230c4"/>
<rect x="902.5" y="1087.7" width="4" height="7.3" fill="#5230c4"/>
<rect x="907.5" y="1087.7" width="4" height="10.3" fill="#5230c4"/>
<rect x="912.5" y="1087.7" width="4" height="10.1" fill="#5230c4"/>
<rect x="917.5" y="1087.7" width="4" height="8.2" fill="#5230c4"/>
<rect x="922.5" y="1087.7" width="4" height="5.4" fill="#5230c4"/>
<rect x="927.6" y="1087.7" width="4" height="4.0" fill="#5230c4"/>
<rect x="932.6" y="1087.7" width="4" height="1.3" fill="#5230c4"/>
<rect x="942.6" y="1085.0" width="4" height="2.7" fill="#b02eb0"/>
<rect x="947.6" y="1083.2" width="4" height="4.5" fill="#b02eb0"/>
<rect x="952.6" y="1084.1" width="4" height="3.6" fill="#b02eb0"/>
<rect x="957.6" y="1083.9" width="4" height="3.8" fill="#b02eb0"/>
<rect x="962.6" y="1084.4" width="4" height="3.3" fill="#b02eb0"/>
<rect x="982.7" y="1087.7" width="4" height="1.0" fill="#5230c4"/>
<rect x="987.7" y="1087.7" width="4" height="0.8" fill="#5230c4"/>
<rect x="997.7" y="1085.6" width="4" height="2.1" fill="#b02eb0"/>
<rect x="1002.7" y="1084.9" width="4" height="2.8" fill="#b02eb0"/>
<rect x="1007.7" y="1085.0" width="4" height="2.7" fill="#b02eb0"/>
<rect x="1012.8" y="1085.1" width="4" height="2.6" fill="#b02eb0"/>
<rect x="1017.8" y="1086.2" width="4" height="1.5" fill="#b02eb0"/>
<rect x="1022.8" y="1086.4" width="4" height="1.3" fill="#b02eb0"/>
<rect x="1027.8" y="1085.4" width="4" height="2.3" fill="#b02eb0"/>
<rect x="1032.8" y="1085.2" width="4" height="2.5" fill="#b02eb0"/>
<rect x="1037.8" y="1084.4" width="4" height="3.3" fill="#b02eb0"/>
<rect x="1042.8" y="1085.0" width="4" height="2.7" fill="#b02eb0"/>
<rect x="1047.8" y="1085.7" width="4" height="2.0" fill="#b02eb0"/>
<rect x="1052.9" y="1086.2" width="4" height="1.5" fill="#b02eb0"/>
<rect x="1057.9" y="1087.0" width="4" height="0.7" fill="#b02eb0"/>
<rect x="1067.9" y="1087.7" width="4" height="1.5" fill="#5230c4"/>
<rect x="1072.9" y="1087.7" width="4" height="1.0" fill="#5230c4"/>
<rect x="1082.9" y="1086.4" width="4" height="1.3" fill="#b02eb0"/>
<rect x="1087.9" y="1085.7" width="4" height="2.0" fill="#b02eb0"/>
<rect x="1092.9" y="1084.2" width="4" height="3.5" fill="#b02eb0"/>
<rect x="1098.0" y="1084.1" width="4" height="3.6" fill="#b02eb0"/>
<rect x="1103.0" y="1083.4" width="4" height="4.3" fill="#b02eb0"/>
<rect x="1108.0" y="1083.3" width="4" height="4.4" fill="#b02eb0"/>
<rect x="1113.0" y="1083.7" width="4" height="4.0" fill="#b02eb0"/>
<rect x="1118.0" y="1084.8" width="4" height="2.9" fill="#b02eb0"/>
<rect x="1123.0" y="1086.6" width="4" height="1.1" fill="#b02eb0"/>
<rect x="1143.1" y="1087.7" width="4" height="0.7" fill="#5230c4"/>
<rect x="1148.1" y="1087.7" width="4" height="2.0" fill="#5230c4"/>
<rect x="1153.1" y="1087.7" width="4" height="3.3" fill="#5230c4"/>
<rect x="1158.1" y="1087.7" width="4" height="1.5" fill="#5230c4"/>
<rect x="1168.1" y="1087.7" width="4" height="0.4" fill="#5230c4"/>
<rect x="1173.1" y="1086.9" width="4" height="0.8" fill="#b02eb0"/>
<rect x="1178.2" y="1086.6" width="4" height="1.1" fill="#b02eb0"/>
<rect x="1183.2" y="1086.5" width="4" height="1.2" fill="#b02eb0"/>
<rect x="1188.2" y="1087.7" width="4" height="0.5" fill="#5230c4"/>
<rect x="1193.2" y="1087.7" width="4" height="0.7" fill="#5230c4"/>
<rect x="1198.2" y="1087.7" width="4" height="2.1" fill="#5230c4"/>
<rect x="1203.2" y="1087.7" width="4" height="2.3" fill="#5230c4"/>
<rect x="1208.2" y="1087.7" width="4" height="1.7" fill="#5230c4"/>
<rect x="1213.2" y="1087.7" width="4" height="1.9" fill="#5230c4"/>
<rect x="1218.2" y="1087.7" width="4" height="3.3" fill="#5230c4"/>
<rect x="1223.3" y="1087.7" width="4" height="1.3" fill="#5230c4"/>
<rect x="1228.3" y="1087.7" width="4" height="0.5" fill="#5230c4"/>
<rect x="1238.3" y="1086.5" width="4" height="1.2" fill="#b02eb0"/>
<rect x="1243.3" y="1085.4" width="4" height="2.3" fill="#b02eb0"/>
<rect x="1248.3" y="1085.7" width="4" height="2.0" fill="#b02eb0"/>
<rect x="1253.3" y="1087.3" width="4" height="0.4" fill="#b02eb0"/>
<rect x="1263.4" y="1087.7" width="4" height="0.6" fill="#5230c4"/>
<rect x="1268.4" y="1087.7" width="4" height="1.0" fill="#5230c4"/>
<rect x="1273.4" y="1087.7" width="4" height="1.2" fill="#5230c4"/>
<rect x="1283.4" y="1086.1" width="4" height="1.6" fill="#b02eb0"/>
<rect x="1288.4" y="1084.2" width="4" height="3.5" fill="#b02eb0"/>
<rect x="1293.4" y="1082.8" width="4" height="4.9" fill="#b02eb0"/>
<rect x="1298.4" y="1083.4" width="4" height="4.3" fill="#b02eb0"/>
<rect x="1303.5" y="1083.6" width="4" height="4.1" fill="#b02eb0"/>
<rect x="1308.5" y="1085.4" width="4" height="2.3" fill="#b02eb0"/>
<rect x="1313.5" y="1086.7" width="4" height="1.0" fill="#b02eb0"/>
<rect x="1323.5" y="1087.7" width="4" height="1.7" fill="#5230c4"/>
<rect x="1328.5" y="1087.7" width="4" height="1.4" fill="#5230c4"/>
<rect x="1333.5" y="1087.0" width="4" height="0.7" fill="#b02eb0"/>
<rect x="1338.5" y="1085.7" width="4" height="2.0" fill="#b02eb0"/>
<rect x="1343.5" y="1085.4" width="4" height="2.3" fill="#b02eb0"/>
<rect x="1348.6" y="1085.6" width="4" height="2.1" fill="#b02eb0"/>
<rect x="1353.6" y="1086.6" width="4" height="1.1" fill="#b02eb0"/>
<rect x="1363.6" y="1086.9" width="4" height="0.8" fill="#b02eb0"/>
<rect x="1368.6" y="1085.9" width="4" height="1.8" fill="#b02eb0"/>
<rect x="1373.6" y="1086.1" width="4" height="1.6" fill="#b02eb0"/>
<rect x="1378.6" y="1086.9" width="4" height="0.8" fill="#b02eb0"/>
<rect x="1383.6" y="1087.0" width="4" height="0.7" fill="#b02eb0"/>
<rect x="1388.7" y="1087.7" width="4" height="1.3" fill="#5230c4"/>
<rect x="1393.7" y="1087.7" width="4" height="1.7" fill="#5230c4"/>
<rect x="1398.7" y="1087.7" width="4" height="1.8" fill="#5230c4"/>
<rect x="1403.7" y="1087.7" width="4" height="1.6" fill="#5230c4"/>
<rect x="1408.7" y="1087.7" width="4" height="1.3" fill="#5230c4"/>
<rect x="1418.7" y="1087.3" width="4" height="0.4" fill="#b02eb0"/>
<rect x="1423.7" y="1087.7" width="4" height="0.7" fill="#5230c4"/>
<rect x="1428.8" y="1087.7" width="4" height="1.4" fill="#5230c4"/>
<rect x="1433.8" y="1087.7" width="4" height="1.7" fill="#5230c4"/>
<rect x="1438.8" y="1087.7" width="4" height="1.6" fill="#5230c4"/>
<rect x="1443.8" y="1087.7" width="4" height="1.3" fill="#5230c4"/>
<rect x="1448.8" y="1087.7" width="4" height="0.9" fill="#5230c4"/>
<rect x="1453.8" y="1087.7" width="4" height="0.9" fill="#5230c4"/>
<rect x="1458.8" y="1087.7" width="4" height="0.7" fill="#5230c4"/>
<rect x="1468.8" y="1087.1" width="4" height="0.6" fill="#b02eb0"/>
<rect x="1478.9" y="1087.7" width="4" height="0.6" fill="#5230c4"/>
<rect x="1483.9" y="1087.7" width="4" height="0.8" fill="#5230c4"/>
<rect x="1488.9" y="1087.7" width="4" height="0.8" fill="#5230c4"/>
<rect x="1493.9" y="1087.7" width="4" height="0.8" fill="#5230c4"/>
<rect x="1508.9" y="1087.7" width="4" height="1.5" fill="#5230c4"/>
<rect x="1514.0" y="1087.7" width="4" height="1.0" fill="#5230c4"/>
<rect x="1519.0" y="1087.2" width="4" height="0.5" fill="#b02eb0"/>
<rect x="1539.0" y="1087.7" width="4" height="0.5" fill="#5230c4"/>
<rect x="1544.0" y="1087.7" width="4" height="0.6" fill="#5230c4"/>
<rect x="1549.0" y="1087.7" width="4" height="0.6" fill="#5230c4"/>
<rect x="1554.1" y="1087.7" width="4" height="1.2" fill="#5230c4"/>
<rect x="1559.1" y="1087.7" width="4" height="1.0" fill="#5230c4"/>
<rect x="1564.1" y="1087.7" width="4" height="1.8" fill="#5230c4"/>
<rect x="1569.1" y="1087.7" width="4" height="1.1" fill="#5230c4"/>
<rect x="1584.1" y="1086.9" width="4" height="0.8" fill="#b02eb0"/>
<rect x="1589.1" y="1085.9" width="4" height="1.8" fill="#b02eb0"/>
<rect x="1594.1" y="1084.3" width="4" height="3.4" fill="#b02eb0"/>
<rect x="1599.2" y="1084.2" width="4" height="3.5" fill="#b02eb0"/>
<rect x="1604.2" y="1084.6" width="4" height="3.1" fill="#b02eb0"/>
<rect x="1609.2" y="1083.8" width="4" height="3.9" fill="#b02eb0"/>
<rect x="1614.2" y="1082.9" width="4" height="4.8" fill="#b02eb0"/>
<rect x="1619.2" y="1082.8" width="4" height="4.9" fill="#b02eb0"/>
<rect x="1624.2" y="1083.1" width="4" height="4.6" fill="#b02eb0"/>
<rect x="1629.2" y="1083.7" width="4" height="4.0" fill="#b02eb0"/>
<rect x="1634.2" y="1085.4" width="4" height="2.3" fill="#b02eb0"/>
<rect x="1639.3" y="1086.5" width="4" height="1.2" fill="#b02eb0"/>
<rect x="1649.3" y="1087.7" width="4" height="1.1" fill="#5230c4"/>
<rect x="1654.3" y="1087.7" width="4" height="0.6" fill="#5230c4"/>
<rect x="1659.3" y="1087.7" width="4" height="1.7" fill="#5230c4"/>
<rect x="1664.3" y="1087.7" width="4" height="2.5" fill="#5230c4"/>
<rect x="1669.3" y="1087.7" width="4" height="3.7" fill="#5230c4"/>
<rect x="1674.3" y="1087.7" width="4" height="3.6" fill="#5230c4"/>
<rect x="1679.4" y="1087.7" width="4" height="3.8" fill="#5230c4"/>
<rect x="1684.4" y="1087.7" width="4" height="2.3" fill="#5230c4"/>
<rect x="1689.4" y="1087.7" width="4" height="1.2" fill="#5230c4"/>
<rect x="1694.4" y="1087.7" width="4" height="1.9" fill="#5230c4"/>
<rect x="1699.4" y="1087.7" width="4" height="2.1" fill="#5230c4"/>
<rect x="1704.4" y="1087.7" width="4" height="1.4" fill="#5230c4"/>
<rect x="1709.4" y="1087.7" width="4" height="1.0" fill="#5230c4"/>
<rect x="1714.4" y="1087.7" width="4" height="1.1" fill="#5230c4"/>
<rect x="1719.4" y="1087.7" width="4" height="0.8" fill="#5230c4"/>
<rect x="1724.5" y="1087.7" width="4" height="0.7" fill="#5230c4"/>
<rect x="1744.5" y="1087.3" width="4" height="0.4" fill="#b02eb0"/>
<rect x="1754.5" y="1087.7" width="4" height="0.8" fill="#5230c4"/>
<rect x="1759.5" y="1087.7" width="4" height="1.0" fill="#5230c4"/>
<rect x="1764.6" y="1087.7" width="4" height="0.9" fill="#5230c4"/>
<rect x="1769.6" y="1087.7" width="4" height="0.7" fill="#5230c4"/>
<rect x="1779.6" y="1087.7" width="4" height="0.4" fill="#5230c4"/>
<rect x="1784.6" y="1087.7" width="4" height="0.6" fill="#5230c4"/>
<rect x="1789.6" y="1087.7" width="4" height="0.5" fill="#5230c4"/>
<rect x="1794.6" y="1087.7" width="4" height="0.4" fill="#5230c4"/>
<rect x="1809.7" y="1082.7" width="4" height="5.0" fill="#b02eb0"/>
<polyline clip-path="url(#cp)" points="67.4,1079.1 72.4,1080.7 77.4,1081.5 82.4,1080.2 87.4,1080.2 92.4,1080.1 97.5,1080.1 102.5,1081.2 107.5,1080.9 112.5,1081.6 117.5,1084.0 122.5,1086.4 127.5,1087.9 132.5,1088.8 137.6,1089.3 142.6,1089.6 147.6,1093.5 152.6,1088.4 157.6,1082.4 162.6,1081.7 167.6,1079.0 172.6,1085.6 177.7,1097.2 182.7,1097.4 187.7,1095.5 192.7,1094.3 197.7,1097.8 202.7,1102.3 207.7,1106.4 212.7,1120.4 217.7,1131.5 222.8,1140.2 227.8,1149.8 232.8,1148.8 237.8,1143.5 242.8,1137.9 247.8,1133.1 252.8,1124.4 257.8,1114.3 262.9,1104.9 267.9,1096.9 272.9,1087.1 277.9,1084.2 282.9,1086.2 287.9,1087.3 292.9,1090.2 297.9,1092.3 303.0,1090.6 308.0,1086.4 313.0,1084.0 318.0,1084.0 323.0,1085.2 328.0,1083.4 333.0,1081.2 338.0,1078.2 343.0,1077.2 348.1,1076.3 353.1,1071.7 358.1,1066.0 363.1,1066.5 368.1,1068.1 373.1,1070.6 378.1,1073.1 383.1,1076.6 388.2,1074.7 393.2,1073.4 398.2,1072.7 403.2,1072.0 408.2,1073.6 413.2,1076.0 418.2,1077.1 423.2,1077.8 428.3,1079.4 433.3,1077.3 438.3,1076.7 443.3,1073.4 448.3,1073.5 453.3,1074.4 458.3,1075.0 463.3,1080.9 468.3,1084.0 473.4,1085.1 478.4,1087.8 483.4,1091.1 488.4,1096.9 493.4,1099.8 498.4,1100.5 503.4,1098.7 508.4,1096.6 513.5,1095.2 518.5,1092.0 523.5,1089.8 528.5,1086.5 533.5,1082.9 538.5,1077.9 543.5,1074.7 548.5,1075.8 553.6,1076.4 558.6,1077.8 563.6,1077.9 568.6,1078.0 573.6,1079.5 578.6,1079.3 583.6,1078.6 588.6,1076.5 593.6,1077.2 598.7,1077.4 603.7,1075.4 608.7,1073.3 613.7,1076.4 618.7,1079.4 623.7,1082.9 628.7,1084.2 633.7,1084.2 638.8,1083.6 643.8,1084.5 648.8,1084.8 653.8,1085.1 658.8,1084.1 663.8,1082.7 668.8,1081.4 673.8,1080.4 678.9,1082.2 683.9,1084.6 688.9,1085.8 693.9,1087.6 698.9,1089.2 703.9,1089.0 708.9,1088.8 713.9,1091.5 718.9,1092.6 724.0,1095.5 729.0,1095.6 734.0,1095.1 739.0,1093.1 744.0,1091.3 749.0,1091.6 754.0,1089.8 759.0,1088.1 764.1,1087.3 769.1,1088.9 774.1,1088.0 779.1,1086.7 784.1,1085.5 789.1,1082.6 794.1,1079.5 799.1,1077.5 804.2,1077.8 809.2,1078.1 814.2,1077.6 819.2,1076.4 824.2,1076.9 829.2,1078.5 834.2,1078.3 839.2,1076.7 844.2,1075.5 849.3,1076.4 854.3,1078.8 859.3,1081.6 864.3,1084.5 869.3,1085.8 874.3,1087.6 879.3,1089.1 884.3,1092.4 889.4,1096.2 894.4,1100.8 899.4,1101.5 904.4,1101.6 909.4,1107.1 914.4,1109.4 919.4,1109.7 924.4,1108.2 929.5,1107.8 934.5,1105.5 939.5,1103.9 944.5,1100.8 949.5,1097.8 954.5,1097.8 959.5,1096.7 964.5,1096.3 969.5,1099.3 974.6,1100.0 979.6,1100.2 984.6,1101.0 989.6,1101.0 994.6,1099.9 999.6,1097.5 1004.6,1096.2 1009.6,1095.5 1014.7,1095.0 1019.7,1095.7 1024.7,1095.6 1029.7,1094.1 1034.7,1093.2 1039.7,1091.6 1044.7,1091.5 1049.7,1091.8 1054.8,1091.9 1059.8,1092.5 1064.8,1093.1 1069.8,1095.0 1074.8,1094.8 1079.8,1093.3 1084.8,1092.1 1089.8,1090.8 1094.8,1088.4 1099.9,1087.5 1104.9,1085.7 1109.9,1084.5 1114.9,1083.9 1119.9,1084.3 1124.9,1085.8 1129.9,1086.8 1134.9,1086.8 1140.0,1086.4 1145.0,1087.7 1150.0,1089.4 1155.0,1091.5 1160.0,1090.2 1165.0,1089.1 1170.0,1089.3 1175.0,1087.8 1180.1,1087.3 1185.1,1086.8 1190.1,1088.7 1195.1,1089.0 1200.1,1091.0 1205.1,1091.7 1210.1,1091.6 1215.1,1092.3 1220.1,1094.4 1225.2,1092.8 1230.2,1092.1 1235.2,1091.8 1240.2,1090.2 1245.2,1088.5 1250.2,1088.3 1255.2,1089.8 1260.2,1090.3 1265.3,1090.9 1270.3,1091.6 1275.3,1092.1 1280.3,1090.8 1285.3,1088.9 1290.3,1086.2 1295.3,1083.5 1300.3,1083.0 1305.4,1082.2 1310.4,1083.4 1315.4,1084.4 1320.4,1085.5 1325.4,1087.6 1330.4,1087.7 1335.4,1085.4 1340.4,1083.6 1345.4,1082.7 1350.5,1082.4 1355.5,1083.1 1360.5,1084.4 1365.5,1083.3 1370.5,1081.8 1375.5,1081.6 1380.5,1082.2 1385.5,1082.1 1390.6,1084.5 1395.6,1085.3 1400.6,1085.8 1405.6,1086.0 1410.6,1086.0 1415.6,1084.8 1420.6,1084.2 1425.6,1085.6 1430.7,1086.5 1435.7,1087.3 1440.7,1087.6 1445.7,1087.6 1450.7,1087.4 1455.7,1087.7 1460.7,1087.7 1465.7,1086.7 1470.7,1086.2 1475.8,1087.0 1480.8,1087.6 1485.8,1087.9 1490.8,1088.2 1495.8,1088.3 1500.8,1088.0 1505.8,1088.1 1510.8,1089.7 1515.9,1089.3 1520.9,1087.8 1525.9,1087.9 1530.9,1088.1 1535.9,1088.1 1540.9,1088.8 1545.9,1089.0 1550.9,1089.2 1556.0,1090.0 1561.0,1090.1 1566.0,1091.4 1571.0,1090.9 1576.0,1090.2 1581.0,1089.9 1586.0,1088.9 1591.0,1087.5 1596.0,1085.0 1601.1,1084.0 1606.1,1083.7 1611.1,1081.9 1616.1,1079.8 1621.1,1078.5 1626.1,1077.6 1631.1,1077.3 1636.1,1078.3 1641.2,1079.1 1646.2,1080.6 1651.2,1081.8 1656.2,1081.5 1661.2,1082.9 1666.2,1084.4 1671.2,1086.5 1676.2,1087.4 1681.3,1088.5 1686.3,1087.6 1691.3,1086.8 1696.3,1088.0 1701.3,1088.7 1706.3,1088.4 1711.3,1088.2 1716.3,1088.6 1721.3,1088.5 1726.4,1088.5 1731.4,1087.8 1736.4,1087.4 1741.4,1087.5 1746.4,1087.2 1751.4,1087.5 1756.4,1088.5 1761.4,1089.0 1766.5,1089.1 1771.5,1089.1 1776.5,1088.4 1781.5,1088.9 1786.5,1089.2 1791.5,1089.3 1796.5,1089.3 1801.5,1089.3 1806.6,1089.2 1811.6,1082.8" fill="none" stroke="#a6d66c" stroke-width="1.2" />
<polyline clip-path="url(#cp)" points="67.4,1079.7 72.4,1079.9 77.4,1080.2 82.4,1080.2 87.4,1080.2 92.4,1080.2 97.5,1080.2 102.5,1080.4 107.5,1080.5 112.5,1080.7 117.5,1081.4 122.5,1082.4 127.5,1083.5 132.5,1084.5 137.6,1085.5 142.6,1086.3 147.6,1087.7 152.6,1087.9 157.6,1086.8 162.6,1085.8 167.6,1084.4 172.6,1084.6 177.7,1087.1 182.7,1089.2 187.7,1090.5 192.7,1091.2 197.7,1092.5 202.7,1094.5 207.7,1096.9 212.7,1101.6 217.7,1107.6 222.8,1114.1 227.8,1121.2 232.8,1126.7 237.8,1130.1 242.8,1131.7 247.8,1131.9 252.8,1130.4 257.8,1127.2 262.9,1122.7 267.9,1117.6 272.9,1111.5 277.9,1106.0 282.9,1102.0 287.9,1099.1 292.9,1097.3 297.9,1096.3 303.0,1095.2 308.0,1093.4 313.0,1091.5 318.0,1090.0 323.0,1089.1 328.0,1087.9 333.0,1086.6 338.0,1084.9 343.0,1083.4 348.1,1082.0 353.1,1079.9 358.1,1077.1 363.1,1075.0 368.1,1073.6 373.1,1073.0 378.1,1073.0 383.1,1073.8 388.2,1074.0 393.2,1073.8 398.2,1073.6 403.2,1073.3 408.2,1073.4 413.2,1073.9 418.2,1074.5 423.2,1075.2 428.3,1076.0 433.3,1076.3 438.3,1076.4 443.3,1075.8 448.3,1075.3 453.3,1075.1 458.3,1075.1 463.3,1076.3 468.3,1077.8 473.4,1079.3 478.4,1081.0 483.4,1083.0 488.4,1085.8 493.4,1088.6 498.4,1091.0 503.4,1092.5 508.4,1093.3 513.5,1093.7 518.5,1093.4 523.5,1092.6 528.5,1091.4 533.5,1089.7 538.5,1087.3 543.5,1084.8 548.5,1083.0 553.6,1081.7 558.6,1080.9 563.6,1080.3 568.6,1079.8 573.6,1079.8 578.6,1079.7 583.6,1079.5 588.6,1078.9 593.6,1078.5 598.7,1078.3 603.7,1077.7 608.7,1076.8 613.7,1076.8 618.7,1077.3 623.7,1078.4 628.7,1079.6 633.7,1080.5 638.8,1081.1 643.8,1081.8 648.8,1082.4 653.8,1082.9 658.8,1083.2 663.8,1083.1 668.8,1082.8 673.8,1082.3 678.9,1082.3 683.9,1082.7 688.9,1083.3 693.9,1084.2 698.9,1085.2 703.9,1086.0 708.9,1086.5 713.9,1087.5 718.9,1088.5 724.0,1089.9 729.0,1091.1 734.0,1091.9 739.0,1092.1 744.0,1091.9 749.0,1091.9 754.0,1091.5 759.0,1090.8 764.1,1090.1 769.1,1089.8 774.1,1089.5 779.1,1088.9 784.1,1088.2 789.1,1087.1 794.1,1085.6 799.1,1084.0 804.2,1082.7 809.2,1081.8 814.2,1081.0 819.2,1080.0 824.2,1079.4 829.2,1079.2 834.2,1079.0 839.2,1078.6 844.2,1078.0 849.3,1077.7 854.3,1077.9 859.3,1078.6 864.3,1079.8 869.3,1081.0 874.3,1082.3 879.3,1083.7 884.3,1085.4 889.4,1087.6 894.4,1090.2 899.4,1092.5 904.4,1094.3 909.4,1096.9 914.4,1099.4 919.4,1101.4 924.4,1102.8 929.5,1103.8 934.5,1104.1 939.5,1104.1 944.5,1103.4 949.5,1102.3 954.5,1101.4 959.5,1100.5 964.5,1099.6 969.5,1099.6 974.6,1099.7 979.6,1099.8 984.6,1100.0 989.6,1100.2 994.6,1100.1 999.6,1099.6 1004.6,1098.9 1009.6,1098.2 1014.7,1097.6 1019.7,1097.2 1024.7,1096.9 1029.7,1096.3 1034.7,1095.7 1039.7,1094.9 1044.7,1094.2 1049.7,1093.7 1054.8,1093.4 1059.8,1093.2 1064.8,1093.2 1069.8,1093.5 1074.8,1093.8 1079.8,1093.7 1084.8,1093.4 1089.8,1092.9 1094.8,1092.0 1099.9,1091.1 1104.9,1090.0 1109.9,1088.9 1114.9,1087.9 1119.9,1087.2 1124.9,1086.9 1129.9,1086.9 1134.9,1086.9 1140.0,1086.8 1145.0,1087.0 1150.0,1087.5 1155.0,1088.3 1160.0,1088.6 1165.0,1088.7 1170.0,1088.9 1175.0,1088.6 1180.1,1088.4 1185.1,1088.1 1190.1,1088.2 1195.1,1088.3 1200.1,1088.9 1205.1,1089.5 1210.1,1089.9 1215.1,1090.4 1220.1,1091.2 1225.2,1091.5 1230.2,1091.6 1235.2,1091.7 1240.2,1091.4 1245.2,1090.8 1250.2,1090.3 1255.2,1090.2 1260.2,1090.2 1265.3,1090.4 1270.3,1090.6 1275.3,1090.9 1280.3,1090.9 1285.3,1090.5 1290.3,1089.6 1295.3,1088.4 1300.3,1087.3 1305.4,1086.3 1310.4,1085.7 1315.4,1085.5 1320.4,1085.5 1325.4,1085.9 1330.4,1086.2 1335.4,1086.1 1340.4,1085.6 1345.4,1085.0 1350.5,1084.5 1355.5,1084.2 1360.5,1084.2 1365.5,1084.1 1370.5,1083.6 1375.5,1083.2 1380.5,1083.0 1385.5,1082.8 1390.6,1083.2 1395.6,1083.6 1400.6,1084.0 1405.6,1084.4 1410.6,1084.7 1415.6,1084.8 1420.6,1084.7 1425.6,1084.8 1430.7,1085.2 1435.7,1085.6 1440.7,1086.0 1445.7,1086.3 1450.7,1086.5 1455.7,1086.8 1460.7,1087.0 1465.7,1086.9 1470.7,1086.8 1475.8,1086.8 1480.8,1087.0 1485.8,1087.2 1490.8,1087.4 1495.8,1087.6 1500.8,1087.6 1505.8,1087.7 1510.8,1088.1 1515.9,1088.4 1520.9,1088.3 1525.9,1088.2 1530.9,1088.2 1535.9,1088.2 1540.9,1088.3 1545.9,1088.4 1550.9,1088.6 1556.0,1088.9 1561.0,1089.1 1566.0,1089.6 1571.0,1089.8 1576.0,1089.9 1581.0,1089.9 1586.0,1089.7 1591.0,1089.3 1596.0,1088.4 1601.1,1087.5 1606.1,1086.8 1611.1,1085.8 1616.1,1084.6 1621.1,1083.4 1626.1,1082.2 1631.1,1081.2 1636.1,1080.6 1641.2,1080.3 1646.2,1080.4 1651.2,1080.7 1656.2,1080.8 1661.2,1081.3 1666.2,1081.9 1671.2,1082.8 1676.2,1083.7 1681.3,1084.7 1686.3,1085.3 1691.3,1085.6 1696.3,1086.1 1701.3,1086.6 1706.3,1086.9 1711.3,1087.2 1716.3,1087.5 1721.3,1087.7 1726.4,1087.8 1731.4,1087.8 1736.4,1087.8 1741.4,1087.7 1746.4,1087.6 1751.4,1087.6 1756.4,1087.8 1761.4,1088.0 1766.5,1088.2 1771.5,1088.4 1776.5,1088.4 1781.5,1088.5 1786.5,1088.6 1791.5,1088.8 1796.5,1088.9 1801.5,1089.0 1806.6,1089.0 1811.6,1087.8" fill="none" stroke="#ee8c42" stroke-width="1.2" />
<text x="68" y="203.0" font-family="DejaVu Sans, Liberation Sans, sans-serif" font-size="11.3" fill="#b0b0b0" text-anchor="end">42,900.0</text>
<text x="68" y="306.3" font-family="DejaVu Sans, Liberation Sans, sans-serif" font-size="11.3" fill="#b0b0b0" text-anchor="end">42,800.0</text>
<text x="68" y="409.7" font-family="DejaVu Sans, Liberation Sans, sans-serif" font-size="11.3" fill="#b0b0b0" text-anchor="end">42,700.0</text>
<text x="68" y="513.0" font-family="DejaVu Sans, Liberation Sans, sans-serif" font-size="11.3" fill="#b0b0b0" text-anchor="end">42,600.0</text>
<text x="68" y="616.3" font-family="DejaVu Sans, Liberation Sans, sans-serif" font-size="11.3" fill="#b0b0b0" text-anchor="end">42,500.0</text>
<text x="68" y="719.6" font-family="DejaVu Sans, Liberation Sans, sans-serif" font-size="11.3" fill="#b0b0b0" text-anchor="end">42,400.0</text>
<text x="68" y="823.0" font-family="DejaVu Sans, Liberation Sans, sans-serif" font-size="11.3" fill="#b0b0b0" text-anchor="end">42,300.0</text>
<text x="68" y="926.3" font-family="DejaVu Sans, Liberation Sans, sans-serif" font-size="11.3" fill="#b0b0b0" text-anchor="end">42,200.0</text>
<text x="68" y="1042.5" font-family="DejaVu Sans, Liberation Sans, sans-serif" font-size="12.5" fill="#b4b4b4" text-anchor="end">100</text>
<text x="68" y="1067.3" font-family="DejaVu Sans, Liberation Sans, sans-serif" font-size="12.5" fill="#b4b4b4" text-anchor="end">50</text>
<text x="68" y="1092.2" font-family="DejaVu Sans, Liberation Sans, sans-serif" font-size="12.5" fill="#b4b4b4" text-anchor="end">0</text>
<text x="68" y="1117.1" font-family="DejaVu Sans, Liberation Sans, sans-serif" font-size="12.5" fill="#b4b4b4" text-anchor="end">-50</text>
<text x="68" y="1142.1" font-family="DejaVu Sans, Liberation Sans, sans-serif" font-size="12.5" fill="#b4b4b4" text-anchor="end">-100</text>
<text x="72" y="1028" font-family="DejaVu Sans, Liberation Sans, sans-serif" font-size="12.8" fill="#b4b4b4">MACD</text>
<text x="150.5" y="1174" font-family="DejaVu Sans, Liberation Sans, sans-serif" font-size="12.4" fill="#b4b4b4" text-anchor="middle">09:00</text>
<text x="301.0" y="1174" font-family="DejaVu Sans, Liberation Sans, sans-serif" font-size="12.4" fill="#b4b4b4" text-anchor="middle">09:30</text>
<text x="451.0" y="1174" font-family="DejaVu Sans, Liberation Sans, sans-serif" font-size="12.4" fill="#b4b4b4" text-anchor="middle">10:00</text>
<text x="601.5" y="1174" font-family="DejaVu Sans, Liberation Sans, sans-serif" font-size="12.4" fill="#b4b4b4" text-anchor="middle">10:30</text>
<text x="751.5" y="1174" font-family="DejaVu Sans, Liberation Sans, sans-serif" font-size="12.4" fill="#b4b4b4" text-anchor="middle">11:00</text>
<text x="902.0" y="1174" font-family="DejaVu Sans, Liberation Sans, sans-serif" font-size="12.4" fill="#b4b4b4" text-anchor="middle">11:30</text>
<text x="1057.0" y="1174" font-family="DejaVu Sans, Liberation Sans, sans-serif" font-size="12.4" fill="#b4b4b4" text-anchor="middle">13:00</text>
<text x="1207.5" y="1174" font-family="DejaVu Sans, Liberation Sans, sans-serif" font-size="12.4" fill="#b4b4b4" text-anchor="middle">13:30</text>
<text x="1358.0" y="1174" font-family="DejaVu Sans, Liberation Sans, sans-serif" font-size="12.4" fill="#b4b4b4" text-anchor="middle">14:00</text>
<text x="1508.0" y="1174" font-family="DejaVu Sans, Liberation Sans, sans-serif" font-size="12.4" fill="#b4b4b4" text-anchor="middle">14:30</text>
<polygon points="0,466 63,466 69.5,474 63,482 0,482" fill="#f1e5d0"/>
<text x="3" y="478" font-family="DejaVu Sans, Liberation Sans, sans-serif" font-size="11.1" fill="#111">42,633.29</text>
</svg>

<div id="hdr">
<svg class="abs" style="left:14px;top:7px" width="18" height="16" viewBox="0 0 18 16"><g fill="none" stroke="#c8c8c8" stroke-width="2"><ellipse cx="5.500" cy="10.500" rx="3.300" ry="2.600" transform="rotate(-38 5.500 10.500)"/><ellipse cx="12" cy="5.500" rx="3.300" ry="2.600" transform="rotate(-38 12 5.500)"/></g></svg>
<div class="sel" style="left:36px;top:4px;width:112px;"><span class="kk">マーケット</span></div>
<div class="sel" style="left:153px;top:4px;width:252px;">日経225</div>
<div class="sel" style="left:411px;top:4px;width:75px;">1分足</div>
<div class="btn" style="left:492px;top:5px;width:18px;"><svg width="18" height="20" viewBox="0 0 18 20"><path d="M11 5.500l-4 4.500 4 4.500" stroke="#ddd" stroke-width="1.600" fill="none"/></svg></div>
<div class="btn" style="left:512px;top:5px;width:18px;"><svg width="18" height="20" viewBox="0 0 18 20"><path d="M7 5.500l4 4.500-4 4.500" stroke="#ddd" stroke-width="1.600" fill="none"/></svg></div>
<div class="btn on" style="left:536px;top:5px;width:60px;">表示期間</div>
<div class="btn" style="left:603px;top:5px;width:60px;"><span class="kk" style="transform-origin:50% 50%">テクニカル</span></div>
<div class="btn on" style="left:670px;top:5px;width:52px;">通常</div>
<div class="btn" style="left:723.500px;top:5px;width:51.500px;">指数化</div>
<div class="btn" style="left:776.500px;top:5px;width:51.500px;"><span class="kk" style="transform-origin:50% 50%;margin:0 -10px">スプレッド</span></div>
<div class="ib" style="left:835px;"><svg width="20" height="20" viewBox="0 0 20 20"><rect x="4" y="9" width="13" height="1.100" fill="#e4e4e4"/><rect x="10" y="3" width="1.100" height="13" fill="#e4e4e4"/></svg></div><div class="ib" style="left:862px;"><svg width="20" height="20" viewBox="0 0 20 20"><circle cx="10" cy="9.300" r="6" stroke="#e4e4e4" stroke-width="1.500" fill="none"/><path d="M14.300 13.800l2.900 2.900" stroke="#e4e4e4" stroke-width="2.200"/><path d="M10 6v6.600M6.700 9.300h6.600" stroke="#e4e4e4" stroke-width="2"/></svg></div><div class="ib" style="left:885px;"><svg width="20" height="20" viewBox="0 0 20 20"><circle cx="10" cy="9.300" r="6" stroke="#7d7d7d" stroke-width="1.500" fill="none"/><path d="M14.300 13.800l2.900 2.900" stroke="#7d7d7d" stroke-width="2.200"/><path d="M6.700 9.300h6.600" stroke="#7d7d7d" stroke-width="2"/></svg></div><div class="ib" style="left:912px;"><svg width="20" height="20" viewBox="0 0 20 20"><path d="M3.900 15.900l1.300-4.400 8.500-8.700 4 4-8.900 8.300z" fill="#e4e4e4"/><path d="M6.800 13.600l8.700-8.700M8.200 15l8.700-8.700" stroke="#454545" stroke-width="0.700" stroke-dasharray="0.900 0.500"/><path d="M3.900 15.900l0.500-1.700 1.200 1.200z" fill="#454545"/></svg></div><div class="ib" style="left:939px;"><svg width="20" height="20" viewBox="0 0 20 20"><path d="M2.300 8.600l2.300 3.200 3.700-8.600 3.200 7.300M12.600 9l1.600-2.600 2.700 3.600" stroke="#e4e4e4" stroke-width="1.400" fill="none"/><path d="M11 10.300v7l1.700-1.500 1.200 2.500 1.200-0.600-1.200-2.500 2.300-0.200z" fill="#e4e4e4"/></svg></div><div class="ib" style="left:966px;background:#35569a;"><svg width="20" height="20" viewBox="0 0 20 20"><path d="M4.800 4.800l5 5.900 5-5.900M9.800 10.500v6.400M4.800 11.400h10M4.800 13.700h10" stroke="#fff" stroke-width="1.600" fill="none"/></svg></div><div class="ib" style="left:993px;"><svg width="20" height="20" viewBox="0 0 20 20"><circle cx="9.800" cy="9.500" r="6.200" fill="#e4e4e4"/><rect x="8.700" y="8.200" width="2.300" height="5" fill="#454545"/><rect x="8" y="12.400" width="3.700" height="1" fill="#454545"/><rect x="8" y="8.200" width="2" height="1" fill="#454545"/><circle cx="9.800" cy="5.900" r="1.300" fill="#454545"/></svg></div><div class="ib" style="left:1020px;"><svg width="20" height="20" viewBox="0 0 20 20"><text x="1.500" y="7.400" font-family="Liberation Sans,sans-serif" font-weight="bold" font-size="6" textLength="10.800" lengthAdjust="spacingAndGlyphs" fill="#e4e4e4">MY</text><path d="M8.500 9.100v7.700M12.100 10.500v7.200M16.200 8.200v7.300" stroke="#e4e4e4" stroke-width="0.800"/><rect x="7.300" y="10.900" width="2.400" height="4.600" fill="#e4e4e4"/><rect x="10.900" y="12.300" width="2.400" height="4.100" fill="#e4e4e4"/><rect x="15" y="9.500" width="2.400" height="4.600" fill="#e4e4e4"/></svg></div><div class="ib" style="left:1047px;"><svg width="20" height="20" viewBox="0 0 20 20"><path d="M2 13.600v-2.400l1.500-1.200 1.500 1 2-2.500 1.400 1 1.600-3.300 1.500 2.800 1-1 1.100 1.500 1.200-2 1.200 3 1.900-1.300v4.400z" fill="#e4e4e4"/></svg></div><div class="ib" style="left:1074px;"><svg width="20" height="20" viewBox="0 0 20 20"><path d="M4.700 15.200l6.800-6.700" stroke="#e4e4e4" stroke-width="3.200" stroke-linecap="round"/><circle cx="13.300" cy="6.700" r="4.200" fill="#e4e4e4"/><path d="M13.300 6.700l5-5" stroke="#454545" stroke-width="3.200"/></svg></div><div class="ib" style="left:1108px;"><svg width="20" height="20" viewBox="0 0 20 20"><path d="M6 10v-5.800h6.300l2.700 2.700v3.100" fill="none" stroke="#e4e4e4" stroke-width="1.300"/><path d="M12 4.200v3h3" fill="none" stroke="#e4e4e4" stroke-width="1"/><rect x="2.700" y="10" width="14.300" height="6" fill="#e4e4e4"/><rect x="4.300" y="12.500" width="11.100" height="0.900" fill="#454545"/></svg></div><div class="ib" style="left:1135px;"><svg width="20" height="20" viewBox="0 0 20 20"><rect x="3.300" y="4.300" width="13.300" height="12.500" fill="none" stroke="#e4e4e4" stroke-width="1.300"/><path d="M3.300 7.100h13.300" stroke="#e4e4e4" stroke-width="1.200"/><path d="M9.800 9.300l3.300 3.200h-2.100v2.200h-2.400v-2.200h-2.100z" fill="#e4e4e4"/></svg></div>
<div class="t" style="left:13px;top:37px;">表示期間</div>
<div class="sel" style="left:71px;top:32px;width:77px;padding-left:5px;line-height:21px;">本数指定</div>
<div class="t" style="left:154px;top:37px;">本数</div>
<div class="sel" style="left:186px;top:33px;width:42px;height:21px;text-align:right;padding:0 3px 0 0;line-height:19.500px;" id="hon">358</div>
<div class="btn" style="left:229px;top:33px;width:14px;height:20px;background:#555;"><svg width="14" height="20" viewBox="0 0 14 20"><path d="M3.500 7.500h7l-3.500 5z" fill="#ccc"/></svg></div>
<div class="btn" style="left:244px;top:33px;width:14px;height:20px;background:#555;"><svg width="14" height="20" viewBox="0 0 14 20"><path d="M3.500 12.500h7l-3.500-5z" fill="#ccc"/></svg></div>
<div class="t" style="left:264px;top:37px;">表示期間：</div>
<div class="t" style="left:336px;top:37px;word-spacing:0.5px;">2025/08/21 15:15 ～ 2025/08/22 15:30</div>
<div class="btn" style="left:600px;top:33px;width:20px;"><svg width="20" height="20" viewBox="0 0 20 20"><path d="M5 5.500h7a3.200 3.200 0 0 1 0 6.400h-4.500" stroke="#e4e4e4" stroke-width="2" fill="none"/><path d="M8.500 8.500v6.800l-4.500-3.400z" fill="#e4e4e4"/></svg></div>

<div class="t" style="left:13px;top:66px;font-size:14.500px;color:#f3e160;line-height:18px;">日経225</div>
<div class="t cy" style="left:320px;top:67px;">現在値</div>
<div class="t" style="left:389px;top:67px;">42,633.29</div>
<div class="t rd" style="left:519px;top:67px;">+23.12</div>
<div class="t rd" style="left:615px;top:67px;">+0.05%</div>
<div class="t" style="left:681px;top:67px;">25/08/22</div><div class="t" style="left:752px;top:67px;">15:45</div>
<div class="t cy" style="left:13px;top:92px;">始値</div>
<div class="t" style="left:75px;top:92px;">42,629.81 09:00</div>
<div class="t cy" style="left:208px;top:92px;">高値</div>
<div class="t" style="left:270px;top:92px;">42,720.57 09:01</div>
<div class="t cy" style="left:403px;top:92px;">安値</div>
<div class="t" style="left:465px;top:92px;">42,331.39 09:15</div>
<div class="t cy" style="left:598px;top:92px;">前日終値</div>
<div class="t" style="left:686px;top:92px;">42,610.17</div>
<div class="t cy" style="left:767px;top:92px;">出来高</div>
</div>

<div id="pnl">
<div class="abs" style="left:0;top:0;width:1px;height:40px;background:#24403c;"></div>
<div class="abs" style="left:0;top:39.500px;width:979px;height:1.500px;background:#2c3534;"></div>
<div class="ttl">実現損益</div>
<div class="lb" style="left:6.500px;top:51px;">商品種類</div>
<div class="sel" style="left:87px;top:46.500px;width:113px;">全て</div>
<div class="lb" style="left:209px;top:51px;">銘柄</div>
<div class="sel" style="left:253.500px;top:46.500px;width:272px;color:#6e6e6e;padding-left:3px;border-left:2px solid #aaa;"><span style="display:inline-block;transform:scaleX(.845);transform-origin:0 50%;">銘柄コード / ティッカー / 銘柄名</span></div>
<div class="btn" style="left:533.500px;top:48.500px;width:45.500px;height:27px;line-height:26px;font-size:17.500px;background:#4a4a4a;">詳細</div>
<div class="lb" style="left:588.500px;top:51px;">口座区分</div>
<div class="sel" style="left:668px;top:46.500px;width:100px;">全て</div>
<div class="lb" style="left:777px;top:51px;">出力期間</div>
<div class="sel" style="left:856.500px;top:46.500px;width:120.500px;">当日</div>
<div class="abs" style="left:-2px;top:74px;width:388.500px;height:46.500px;box-sizing:border-box;border:3px solid #e8336d;border-radius:6px;background:#1b1b1b;"></div>
<div class="lb" style="left:6.500px;top:85.500px;">実現損益</div>
<svg class="abs" style="left:88px;top:87.500px" width="19" height="19" viewBox="0 0 19 19"><circle cx="9.500" cy="9.500" r="9" fill="#e08a1e"/><rect x="8.300" y="3.800" width="2.400" height="7.600" rx="1" fill="#fff"/><circle cx="9.500" cy="14.200" r="1.400" fill="#fff"/></svg>
<div class="lb" style="left:136px;top:85.500px;color:#e04a4a;">+19,220円</div>
<div class="lb" style="left:259px;top:85.500px;">2025/08/22</div>
</div>
<div class="tb" style="left:470px;top:684px;width:583.500px;height:292px;"><div class="row" style="top:0px"><div class="lab"><div class="nm">日経平均株価</div><svg class="abs" style="left:105px;top:1px" width="20" height="20" viewBox="0 0 20 20"><circle cx="10" cy="10" r="9.6" fill="#49a5ea"/><path d="M5.300 5l9.400 10M14.300 5l-8.800 10" stroke="#fff" stroke-width="1.500" fill="none"/><path d="M6.800 5l9.400 10" stroke="#fff" stroke-width="0.900" fill="none"/></svg><div class="bt" style="left:51px;width:74px;"><i></i><span>寄与度</span></div><svg class="abs" style="left:127.300px;top:0" width="26" height="26" viewBox="0 0 26 26"><circle cx="13" cy="13" r="12.7" fill="#8d8d8b"/><circle cx="13" cy="12.5" r="6.6" fill="#9b5443"/></svg><div class="dd">08/22</div></div><div class="abs" style="left:154.500px;top:-1px;width:81.500px;height:43px;background:#3c3c3b;"></div><svg class="mc" width="80" height="40" viewBox="0 0 80 40"><rect x="0.300" y="0.300" width="79.400" height="39.400" rx="2.200" fill="#e3e3e3"/><rect x="27.5" y="1" width="0.600" height="37" fill="#d6d6d6"/><rect x="63.5" y="1" width="0.600" height="37" fill="#d6d6d6"/><rect x="1" y="8" width="78" height="0.500" fill="#dadada"/><rect x="1" y="16" width="78" height="0.500" fill="#dadada"/><rect x="1" y="24" width="78" height="0.500" fill="#dadada"/><rect x="1" y="32" width="78" height="0.500" fill="#dadada"/><defs><clipPath id="m1u"><rect x="0" y="0" width="80" height="15.4"/></clipPath><clipPath id="m1d"><rect x="0" y="15.4" width="80" height="24.6"/></clipPath></defs><g clip-path="url(#m1u)"><polygon points="0.0,15.4 0.0,15.4 0.8,15.4 1.6,24.0 2.5,19.0 3.5,20.0 4.5,17.0 5.2,17.0 6.0,16.5 7.0,16.3 8.0,15.6 9.0,15.7 10.0,15.6 11.0,15.5 12.0,16.0 13.0,15.6 14.0,15.0 15.0,14.3 16.0,13.6 17.0,14.3 18.0,14.6 19.0,14.2 20.0,14.3 21.0,13.8 22.0,13.8 23.0,14.5 24.0,14.5 25.0,13.8 26.0,12.6 27.0,12.4 28.0,12.4 28.8,13.7 29.5,15.0 30.0,15.6 31.0,15.8 31.9,15.4 32.9,15.7 33.8,15.9 34.8,15.5 35.8,16.0 36.7,15.9 37.7,16.0 38.6,15.6 39.6,15.4 40.5,16.1 41.5,15.8 42.8,16.7 44.0,17.0 45.0,17.1 46.0,16.9 47.0,17.2 48.0,17.6 49.0,17.8 50.0,17.6 51.0,18.2 52.0,17.9 53.0,18.0 54.0,17.7 55.0,18.1 56.0,18.0 57.0,17.7 58.0,18.0 59.0,17.8 60.0,17.2 61.0,17.1 62.0,17.1 63.0,17.1 64.0,16.8 65.0,17.1 66.0,17.3 67.0,16.5 68.0,17.0 69.0,16.8 70.0,16.9 71.0,16.5 72.0,16.6 73.0,16.6 74.0,16.1 75.0,16.7 76.0,16.3 77.0,16.4 78.0,16.1 79.0,16.6 80.0,16.5 80.0,15.4" fill="#bfe2b9"/><polyline points="0.0,15.4 0.8,15.4 1.6,24.0 2.5,19.0 3.5,20.0 4.5,17.0 5.2,17.0 6.0,16.5 7.0,16.3 8.0,15.6 9.0,15.7 10.0,15.6 11.0,15.5 12.0,16.0 13.0,15.6 14.0,15.0 15.0,14.3 16.0,13.6 17.0,14.3 18.0,14.6 19.0,14.2 20.0,14.3 21.0,13.8 22.0,13.8 23.0,14.5 24.0,14.5 25.0,13.8 26.0,12.6 27.0,12.4 28.0,12.4 28.8,13.7 29.5,15.0 30.0,15.6 31.0,15.8 31.9,15.4 32.9,15.7 33.8,15.9 34.8,15.5 35.8,16.0 36.7,15.9 37.7,16.0 38.6,15.6 39.6,15.4 40.5,16.1 41.5,15.8 42.8,16.7 44.0,17.0 45.0,17.1 46.0,16.9 47.0,17.2 48.0,17.6 49.0,17.8 50.0,17.6 51.0,18.2 52.0,17.9 53.0,18.0 54.0,17.7 55.0,18.1 56.0,18.0 57.0,17.7 58.0,18.0 59.0,17.8 60.0,17.2 61.0,17.1 62.0,17.1 63.0,17.1 64.0,16.8 65.0,17.1 66.0,17.3 67.0,16.5 68.0,17.0 69.0,16.8 70.0,16.9 71.0,16.5 72.0,16.6 73.0,16.6 74.0,16.1 75.0,16.7 76.0,16.3 77.0,16.4 78.0,16.1 79.0,16.6 80.0,16.5" fill="none" stroke="#4f9a4a" stroke-width="0.800"/></g><g clip-path="url(#m1d)"><polygon points="0.0,15.4 0.0,15.4 0.8,15.4 1.6,24.0 2.5,19.0 3.5,20.0 4.5,17.0 5.2,17.0 6.0,16.5 7.0,16.3 8.0,15.6 9.0,15.7 10.0,15.6 11.0,15.5 12.0,16.0 13.0,15.6 14.0,15.0 15.0,14.3 16.0,13.6 17.0,14.3 18.0,14.6 19.0,14.2 20.0,14.3 21.0,13.8 22.0,13.8 23.0,14.5 24.0,14.5 25.0,13.8 26.0,12.6 27.0,12.4 28.0,12.4 28.8,13.7 29.5,15.0 30.0,15.6 31.0,15.8 31.9,15.4 32.9,15.7 33.8,15.9 34.8,15.5 35.8,16.0 36.7,15.9 37.7,16.0 38.6,15.6 39.6,15.4 40.5,16.1 41.5,15.8 42.8,16.7 44.0,17.0 45.0,17.1 46.0,16.9 47.0,17.2 48.0,17.6 49.0,17.8 50.0,17.6 51.0,18.2 52.0,17.9 53.0,18.0 54.0,17.7 55.0,18.1 56.0,18.0 57.0,17.7 58.0,18.0 59.0,17.8 60.0,17.2 61.0,17.1 62.0,17.1 63.0,17.1 64.0,16.8 65.0,17.1 66.0,17.3 67.0,16.5 68.0,17.0 69.0,16.8 70.0,16.9 71.0,16.5 72.0,16.6 73.0,16.6 74.0,16.1 75.0,16.7 76.0,16.3 77.0,16.4 78.0,16.1 79.0,16.6 80.0,16.5 80.0,15.4" fill="#f1c0c0"/><polyline points="0.0,15.4 0.8,15.4 1.6,24.0 2.5,19.0 3.5,20.0 4.5,17.0 5.2,17.0 6.0,16.5 7.0,16.3 8.0,15.6 9.0,15.7 10.0,15.6 11.0,15.5 12.0,16.0 13.0,15.6 14.0,15.0 15.0,14.3 16.0,13.6 17.0,14.3 18.0,14.6 19.0,14.2 20.0,14.3 21.0,13.8 22.0,13.8 23.0,14.5 24.0,14.5 25.0,13.8 26.0,12.6 27.0,12.4 28.0,12.4 28.8,13.7 29.5,15.0 30.0,15.6 31.0,15.8 31.9,15.4 32.9,15.7 33.8,15.9 34.8,15.5 35.8,16.0 36.7,15.9 37.7,16.0 38.6,15.6 39.6,15.4 40.5,16.1 41.5,15.8 42.8,16.7 44.0,17.0 45.0,17.1 46.0,16.9 47.0,17.2 48.0,17.6 49.0,17.8 50.0,17.6 51.0,18.2 52.0,17.9 53.0,18.0 54.0,17.7 55.0,18.1 56.0,18.0 57.0,17.7 58.0,18.0 59.0,17.8 60.0,17.2 61.0,17.1 62.0,17.1 63.0,17.1 64.0,16.8 65.0,17.1 66.0,17.3 67.0,16.5 68.0,17.0 69.0,16.8 70.0,16.9 71.0,16.5 72.0,16.6 73.0,16.6 74.0,16.1 75.0,16.7 76.0,16.3 77.0,16.4 78.0,16.1 79.0,16.6 80.0,16.5" fill="none" stroke="#e06464" stroke-width="0.800"/></g><rect x="30.0" y="1" width="11.5" height="36" fill="#e3e3e3" opacity="0.620"/><rect x="0.5" y="14.8" width="79.0" height="1.200" fill="#8794e4"/><rect x="2.0" y="36.800" width="3.500" height="1.200" fill="#bdbdbd" opacity="0.800"/><rect x="27.0" y="36.800" width="3.500" height="1.200" fill="#bdbdbd" opacity="0.800"/><rect x="62.0" y="36.800" width="3.500" height="1.200" fill="#bdbdbd" opacity="0.800"/></svg><div class="wh" style=""><div class="v"><u>42,633</u><small>.29</small></div><div class="c g">+23<small>.12</small></div><div class="pb g"><b>▲</b>0.05<small>%</small></div><div class="hl">H:42,720<small>.57</small><br>L:42,331<small>.39</small></div></div></div><div class="row" style="top:42px"><div class="lab"><div class="nm"><span class="la">TOPIX</span></div><div class="bt" style="left:86px;width:39px;"><svg class="abs" style="left:6px;top:2.500px" width="9" height="9" viewBox="0 0 9 9"><rect width="9" height="9" fill="#f2f2f2"/><path d="M2.500 2.500h3.500v3.500M6 2.500l-3.800 3.800" stroke="#444" stroke-width="1.200" fill="none"/></svg><span style="left:19px;font-size:11.500px;letter-spacing:0.500px">Y!</span></div><svg class="abs" style="left:127.300px;top:0" width="26" height="26" viewBox="0 0 26 26"><circle cx="13" cy="13" r="12.7" fill="#8d8d8b"/><circle cx="13" cy="12.5" r="6.6" fill="#9b5443"/></svg><div class="dd">08/22</div></div><div class="abs" style="left:154.500px;top:-1px;width:81.500px;height:43px;background:#3c3c3b;"></div><svg class="mc" width="80" height="40" viewBox="0 0 80 40"><rect x="0.300" y="0.300" width="79.400" height="39.400" rx="2.200" fill="#e3e3e3"/><rect x="27.5" y="1" width="0.600" height="37" fill="#d6d6d6"/><rect x="63.5" y="1" width="0.600" height="37" fill="#d6d6d6"/><rect x="1" y="8" width="78" height="0.500" fill="#dadada"/><rect x="1" y="16" width="78" height="0.500" fill="#dadada"/><rect x="1" y="24" width="78" height="0.500" fill="#dadada"/><rect x="1" y="32" width="78" height="0.500" fill="#dadada"/><defs><clipPath id="m2u"><rect x="0" y="0" width="80" height="22.8"/></clipPath><clipPath id="m2d"><rect x="0" y="22.8" width="80" height="17.2"/></clipPath></defs><g clip-path="url(#m2u)"><polygon points="0.0,22.8 0.0,16.4 0.8,17.5 1.5,19.0 2.2,20.3 3.0,20.7 4.0,20.5 5.0,19.5 6.0,19.1 7.0,18.0 8.0,17.7 9.0,17.3 10.0,16.4 11.0,15.5 12.0,15.6 13.0,15.0 14.0,14.4 15.0,14.3 16.0,14.3 17.0,13.9 18.0,13.8 19.0,14.3 20.0,14.6 21.0,14.1 22.0,13.5 23.0,13.7 24.0,14.1 25.0,13.9 26.0,13.7 27.0,12.6 27.8,12.6 28.5,12.8 29.5,14.0 30.0,15.5 31.0,15.9 31.9,16.2 32.9,15.9 33.8,15.8 34.8,16.3 35.8,16.7 36.7,16.6 37.7,16.5 38.6,17.1 39.6,16.9 40.5,17.6 41.5,17.4 42.8,16.9 44.0,17.0 45.0,17.0 46.0,16.7 47.0,17.1 48.0,16.6 49.0,16.2 50.0,16.8 51.0,16.3 52.0,16.3 53.0,16.1 54.0,15.8 55.0,15.9 56.0,15.8 57.0,16.1 58.0,16.0 59.0,15.9 60.0,15.4 61.0,15.4 62.0,15.0 63.0,15.1 64.0,15.0 65.0,15.1 66.0,14.7 67.0,15.3 68.0,14.8 69.0,14.2 70.0,14.2 71.0,13.9 72.0,14.0 73.0,14.0 74.0,14.6 75.0,14.1 76.0,14.2 77.0,14.3 78.0,14.0 79.0,14.4 80.0,13.8 80.0,22.8" fill="#bfe2b9"/><polyline points="0.0,16.4 0.8,17.5 1.5,19.0 2.2,20.3 3.0,20.7 4.0,20.5 5.0,19.5 6.0,19.1 7.0,18.0 8.0,17.7 9.0,17.3 10.0,16.4 11.0,15.5 12.0,15.6 13.0,15.0 14.0,14.4 15.0,14.3 16.0,14.3 17.0,13.9 18.0,13.8 19.0,14.3 20.0,14.6 21.0,14.1 22.0,13.5 23.0,13.7 24.0,14.1 25.0,13.9 26.0,13.7 27.0,12.6 27.8,12.6 28.5,12.8 29.5,14.0 30.0,15.5 31.0,15.9 31.9,16.2 32.9,15.9 33.8,15.8 34.8,16.3 35.8,16.7 36.7,16.6 37.7,16.5 38.6,17.1 39.6,16.9 40.5,17.6 41.5,17.4 42.8,16.9 44.0,17.0 45.0,17.0 46.0,16.7 47.0,17.1 48.0,16.6 49.0,16.2 50.0,16.8 51.0,16.3 52.0,16.3 53.0,16.1 54.0,15.8 55.0,15.9 56.0,15.8 57.0,16.1 58.0,16.0 59.0,15.9 60.0,15.4 61.0,15.4 62.0,15.0 63.0,15.1 64.0,15.0 65.0,15.1 66.0,14.7 67.0,15.3 68.0,14.8 69.0,14.2 70.0,14.2 71.0,13.9 72.0,14.0 73.0,14.0 74.0,14.6 75.0,14.1 76.0,14.2 77.0,14.3 78.0,14.0 79.0,14.4 80.0,13.8" fill="none" stroke="#4f9a4a" stroke-width="0.800"/></g><g clip-path="url(#m2d)"><polygon points="0.0,22.8 0.0,16.4 0.8,17.5 1.5,19.0 2.2,20.3 3.0,20.7 4.0,20.5 5.0,19.5 6.0,19.1 7.0,18.0 8.0,17.7 9.0,17.3 10.0,16.4 11.0,15.5 12.0,15.6 13.0,15.0 14.0,14.4 15.0,14.3 16.0,14.3 17.0,13.9 18.0,13.8 19.0,14.3 20.0,14.6 21.0,14.1 22.0,13.5 23.0,13.7 24.0,14.1 25.0,13.9 26.0,13.7 27.0,12.6 27.8,12.6 28.5,12.8 29.5,14.0 30.0,15.5 31.0,15.9 31.9,16.2 32.9,15.9 33.8,15.8 34.8,16.3 35.8,16.7 36.7,16.6 37.7,16.5 38.6,17.1 39.6,16.9 40.5,17.6 41.5,17.4 42.8,16.9 44.0,17.0 45.0,17.0 46.0,16.7 47.0,17.1 48.0,16.6 49.0,16.2 50.0,16.8 51.0,16.3 52.0,16.3 53.0,16.1 54.0,15.8 55.0,15.9 56.0,15.8 57.0,16.1 58.0,16.0 59.0,15.9 60.0,15.4 61.0,15.4 62.0,15.0 63.0,15.1 64.0,15.0 65.0,15.1 66.0,14.7 67.0,15.3 68.0,14.8 69.0,14.2 70.0,14.2 71.0,13.9 72.0,14.0 73.0,14.0 74.0,14.6 75.0,14.1 76.0,14.2 77.0,14.3 78.0,14.0 79.0,14.4 80.0,13.8 80.0,22.8" fill="#f1c0c0"/><polyline points="0.0,16.4 0.8,17.5 1.5,19.0 2.2,20.3 3.0,20.7 4.0,20.5 5.0,19.5 6.0,19.1 7.0,18.0 8.0,17.7 9.0,17.3 10.0,16.4 11.0,15.5 12.0,15.6 13.0,15.0 14.0,14.4 15.0,14.3 16.0,14.3 17.0,13.9 18.0,13.8 19.0,14.3 20.0,14.6 21.0,14.1 22.0,13.5 23.0,13.7 24.0,14.1 25.0,13.9 26.0,13.7 27.0,12.6 27.8,12.6 28.5,12.8 29.5,14.0 30.0,15.5 31.0,15.9 31.9,16.2 32.9,15.9 33.8,15.8 34.8,16.3 35.8,16.7 36.7,16.6 37.7,16.5 38.6,17.1 39.6,16.9 40.5,17.6 41.5,17.4 42.8,16.9 44.0,17.0 45.0,17.0 46.0,16.7 47.0,17.1 48.0,16.6 49.0,16.2 50.0,16.8 51.0,16.3 52.0,16.3 53.0,16.1 54.0,15.8 55.0,15.9 56.0,15.8 57.0,16.1 58.0,16.0 59.0,15.9 60.0,15.4 61.0,15.4 62.0,15.0 63.0,15.1 64.0,15.0 65.0,15.1 66.0,14.7 67.0,15.3 68.0,14.8 69.0,14.2 70.0,14.2 71.0,13.9 72.0,14.0 73.0,14.0 74.0,14.6 75.0,14.1 76.0,14.2 77.0,14.3 78.0,14.0 79.0,14.4 80.0,13.8" fill="none" stroke="#e06464" stroke-width="0.800"/></g><rect x="30.0" y="1" width="11.5" height="36" fill="#e3e3e3" opacity="0.620"/><rect x="0.5" y="22.2" width="79.0" height="1.200" fill="#8794e4"/><rect x="2.0" y="36.800" width="3.500" height="1.200" fill="#bdbdbd" opacity="0.800"/><rect x="27.0" y="36.800" width="3.500" height="1.200" fill="#bdbdbd" opacity="0.800"/><rect x="62.0" y="36.800" width="3.500" height="1.200" fill="#bdbdbd" opacity="0.800"/></svg><div class="wh" style=""><div class="v"><u>3,100</u><small>.87</small></div><div class="c g">+17<small>.92</small></div><div class="pb g"><b>▲</b>0.58<small>%</small></div><div class="hl">H:3,103<small>.10</small><br>L:3,078<small>.20</small></div></div></div><div class="row" style="top:84px"><div class="lab"><div class="nm"><span class="la">JPX</span>日経<span class="la">400</span></div><svg class="abs" style="left:127.300px;top:0" width="26" height="26" viewBox="0 0 26 26"><circle cx="13" cy="13" r="12.7" fill="#8d8d8b"/><circle cx="13" cy="12.5" r="6.6" fill="#9b5443"/></svg><div class="dd">08/22</div></div><div class="abs" style="left:154.500px;top:-1px;width:81.500px;height:43px;background:#3c3c3b;"></div><svg class="mc" width="80" height="40" viewBox="0 0 80 40"><rect x="0.300" y="0.300" width="79.400" height="39.400" rx="2.200" fill="#e3e3e3"/><rect x="27.5" y="1" width="0.600" height="37" fill="#d6d6d6"/><rect x="63.5" y="1" width="0.600" height="37" fill="#d6d6d6"/><rect x="1" y="8" width="78" height="0.500" fill="#dadada"/><rect x="1" y="16" width="78" height="0.500" fill="#dadada"/><rect x="1" y="24" width="78" height="0.500" fill="#dadada"/><rect x="1" y="32" width="78" height="0.500" fill="#dadada"/><defs><clipPath id="m3u"><rect x="0" y="0" width="80" height="20.7"/></clipPath><clipPath id="m3d"><rect x="0" y="20.7" width="80" height="19.3"/></clipPath></defs><g clip-path="url(#m3u)"><polygon points="0.0,20.7 0.0,12.8 0.8,14.3 1.5,15.0 2.5,21.8 3.5,19.8 4.5,20.3 5.2,19.0 6.0,18.0 7.0,16.8 8.0,15.7 9.0,14.9 10.0,15.2 11.0,14.3 12.0,13.5 13.0,13.4 14.0,13.3 15.0,12.8 16.0,12.3 17.0,11.6 18.0,12.1 19.0,12.2 20.0,11.6 21.0,11.2 22.0,11.7 23.0,12.4 24.0,11.5 25.0,10.8 26.0,9.7 27.0,9.4 27.8,9.4 28.5,9.8 29.5,12.0 30.0,13.5 31.0,13.5 31.9,14.2 32.9,14.1 33.8,14.0 34.8,14.2 35.8,14.7 36.7,15.5 37.7,14.9 38.6,15.5 39.6,16.0 40.5,15.6 41.5,16.2 42.8,16.3 44.0,15.8 45.0,16.0 46.0,15.9 47.0,15.2 48.0,15.4 49.0,16.1 50.0,16.0 51.0,15.5 52.0,15.8 53.0,15.5 54.0,15.0 55.0,14.9 56.0,14.9 57.0,14.8 58.0,14.4 59.0,14.6 60.0,14.0 61.0,14.5 62.0,14.0 63.0,14.0 64.0,13.7 65.0,13.4 66.0,13.6 67.0,13.8 68.0,13.8 69.0,13.6 70.0,13.2 71.0,13.1 72.0,12.9 73.0,12.4 74.0,12.6 75.0,13.0 76.0,12.6 77.0,13.1 78.0,12.6 79.0,12.7 80.0,12.3 80.0,20.7" fill="#bfe2b9"/><polyline points="0.0,12.8 0.8,14.3 1.5,15.0 2.5,21.8 3.5,19.8 4.5,20.3 5.2,19.0 6.0,18.0 7.0,16.8 8.0,15.7 9.0,14.9 10.0,15.2 11.0,14.3 12.0,13.5 13.0,13.4 14.0,13.3 15.0,12.8 16.0,12.3 17.0,11.6 18.0,12.1 19.0,12.2 20.0,11.6 21.0,11.2 22.0,11.7 23.0,12.4 24.0,11.5 25.0,10.8 26.0,9.7 27.0,9.4 27.8,9.4 28.5,9.8 29.5,12.0 30.0,13.5 31.0,13.5 31.9,14.2 32.9,14.1 33.8,14.0 34.8,14.2 35.8,14.7 36.7,15.5 37.7,14.9 38.6,15.5 39.6,16.0 40.5,15.6 41.5,16.2 42.8,16.3 44.0,15.8 45.0,16.0 46.0,15.9 47.0,15.2 48.0,15.4 49.0,16.1 50.0,16.0 51.0,15.5 52.0,15.8 53.0,15.5 54.0,15.0 55.0,14.9 56.0,14.9 57.0,14.8 58.0,14.4 59.0,14.6 60.0,14.0 61.0,14.5 62.0,14.0 63.0,14.0 64.0,13.7 65.0,13.4 66.0,13.6 67.0,13.8 68.0,13.8 69.0,13.6 70.0,13.2 71.0,13.1 72.0,12.9 73.0,12.4 74.0,12.6 75.0,13.0 76.0,12.6 77.0,13.1 78.0,12.6 79.0,12.7 80.0,12.3" fill="none" stroke="#4f9a4a" stroke-width="0.800"/></g><g clip-path="url(#m3d)"><polygon points="0.0,20.7 0.0,12.8 0.8,14.3 1.5,15.0 2.5,21.8 3.5,19.8 4.5,20.3 5.2,19.0 6.0,18.0 7.0,16.8 8.0,15.7 9.0,14.9 10.0,15.2 11.0,14.3 12.0,13.5 13.0,13.4 14.0,13.3 15.0,12.8 16.0,12.3 17.0,11.6 18.0,12.1 19.0,12.2 20.0,11.6 21.0,11.2 22.0,11.7 23.0,12.4 24.0,11.5 25.0,10.8 26.0,9.7 27.0,9.4 27.8,9.4 28.5,9.8 29.5,12.0 30.0,13.5 31.0,13.5 31.9,14.2 32.9,14.1 33.8,14.0 34.8,14.2 35.8,14.7 36.7,15.5 37.7,14.9 38.6,15.5 39.6,16.0 40.5,15.6 41.5,16.2 42.8,16.3 44.0,15.8 45.0,16.0 46.0,15.9 47.0,15.2 48.0,15.4 49.0,16.1 50.0,16.0 51.0,15.5 52.0,15.8 53.0,15.5 54.0,15.0 55.0,14.9 56.0,14.9 57.0,14.8 58.0,14.4 59.0,14.6 60.0,14.0 61.0,14.5 62.0,14.0 63.0,14.0 64.0,13.7 65.0,13.4 66.0,13.6 67.0,13.8 68.0,13.8 69.0,13.6 70.0,13.2 71.0,13.1 72.0,12.9 73.0,12.4 74.0,12.6 75.0,13.0 76.0,12.6 77.0,13.1 78.0,12.6 79.0,12.7 80.0,12.3 80.0,20.7" fill="#f1c0c0"/><polyline points="0.0,12.8 0.8,14.3 1.5,15.0 2.5,21.8 3.5,19.8 4.5,20.3 5.2,19.0 6.0,18.0 7.0,16.8 8.0,15.7 9.0,14.9 10.0,15.2 11.0,14.3 12.0,13.5 13.0,13.4 14.0,13.3 15.0,12.8 16.0,12.3 17.0,11.6 18.0,12.1 19.0,12.2 20.0,11.6 21.0,11.2 22.0,11.7 23.0,12.4 24.0,11.5 25.0,10.8 26.0,9.7 27.0,9.4 27.8,9.4 28.5,9.8 29.5,12.0 30.0,13.5 31.0,13.5 31.9,14.2 32.9,14.1 33.8,14.0 34.8,14.2 35.8,14.7 36.7,15.5 37.7,14.9 38.6,15.5 39.6,16.0 40.5,15.6 41.5,16.2 42.8,16.3 44.0,15.8 45.0,16.0 46.0,15.9 47.0,15.2 48.0,15.4 49.0,16.1 50.0,16.0 51.0,15.5 52.0,15.8 53.0,15.5 54.0,15.0 55.0,14.9 56.0,14.9 57.0,14.8 58.0,14.4 59.0,14.6 60.0,14.0 61.0,14.5 62.0,14.0 63.0,14.0 64.0,13.7 65.0,13.4 66.0,13.6 67.0,13.8 68.0,13.8 69.0,13.6 70.0,13.2 71.0,13.1 72.0,12.9 73.0,12.4 74.0,12.6 75.0,13.0 76.0,12.6 77.0,13.1 78.0,12.6 79.0,12.7 80.0,12.3" fill="none" stroke="#e06464" stroke-width="0.800"/></g><rect x="30.0" y="1" width="11.5" height="36" fill="#e3e3e3" opacity="0.620"/><rect x="0.5" y="20.1" width="79.0" height="1.200" fill="#8794e4"/><rect x="2.0" y="36.800" width="3.500" height="1.200" fill="#bdbdbd" opacity="0.800"/><rect x="27.0" y="36.800" width="3.500" height="1.200" fill="#bdbdbd" opacity="0.800"/><rect x="62.0" y="36.800" width="3.500" height="1.200" fill="#bdbdbd" opacity="0.800"/></svg><div class="wh" style=""><div class="v"><u>27,859</u><small>.90</small></div><div class="c g">+120<small>.18</small></div><div class="pb g"><b>▲</b>0.43<small>%</small></div><div class="hl">H:27,893<small>.18</small><br>L:27,670<small>.78</small></div></div></div><div class="row" style="top:126px"><div class="lab"><div class="nm">グロース<span class="la">250</span></div><div class="bt" style="left:86px;width:39px;"><svg class="abs" style="left:6px;top:2.500px" width="9" height="9" viewBox="0 0 9 9"><rect width="9" height="9" fill="#f2f2f2"/><path d="M2.500 2.500h3.500v3.500M6 2.500l-3.800 3.800" stroke="#444" stroke-width="1.200" fill="none"/></svg><span style="left:19px;font-size:11.500px;letter-spacing:0.500px">Y!</span></div><svg class="abs" style="left:127.300px;top:0" width="26" height="26" viewBox="0 0 26 26"><circle cx="13" cy="13" r="12.7" fill="#8d8d8b"/><circle cx="13" cy="12.5" r="6.6" fill="#9b5443"/></svg><div class="dd">08/22</div></div><div class="abs" style="left:154.500px;top:-1px;width:81.500px;height:43px;background:#3c3c3b;"></div><svg class="mc" width="80" height="40" viewBox="0 0 80 40"><rect x="0.300" y="0.300" width="79.400" height="39.400" rx="2.200" fill="#e3e3e3"/><rect x="27.5" y="1" width="0.600" height="37" fill="#d6d6d6"/><rect x="63.5" y="1" width="0.600" height="37" fill="#d6d6d6"/><rect x="1" y="8" width="78" height="0.500" fill="#dadada"/><rect x="1" y="16" width="78" height="0.500" fill="#dadada"/><rect x="1" y="24" width="78" height="0.500" fill="#dadada"/><rect x="1" y="32" width="78" height="0.500" fill="#dadada"/><defs><clipPath id="m4u"><rect x="0" y="0" width="80" height="26.7"/></clipPath><clipPath id="m4d"><rect x="0" y="26.7" width="80" height="13.3"/></clipPath></defs><g clip-path="url(#m4u)"><polygon points="0.0,26.7 0.0,22.0 0.8,20.9 1.5,19.0 2.2,17.3 3.0,16.4 4.0,18.0 4.8,16.5 5.5,14.5 6.2,15.0 7.0,15.5 8.0,13.5 9.0,17.0 10.0,19.3 11.0,19.3 12.0,18.5 13.0,19.7 14.0,21.0 15.0,21.4 16.0,21.0 17.0,19.8 18.0,20.0 19.0,20.8 20.0,20.6 21.0,19.5 22.0,20.5 23.0,21.6 24.0,20.5 25.0,20.0 26.0,18.6 27.0,17.4 28.0,16.4 29.0,18.5 30.0,19.5 31.0,19.6 31.9,19.1 32.9,19.4 33.8,19.1 34.8,19.1 35.8,19.2 36.7,19.3 37.7,19.3 38.6,19.8 39.6,19.4 40.5,19.8 41.5,19.5 42.5,17.6 43.2,18.3 44.0,18.2 45.0,19.3 46.0,19.6 47.0,19.7 48.0,19.0 49.0,19.8 50.0,20.4 51.0,20.2 52.0,19.6 53.0,20.1 54.0,20.0 55.0,20.2 56.0,20.5 57.0,21.4 58.0,22.0 59.0,22.4 60.0,22.8 61.0,22.9 62.0,23.6 63.0,23.0 64.0,23.2 65.0,23.2 66.0,23.8 66.8,24.2 67.5,24.2 68.5,26.0 69.5,27.5 70.8,28.8 72.0,29.5 73.0,30.3 74.0,30.7 75.0,31.4 76.0,31.6 77.0,32.6 78.0,33.0 79.0,34.3 80.0,35.0 80.0,26.7" fill="#bfe2b9"/><polyline points="0.0,22.0 0.8,20.9 1.5,19.0 2.2,17.3 3.0,16.4 4.0,18.0 4.8,16.5 5.5,14.5 6.2,15.0 7.0,15.5 8.0,13.5 9.0,17.0 10.0,19.3 11.0,19.3 12.0,18.5 13.0,19.7 14.0,21.0 15.0,21.4 16.0,21.0 17.0,19.8 18.0,20.0 19.0,20.8 20.0,20.6 21.0,19.5 22.0,20.5 23.0,21.6 24.0,20.5 25.0,20.0 26.0,18.6 27.0,17.4 28.0,16.4 29.0,18.5 30.0,19.5 31.0,19.6 31.9,19.1 32.9,19.4 33.8,19.1 34.8,19.1 35.8,19.2 36.7,19.3 37.7,19.3 38.6,19.8 39.6,19.4 40.5,19.8 41.5,19.5 42.5,17.6 43.2,18.3 44.0,18.2 45.0,19.3 46.0,19.6 47.0,19.7 48.0,19.0 49.0,19.8 50.0,20.4 51.0,20.2 52.0,19.6 53.0,20.1 54.0,20.0 55.0,20.2 56.0,20.5 57.0,21.4 58.0,22.0 59.0,22.4 60.0,22.8 61.0,22.9 62.0,23.6 63.0,23.0 64.0,23.2 65.0,23.2 66.0,23.8 66.8,24.2 67.5,24.2 68.5,26.0 69.5,27.5 70.8,28.8 72.0,29.5 73.0,30.3 74.0,30.7 75.0,31.4 76.0,31.6 77.0,32.6 78.0,33.0 79.0,34.3 80.0,35.0" fill="none" stroke="#4f9a4a" stroke-width="0.800"/></g><g clip-path="url(#m4d)"><polygon points="0.0,26.7 0.0,22.0 0.8,20.9 1.5,19.0 2.2,17.3 3.0,16.4 4.0,18.0 4.8,16.5 5.5,14.5 6.2,15.0 7.0,15.5 8.0,13.5 9.0,17.0 10.0,19.3 11.0,19.3 12.0,18.5 13.0,19.7 14.0,21.0 15.0,21.4 16.0,21.0 17.0,19.8 18.0,20.0 19.0,20.8 20.0,20.6 21.0,19.5 22.0,20.5 23.0,21.6 24.0,20.5 25.0,20.0 26.0,18.6 27.0,17.4 28.0,16.4 29.0,18.5 30.0,19.5 31.0,19.6 31.9,19.1 32.9,19.4 33.8,19.1 34.8,19.1 35.8,19.2 36.7,19.3 37.7,19.3 38.6,19.8 39.6,19.4 40.5,19.8 41.5,19.5 42.5,17.6 43.2,18.3 44.0,18.2 45.0,19.3 46.0,19.6 47.0,19.7 48.0,19.0 49.0,19.8 50.0,20.4 51.0,20.2 52.0,19.6 53.0,20.1 54.0,20.0 55.0,20.2 56.0,20.5 57.0,21.4 58.0,22.0 59.0,22.4 60.0,22.8 61.0,22.9 62.0,23.6 63.0,23.0 64.0,23.2 65.0,23.2 66.0,23.8 66.8,24.2 67.5,24.2 68.5,26.0 69.5,27.5 70.8,28.8 72.0,29.5 73.0,30.3 74.0,30.7 75.0,31.4 76.0,31.6 77.0,32.6 78.0,33.0 79.0,34.3 80.0,35.0 80.0,26.7" fill="#f1c0c0"/><polyline points="0.0,22.0 0.8,20.9 1.5,19.0 2.2,17.3 3.0,16.4 4.0,18.0 4.8,16.5 5.5,14.5 6.2,15.0 7.0,15.5 8.0,13.5 9.0,17.0 10.0,19.3 11.0,19.3 12.0,18.5 13.0,19.7 14.0,21.0 15.0,21.4 16.0,21.0 17.0,19.8 18.0,20.0 19.0,20.8 20.0,20.6 21.0,19.5 22.0,20.5 23.0,21.6 24.0,20.5 25.0,20.0 26.0,18.6 27.0,17.4 28.0,16.4 29.0,18.5 30.0,19.5 31.0,19.6 31.9,19.1 32.9,19.4 33.8,19.1 34.8,19.1 35.8,19.2 36.7,19.3 37.7,19.3 38.6,19.8 39.6,19.4 40.5,19.8 41.5,19.5 42.5,17.6 43.2,18.3 44.0,18.2 45.0,19.3 46.0,19.6 47.0,19.7 48.0,19.0 49.0,19.8 50.0,20.4 51.0,20.2 52.0,19.6 53.0,20.1 54.0,20.0 55.0,20.2 56.0,20.5 57.0,21.4 58.0,22.0 59.0,22.4 60.0,22.8 61.0,22.9 62.0,23.6 63.0,23.0 64.0,23.2 65.0,23.2 66.0,23.8 66.8,24.2 67.5,24.2 68.5,26.0 69.5,27.5 70.8,28.8 72.0,29.5 73.0,30.3 74.0,30.7 75.0,31.4 76.0,31.6 77.0,32.6 78.0,33.0 79.0,34.3 80.0,35.0" fill="none" stroke="#e06464" stroke-width="0.800"/></g><rect x="30.0" y="1" width="11.5" height="36" fill="#e3e3e3" opacity="0.620"/><rect x="0.5" y="26.1" width="79.0" height="1.200" fill="#8794e4"/><rect x="2.0" y="36.800" width="3.500" height="1.200" fill="#bdbdbd" opacity="0.800"/><rect x="27.0" y="36.800" width="3.500" height="1.200" fill="#bdbdbd" opacity="0.800"/><rect x="62.0" y="36.800" width="3.500" height="1.200" fill="#bdbdbd" opacity="0.800"/></svg><div class="wh" style=""><div class="v"><u>782</u><small>.12</small></div><div class="c r">-2<small>.87</small></div><div class="pb r"><b>▼</b>0.37<small>%</small></div><div class="hl">H:790<small>.31</small><br>L:781<small>.88</small></div></div></div><div class="row" style="top:168px"><div class="lab"><div class="nm">為替 ドル円</div><div class="bt" style="left:51px;width:74px;"><i></i><span>為替</span></div><svg class="abs" style="left:127.300px;top:0" width="26" height="26" viewBox="0 0 26 26"><defs><clipPath id="cc"><circle cx="13" cy="13" r="12.7"/></clipPath></defs><g clip-path="url(#cc)"><rect width="26" height="26" fill="#fdfdfd"/><circle cx="16.5" cy="12.5" r="6.4" fill="#cf3d2e"/><rect x="0" y="0" width="13" height="26" fill="#f4f1ee"/><rect x="0" y="1.0" width="13" height="2" fill="#d8483f"/><rect x="0" y="5.0" width="13" height="2" fill="#d8483f"/><rect x="0" y="9.0" width="13" height="2" fill="#d8483f"/><rect x="0" y="13.0" width="13" height="2" fill="#d8483f"/><rect x="0" y="17.0" width="13" height="2" fill="#d8483f"/><rect x="0" y="21.0" width="13" height="2" fill="#d8483f"/><rect x="0" y="25.0" width="13" height="2" fill="#d8483f"/><rect x="0" y="0" width="13" height="12.5" fill="#4a62b0"/><circle cx="2.5" cy="3.0" r="0.55" fill="#dfe4f5"/><circle cx="2.5" cy="6.0" r="0.55" fill="#dfe4f5"/><circle cx="2.5" cy="9.0" r="0.55" fill="#dfe4f5"/><circle cx="2.5" cy="11.5" r="0.55" fill="#dfe4f5"/><circle cx="5.5" cy="3.0" r="0.55" fill="#dfe4f5"/><circle cx="5.5" cy="6.0" r="0.55" fill="#dfe4f5"/><circle cx="5.5" cy="9.0" r="0.55" fill="#dfe4f5"/><circle cx="5.5" cy="11.5" r="0.55" fill="#dfe4f5"/><circle cx="8.5" cy="3.0" r="0.55" fill="#dfe4f5"/><circle cx="8.5" cy="6.0" r="0.55" fill="#dfe4f5"/><circle cx="8.5" cy="9.0" r="0.55" fill="#dfe4f5"/><circle cx="8.5" cy="11.5" r="0.55" fill="#dfe4f5"/><circle cx="11.5" cy="3.0" r="0.55" fill="#dfe4f5"/><circle cx="11.5" cy="6.0" r="0.55" fill="#dfe4f5"/><circle cx="11.5" cy="9.0" r="0.55" fill="#dfe4f5"/><circle cx="11.5" cy="11.5" r="0.55" fill="#dfe4f5"/></g></svg><div class="tm">16:18</div></div><div class="abs" style="left:154.500px;top:-1px;width:81.500px;height:43px;background:#3c3c3b;"></div><svg class="mc" width="80" height="40" viewBox="0 0 80 40"><rect x="0.300" y="0.300" width="79.400" height="39.400" rx="2.200" fill="#ffffff"/><rect x="6.0" y="1" width="0.600" height="37" fill="#ececec"/><rect x="12.5" y="1" width="0.600" height="37" fill="#ececec"/><rect x="19.0" y="1" width="0.600" height="37" fill="#ececec"/><rect x="25.5" y="1" width="0.600" height="37" fill="#ececec"/><rect x="32.0" y="1" width="0.600" height="37" fill="#ececec"/><rect x="38.5" y="1" width="0.600" height="37" fill="#ececec"/><rect x="45.0" y="1" width="0.600" height="37" fill="#ececec"/><rect x="51.5" y="1" width="0.600" height="37" fill="#ececec"/><rect x="58.0" y="1" width="0.600" height="37" fill="#ececec"/><rect x="64.5" y="1" width="0.600" height="37" fill="#ececec"/><rect x="71.0" y="1" width="0.600" height="37" fill="#ececec"/><rect x="77.5" y="1" width="0.600" height="37" fill="#ececec"/><rect x="1" y="8" width="78" height="0.500" fill="#f1f1f1"/><rect x="1" y="16" width="78" height="0.500" fill="#f1f1f1"/><rect x="1" y="24" width="78" height="0.500" fill="#f1f1f1"/><rect x="1" y="32" width="78" height="0.500" fill="#f1f1f1"/><defs><linearGradient id="m5g" x1="0" y1="0" x2="0" y2="1"><stop offset="0" stop-color="#9fd897"/><stop offset="1" stop-color="#e9f6e6"/></linearGradient></defs><polygon points="0.0,30.5 0.0,29.0 1.0,28.8 2.0,28.7 3.0,28.4 4.0,29.1 5.0,29.5 6.0,29.5 7.0,28.6 8.0,27.0 9.0,25.6 10.0,24.5 11.2,24.3 12.5,23.2 13.6,22.7 14.7,22.4 15.8,23.5 17.0,25.0 17.8,23.9 18.5,23.5 19.6,25.4 20.7,27.3 21.6,24.8 22.5,23.0 23.2,20.8 24.0,19.0 25.0,17.7 26.0,16.4 27.0,14.7 28.2,13.8 29.5,12.5 30.4,12.8 31.2,13.4 32.1,14.2 33.0,15.0 34.0,14.8 35.0,14.8 36.0,14.2 37.0,14.0 38.0,13.7 39.0,13.0 40.0,12.5 41.0,12.7 42.0,12.5 43.0,12.6 44.0,12.6 45.0,13.0 46.0,13.1 47.0,13.2 48.0,13.2 49.0,13.1 50.0,13.2 51.0,13.3 52.0,12.4 53.0,12.0 53.8,12.9 54.5,13.3 55.4,12.9 56.2,12.6 57.1,12.2 58.0,11.5 59.0,10.8 60.0,10.1 61.0,9.7 62.0,9.3 63.0,10.2 64.0,10.4 65.0,10.0 66.0,8.9 67.0,8.5 68.0,7.6 69.0,6.8 70.0,6.6 71.0,5.3 72.0,5.0 73.0,5.9 74.0,6.8 75.0,7.0 76.0,8.1 77.0,9.3 78.0,9.6 79.0,9.7 80.0,10.4 80.0,30.5" fill="url(#m5g)"/><polyline points="0.0,29.0 1.0,28.8 2.0,28.7 3.0,28.4 4.0,29.1 5.0,29.5 6.0,29.5 7.0,28.6 8.0,27.0 9.0,25.6 10.0,24.5 11.2,24.3 12.5,23.2 13.6,22.7 14.7,22.4 15.8,23.5 17.0,25.0 17.8,23.9 18.5,23.5 19.6,25.4 20.7,27.3 21.6,24.8 22.5,23.0 23.2,20.8 24.0,19.0 25.0,17.7 26.0,16.4 27.0,14.7 28.2,13.8 29.5,12.5 30.4,12.8 31.2,13.4 32.1,14.2 33.0,15.0 34.0,14.8 35.0,14.8 36.0,14.2 37.0,14.0 38.0,13.7 39.0,13.0 40.0,12.5 41.0,12.7 42.0,12.5 43.0,12.6 44.0,12.6 45.0,13.0 46.0,13.1 47.0,13.2 48.0,13.2 49.0,13.1 50.0,13.2 51.0,13.3 52.0,12.4 53.0,12.0 53.8,12.9 54.5,13.3 55.4,12.9 56.2,12.6 57.1,12.2 58.0,11.5 59.0,10.8 60.0,10.1 61.0,9.7 62.0,9.3 63.0,10.2 64.0,10.4 65.0,10.0 66.0,8.9 67.0,8.5 68.0,7.6 69.0,6.8 70.0,6.6 71.0,5.3 72.0,5.0 73.0,5.9 74.0,6.8 75.0,7.0 76.0,8.1 77.0,9.3 78.0,9.6 79.0,9.7 80.0,10.4" fill="none" stroke="#58a552" stroke-width="0.800"/><rect x="3.0" y="36.800" width="3.500" height="1.200" fill="#bdbdbd" opacity="0.800"/><rect x="12.0" y="36.800" width="3.500" height="1.200" fill="#bdbdbd" opacity="0.800"/><rect x="21.0" y="36.800" width="3.500" height="1.200" fill="#bdbdbd" opacity="0.800"/><rect x="30.0" y="36.800" width="3.500" height="1.200" fill="#bdbdbd" opacity="0.800"/><rect x="39.0" y="36.800" width="3.500" height="1.200" fill="#bdbdbd" opacity="0.800"/><rect x="48.0" y="36.800" width="3.500" height="1.200" fill="#bdbdbd" opacity="0.800"/><rect x="57.0" y="36.800" width="3.500" height="1.200" fill="#bdbdbd" opacity="0.800"/><rect x="66.0" y="36.800" width="3.500" height="1.200" fill="#bdbdbd" opacity="0.800"/><rect x="75.0" y="36.800" width="3.500" height="1.200" fill="#bdbdbd" opacity="0.800"/></svg><div class="wh" style="border-top:1px solid #9c9c9a;top:-1px;"><div class="v k"><u>148.47</u><small>1</small></div><div class="c g">+0.12<small>3</small></div><div class="pb g"><b>▲</b>0.08<small>%</small></div><div class="hl">H:148.77<small>6</small><br>L:148.28<small>2</small></div></div></div><div class="row" style="top:210px"><div class="lab"><div class="nm">為替 ユーロ円</div><div class="bt" style="left:51px;width:74px;"><i></i><span>為替</span></div><svg class="abs" style="left:127.300px;top:0" width="26" height="26" viewBox="0 0 26 26"><defs><clipPath id="cc"><circle cx="13" cy="13" r="12.7"/></clipPath></defs><g clip-path="url(#cc)"><rect width="26" height="26" fill="#fdfdfd"/><circle cx="16.5" cy="12.5" r="6.4" fill="#cf3d2e"/><rect x="0" y="0" width="13" height="26" fill="#f4f1ee"/><rect x="0" y="1.0" width="13" height="2" fill="#d8483f"/><rect x="0" y="5.0" width="13" height="2" fill="#d8483f"/><rect x="0" y="9.0" width="13" height="2" fill="#d8483f"/><rect x="0" y="13.0" width="13" height="2" fill="#d8483f"/><rect x="0" y="17.0" width="13" height="2" fill="#d8483f"/><rect x="0" y="21.0" width="13" height="2" fill="#d8483f"/><rect x="0" y="25.0" width="13" height="2" fill="#d8483f"/><rect x="0" y="0" width="13" height="12.5" fill="#4a62b0"/><circle cx="2.5" cy="3.0" r="0.55" fill="#dfe4f5"/><circle cx="2.5" cy="6.0" r="0.55" fill="#dfe4f5"/><circle cx="2.5" cy="9.0" r="0.55" fill="#dfe4f5"/><circle cx="2.5" cy="11.5" r="0.55" fill="#dfe4f5"/><circle cx="5.5" cy="3.0" r="0.55" fill="#dfe4f5"/><circle cx="5.5" cy="6.0" r="0.55" fill="#dfe4f5"/><circle cx="5.5" cy="9.0" r="0.55" fill="#dfe4f5"/><circle cx="5.5" cy="11.5" r="0.55" fill="#dfe4f5"/><circle cx="8.5" cy="3.0" r="0.55" fill="#dfe4f5"/><circle cx="8.5" cy="6.0" r="0.55" fill="#dfe4f5"/><circle cx="8.5" cy="9.0" r="0.55" fill="#dfe4f5"/><circle cx="8.5" cy="11.5" r="0.55" fill="#dfe4f5"/><circle cx="11.5" cy="3.0" r="0.55" fill="#dfe4f5"/><circle cx="11.5" cy="6.0" r="0.55" fill="#dfe4f5"/><circle cx="11.5" cy="9.0" r="0.55" fill="#dfe4f5"/><circle cx="11.5" cy="11.5" r="0.55" fill="#dfe4f5"/></g></svg><div class="tm">16:18</div></div><div class="abs" style="left:154.500px;top:-1px;width:81.500px;height:43px;background:#3c3c3b;"></div><svg class="mc" width="80" height="40" viewBox="0 0 80 40"><rect x="0.300" y="0.300" width="79.400" height="39.400" rx="2.200" fill="#ffffff"/><rect x="6.0" y="1" width="0.600" height="37" fill="#ececec"/><rect x="12.5" y="1" width="0.600" height="37" fill="#ececec"/><rect x="19.0" y="1" width="0.600" height="37" fill="#ececec"/><rect x="25.5" y="1" width="0.600" height="37" fill="#ececec"/><rect x="32.0" y="1" width="0.600" height="37" fill="#ececec"/><rect x="38.5" y="1" width="0.600" height="37" fill="#ececec"/><rect x="45.0" y="1" width="0.600" height="37" fill="#ececec"/><rect x="51.5" y="1" width="0.600" height="37" fill="#ececec"/><rect x="58.0" y="1" width="0.600" height="37" fill="#ececec"/><rect x="64.5" y="1" width="0.600" height="37" fill="#ececec"/><rect x="71.0" y="1" width="0.600" height="37" fill="#ececec"/><rect x="77.5" y="1" width="0.600" height="37" fill="#ececec"/><rect x="1" y="8" width="78" height="0.500" fill="#f1f1f1"/><rect x="1" y="16" width="78" height="0.500" fill="#f1f1f1"/><rect x="1" y="24" width="78" height="0.500" fill="#f1f1f1"/><rect x="1" y="32" width="78" height="0.500" fill="#f1f1f1"/><defs><linearGradient id="m6g" x1="0" y1="0" x2="0" y2="1"><stop offset="0" stop-color="#9fd897"/><stop offset="1" stop-color="#e9f6e6"/></linearGradient></defs><polygon points="0.0,30.5 0.0,27.3 1.0,27.3 2.0,26.6 3.0,26.7 4.0,26.6 5.0,26.7 6.0,26.2 7.0,25.4 8.0,24.5 9.1,24.3 10.2,23.1 11.4,22.9 12.5,22.4 13.4,22.5 14.2,23.2 15.1,24.0 16.0,24.5 17.0,24.4 18.0,25.0 19.0,25.6 19.9,26.9 20.9,27.9 21.8,29.0 22.9,27.4 23.9,26.4 25.0,25.0 26.0,25.0 27.0,24.1 28.0,24.5 29.0,24.0 30.0,24.1 31.0,23.7 32.0,23.4 33.0,24.1 34.0,23.4 35.0,23.5 36.0,23.0 37.0,22.9 38.0,23.5 39.0,23.2 40.0,23.0 41.0,23.4 42.0,23.5 43.0,23.5 44.0,24.1 45.0,23.7 46.0,24.0 47.0,23.8 48.0,23.9 49.0,23.4 50.0,23.4 51.0,22.9 52.0,22.8 53.0,22.8 54.0,22.1 55.0,22.4 56.0,21.9 57.0,21.8 58.0,21.4 59.0,21.3 60.0,21.3 61.0,20.9 62.0,21.1 63.0,21.4 64.0,21.2 65.0,21.2 66.0,21.3 67.0,21.3 68.0,21.6 69.0,22.5 70.0,22.4 71.0,22.7 72.0,22.7 73.0,22.5 74.0,22.9 75.0,23.5 76.0,23.3 77.0,24.0 78.0,24.1 79.0,24.8 80.0,24.5 80.0,30.5" fill="url(#m6g)"/><polyline points="0.0,27.3 1.0,27.3 2.0,26.6 3.0,26.7 4.0,26.6 5.0,26.7 6.0,26.2 7.0,25.4 8.0,24.5 9.1,24.3 10.2,23.1 11.4,22.9 12.5,22.4 13.4,22.5 14.2,23.2 15.1,24.0 16.0,24.5 17.0,24.4 18.0,25.0 19.0,25.6 19.9,26.9 20.9,27.9 21.8,29.0 22.9,27.4 23.9,26.4 25.0,25.0 26.0,25.0 27.0,24.1 28.0,24.5 29.0,24.0 30.0,24.1 31.0,23.7 32.0,23.4 33.0,24.1 34.0,23.4 35.0,23.5 36.0,23.0 37.0,22.9 38.0,23.5 39.0,23.2 40.0,23.0 41.0,23.4 42.0,23.5 43.0,23.5 44.0,24.1 45.0,23.7 46.0,24.0 47.0,23.8 48.0,23.9 49.0,23.4 50.0,23.4 51.0,22.9 52.0,22.8 53.0,22.8 54.0,22.1 55.0,22.4 56.0,21.9 57.0,21.8 58.0,21.4 59.0,21.3 60.0,21.3 61.0,20.9 62.0,21.1 63.0,21.4 64.0,21.2 65.0,21.2 66.0,21.3 67.0,21.3 68.0,21.6 69.0,22.5 70.0,22.4 71.0,22.7 72.0,22.7 73.0,22.5 74.0,22.9 75.0,23.5 76.0,23.3 77.0,24.0 78.0,24.1 79.0,24.8 80.0,24.5" fill="none" stroke="#58a552" stroke-width="0.800"/><rect x="3.0" y="36.800" width="3.500" height="1.200" fill="#bdbdbd" opacity="0.800"/><rect x="12.0" y="36.800" width="3.500" height="1.200" fill="#bdbdbd" opacity="0.800"/><rect x="21.0" y="36.800" width="3.500" height="1.200" fill="#bdbdbd" opacity="0.800"/><rect x="30.0" y="36.800" width="3.500" height="1.200" fill="#bdbdbd" opacity="0.800"/><rect x="39.0" y="36.800" width="3.500" height="1.200" fill="#bdbdbd" opacity="0.800"/><rect x="48.0" y="36.800" width="3.500" height="1.200" fill="#bdbdbd" opacity="0.800"/><rect x="57.0" y="36.800" width="3.500" height="1.200" fill="#bdbdbd" opacity="0.800"/><rect x="66.0" y="36.800" width="3.500" height="1.200" fill="#bdbdbd" opacity="0.800"/><rect x="75.0" y="36.800" width="3.500" height="1.200" fill="#bdbdbd" opacity="0.800"/></svg><div class="wh" style=""><div class="v k"><u>172.18</u><small>9</small></div><div class="c g">+0.02<small>0</small></div><div class="pb g"><b>▲</b>0.01<small>%</small></div><div class="hl">H:172.53<small>3</small><br>L:172.05<small>3</small></div></div></div><div class="row" style="top:252px"><div class="lab" style="border-bottom-width:0"><span class="abs" style="left:2px;top:5px;width:26px;height:13.5px;background:#2e2e2d;border-radius:2px;color:#f2f2f0;font-weight:bold;font-size:10.5px;line-height:14px;text-align:center;letter-spacing:0.2px;">CFD</span><div class="nm" style="left:30.5px;font-size:14.2px;top:0.5px">日経平均</div><svg class="abs" style="left:105px;top:1px" width="20" height="20" viewBox="0 0 20 20"><circle cx="10" cy="10" r="9.6" fill="#49a5ea"/><path d="M5.300 5l9.400 10M14.300 5l-8.800 10" stroke="#fff" stroke-width="1.500" fill="none"/><path d="M6.800 5l9.400 10" stroke="#fff" stroke-width="0.900" fill="none"/></svg><svg class="abs" style="left:127.300px;top:0" width="26" height="26" viewBox="0 0 26 26"><circle cx="13" cy="13" r="12.7" fill="#fdfdfd"/><circle cx="13" cy="12.5" r="6.6" fill="#cf3d2e"/></svg><div class="tm">16:18</div></div><div class="abs" style="left:154.500px;top:-1px;width:81.500px;height:41px;background:#3c3c3b;"></div><svg class="mc" width="80" height="40" viewBox="0 0 80 40"><rect x="0.300" y="0.300" width="79.400" height="39.400" rx="2.200" fill="#ffffff"/><rect x="55.0" y="0.500" width="22.0" height="39" fill="#fbe98c"/><rect x="6.0" y="1" width="0.600" height="37" fill="#ececec"/><rect x="12.5" y="1" width="0.600" height="37" fill="#ececec"/><rect x="19.0" y="1" width="0.600" height="37" fill="#ececec"/><rect x="25.5" y="1" width="0.600" height="37" fill="#ececec"/><rect x="32.0" y="1" width="0.600" height="37" fill="#ececec"/><rect x="38.5" y="1" width="0.600" height="37" fill="#ececec"/><rect x="45.0" y="1" width="0.600" height="37" fill="#ececec"/><rect x="51.5" y="1" width="0.600" height="37" fill="#ececec"/><rect x="58.0" y="1" width="0.600" height="37" fill="#ececec"/><rect x="64.5" y="1" width="0.600" height="37" fill="#ececec"/><rect x="71.0" y="1" width="0.600" height="37" fill="#ececec"/><rect x="77.5" y="1" width="0.600" height="37" fill="#ececec"/><rect x="1" y="8" width="78" height="0.500" fill="#f1f1f1"/><rect x="1" y="16" width="78" height="0.500" fill="#f1f1f1"/><rect x="1" y="24" width="78" height="0.500" fill="#f1f1f1"/><rect x="1" y="32" width="78" height="0.500" fill="#f1f1f1"/><defs><clipPath id="m7u"><rect x="0" y="0" width="80" height="14.2"/></clipPath><clipPath id="m7d"><rect x="0" y="14.2" width="80" height="25.8"/></clipPath></defs><g clip-path="url(#m7u)"><polygon points="0.0,14.2 0.0,14.2 1.0,14.3 2.0,13.7 3.0,13.6 4.0,15.0 5.0,16.5 6.0,17.5 7.0,16.7 8.0,16.4 9.0,15.8 9.9,15.5 10.8,15.4 11.6,14.2 12.5,14.2 13.4,14.4 14.2,15.1 15.1,16.1 16.0,16.4 17.0,16.6 18.0,15.8 19.0,16.3 20.0,15.8 21.0,14.2 22.0,13.0 23.0,11.0 24.0,12.1 25.0,12.5 26.0,11.6 27.0,11.5 28.0,13.3 29.0,14.2 30.0,14.7 31.0,15.0 32.0,15.8 33.0,16.4 34.0,14.9 35.0,14.2 36.0,14.2 37.0,13.8 38.0,13.1 39.0,13.0 40.0,13.0 41.0,13.3 42.0,13.9 43.0,13.7 44.0,14.2 45.0,13.4 46.0,13.2 47.0,12.5 48.0,12.5 49.0,12.0 50.0,12.2 51.0,11.5 52.0,11.4 53.0,11.7 54.0,12.0 55.0,14.2 56.0,20.7 56.8,18.5 57.5,15.8 58.8,15.0 60.0,14.7 61.2,13.3 62.5,12.5 63.8,13.7 65.0,15.3 66.0,15.9 67.0,16.6 68.0,16.9 69.0,16.9 70.0,16.3 71.0,16.3 72.0,16.4 73.0,15.8 74.0,15.9 75.0,15.5 76.0,15.3 77.0,15.8 78.0,15.8 79.0,14.8 80.0,13.6 80.0,14.2" fill="#b9e3b3"/><polyline points="0.0,14.2 1.0,14.3 2.0,13.7 3.0,13.6 4.0,15.0 5.0,16.5 6.0,17.5 7.0,16.7 8.0,16.4 9.0,15.8 9.9,15.5 10.8,15.4 11.6,14.2 12.5,14.2 13.4,14.4 14.2,15.1 15.1,16.1 16.0,16.4 17.0,16.6 18.0,15.8 19.0,16.3 20.0,15.8 21.0,14.2 22.0,13.0 23.0,11.0 24.0,12.1 25.0,12.5 26.0,11.6 27.0,11.5 28.0,13.3 29.0,14.2 30.0,14.7 31.0,15.0 32.0,15.8 33.0,16.4 34.0,14.9 35.0,14.2 36.0,14.2 37.0,13.8 38.0,13.1 39.0,13.0 40.0,13.0 41.0,13.3 42.0,13.9 43.0,13.7 44.0,14.2 45.0,13.4 46.0,13.2 47.0,12.5 48.0,12.5 49.0,12.0 50.0,12.2 51.0,11.5 52.0,11.4 53.0,11.7 54.0,12.0 55.0,14.2 56.0,20.7 56.8,18.5 57.5,15.8 58.8,15.0 60.0,14.7 61.2,13.3 62.5,12.5 63.8,13.7 65.0,15.3 66.0,15.9 67.0,16.6 68.0,16.9 69.0,16.9 70.0,16.3 71.0,16.3 72.0,16.4 73.0,15.8 74.0,15.9 75.0,15.5 76.0,15.3 77.0,15.8 78.0,15.8 79.0,14.8 80.0,13.6" fill="none" stroke="#4f9a4a" stroke-width="0.800"/></g><g clip-path="url(#m7d)"><polygon points="0.0,14.2 0.0,14.2 1.0,14.3 2.0,13.7 3.0,13.6 4.0,15.0 5.0,16.5 6.0,17.5 7.0,16.7 8.0,16.4 9.0,15.8 9.9,15.5 10.8,15.4 11.6,14.2 12.5,14.2 13.4,14.4 14.2,15.1 15.1,16.1 16.0,16.4 17.0,16.6 18.0,15.8 19.0,16.3 20.0,15.8 21.0,14.2 22.0,13.0 23.0,11.0 24.0,12.1 25.0,12.5 26.0,11.6 27.0,11.5 28.0,13.3 29.0,14.2 30.0,14.7 31.0,15.0 32.0,15.8 33.0,16.4 34.0,14.9 35.0,14.2 36.0,14.2 37.0,13.8 38.0,13.1 39.0,13.0 40.0,13.0 41.0,13.3 42.0,13.9 43.0,13.7 44.0,14.2 45.0,13.4 46.0,13.2 47.0,12.5 48.0,12.5 49.0,12.0 50.0,12.2 51.0,11.5 52.0,11.4 53.0,11.7 54.0,12.0 55.0,14.2 56.0,20.7 56.8,18.5 57.5,15.8 58.8,15.0 60.0,14.7 61.2,13.3 62.5,12.5 63.8,13.7 65.0,15.3 66.0,15.9 67.0,16.6 68.0,16.9 69.0,16.9 70.0,16.3 71.0,16.3 72.0,16.4 73.0,15.8 74.0,15.9 75.0,15.5 76.0,15.3 77.0,15.8 78.0,15.8 79.0,14.8 80.0,13.6 80.0,14.2" fill="#f7c6c6"/><polyline points="0.0,14.2 1.0,14.3 2.0,13.7 3.0,13.6 4.0,15.0 5.0,16.5 6.0,17.5 7.0,16.7 8.0,16.4 9.0,15.8 9.9,15.5 10.8,15.4 11.6,14.2 12.5,14.2 13.4,14.4 14.2,15.1 15.1,16.1 16.0,16.4 17.0,16.6 18.0,15.8 19.0,16.3 20.0,15.8 21.0,14.2 22.0,13.0 23.0,11.0 24.0,12.1 25.0,12.5 26.0,11.6 27.0,11.5 28.0,13.3 29.0,14.2 30.0,14.7 31.0,15.0 32.0,15.8 33.0,16.4 34.0,14.9 35.0,14.2 36.0,14.2 37.0,13.8 38.0,13.1 39.0,13.0 40.0,13.0 41.0,13.3 42.0,13.9 43.0,13.7 44.0,14.2 45.0,13.4 46.0,13.2 47.0,12.5 48.0,12.5 49.0,12.0 50.0,12.2 51.0,11.5 52.0,11.4 53.0,11.7 54.0,12.0 55.0,14.2 56.0,20.7 56.8,18.5 57.5,15.8 58.8,15.0 60.0,14.7 61.2,13.3 62.5,12.5 63.8,13.7 65.0,15.3 66.0,15.9 67.0,16.6 68.0,16.9 69.0,16.9 70.0,16.3 71.0,16.3 72.0,16.4 73.0,15.8 74.0,15.9 75.0,15.5 76.0,15.3 77.0,15.8 78.0,15.8 79.0,14.8 80.0,13.6" fill="none" stroke="#e06464" stroke-width="0.800"/></g><rect x="3.0" y="36.800" width="3.500" height="1.200" fill="#bdbdbd" opacity="0.800"/><rect x="12.0" y="36.800" width="3.500" height="1.200" fill="#bdbdbd" opacity="0.800"/><rect x="21.0" y="36.800" width="3.500" height="1.200" fill="#bdbdbd" opacity="0.800"/><rect x="30.0" y="36.800" width="3.500" height="1.200" fill="#bdbdbd" opacity="0.800"/><rect x="39.0" y="36.800" width="3.500" height="1.200" fill="#bdbdbd" opacity="0.800"/><rect x="48.0" y="36.800" width="3.500" height="1.200" fill="#bdbdbd" opacity="0.800"/><rect x="57.0" y="36.800" width="3.500" height="1.200" fill="#bdbdbd" opacity="0.800"/><rect x="66.0" y="36.800" width="3.500" height="1.200" fill="#bdbdbd" opacity="0.800"/><rect x="75.0" y="36.800" width="3.500" height="1.200" fill="#bdbdbd" opacity="0.800"/></svg><div class="wh" style="background:#e9e9e5;border-bottom:none;height:40px;"><div class="v k" style="right:244px;font-size:26px;letter-spacing:-1px;bottom:5px"><u>42,664</u><small>.90</small></div><div class="abs" style="left:112px;top:4px;width:174px;height:32px;background:#fbfbf9;border-radius:3px;box-shadow:0 0 2px rgba(0,0,0,.2);"></div><div class="abs" style="left:155px;top:7px;width:64px;height:26px;background:#f0f0ec;border-radius:2px;"></div><div class="abs" style="left:113px;top:12px;font-size:11.500px;line-height:16px;color:#7d7d7b;white-space:nowrap;letter-spacing:-0.500px;">日経比:</div><div class="c g" style="right:133.500px;bottom:8px;font-size:20px">+31</div><div class="pb g" style="left:225px;top:7px;width:57px;height:26px;line-height:27px;font-size:18.500px;background:#f3f3ef;box-shadow:0 0 1.500px rgba(0,0,0,.2);letter-spacing:-0.800px"><b style="font-size:13px">▲</b>0.07<small style="font-size:10px">%</small></div><div class="hl" style="line-height:16px;top:4.3px">H:42,679<br>L:42,517</div></div></div></div><div class="tb" style="left:1112px;top:684px;width:581.300px;height:250px;overflow:hidden;"><div class="row" style="top:0px"><div class="lab"><div class="nm"><span style="font-size:13px;letter-spacing:-0.600px">日本国債10年利回り</span></div><div class="bt" style="left:51px;width:74px;"><i></i><span>国債 債券</span></div><svg class="abs" style="left:127.300px;top:0" width="26" height="26" viewBox="0 0 26 26"><circle cx="13" cy="13" r="12.7" fill="#fdfdfd"/><circle cx="13" cy="12.5" r="6.6" fill="#cf3d2e"/></svg><div class="tm">16:16</div></div><div class="abs" style="left:154.500px;top:-1px;width:81.500px;height:43px;background:#3c3c3b;"></div><svg class="mc" width="80" height="40" viewBox="0 0 80 40"><rect x="0.300" y="0.300" width="79.400" height="39.400" rx="2.200" fill="#ffffff"/><rect x="6.0" y="1" width="0.600" height="37" fill="#ececec"/><rect x="12.5" y="1" width="0.600" height="37" fill="#ececec"/><rect x="19.0" y="1" width="0.600" height="37" fill="#ececec"/><rect x="25.5" y="1" width="0.600" height="37" fill="#ececec"/><rect x="32.0" y="1" width="0.600" height="37" fill="#ececec"/><rect x="38.5" y="1" width="0.600" height="37" fill="#ececec"/><rect x="45.0" y="1" width="0.600" height="37" fill="#ececec"/><rect x="51.5" y="1" width="0.600" height="37" fill="#ececec"/><rect x="58.0" y="1" width="0.600" height="37" fill="#ececec"/><rect x="64.5" y="1" width="0.600" height="37" fill="#ececec"/><rect x="71.0" y="1" width="0.600" height="37" fill="#ececec"/><rect x="77.5" y="1" width="0.600" height="37" fill="#ececec"/><rect x="1" y="8" width="78" height="0.500" fill="#f1f1f1"/><rect x="1" y="16" width="78" height="0.500" fill="#f1f1f1"/><rect x="1" y="24" width="78" height="0.500" fill="#f1f1f1"/><rect x="1" y="32" width="78" height="0.500" fill="#f1f1f1"/><defs><clipPath id="m8u"><rect x="0" y="0" width="80" height="33.3"/></clipPath><clipPath id="m8d"><rect x="0" y="33.3" width="80" height="6.7"/></clipPath></defs><g clip-path="url(#m8u)"><polygon points="0.0,33.3 0.0,29.0 1.2,31.8 2.5,33.8 3.8,31.7 5.0,30.0 5.9,29.8 6.8,29.4 7.8,30.1 8.7,29.5 9.6,30.8 10.5,32.7 11.4,32.9 12.2,32.8 13.1,32.9 14.0,32.7 14.4,12.5 15.2,12.5 15.6,32.7 17.0,33.3 17.5,34.6 18.5,34.5 19.5,34.5 20.6,34.5 21.6,34.2 22.6,34.4 23.6,34.4 24.6,34.9 25.6,34.6 26.7,34.2 27.7,34.2 28.7,34.5 29.7,35.0 30.7,34.2 31.8,34.6 32.8,34.8 33.8,34.3 34.8,34.9 35.8,34.9 36.8,34.9 37.9,34.3 38.9,35.0 39.9,34.4 40.9,34.9 41.9,34.9 42.9,34.6 44.0,34.8 45.0,34.8 46.0,34.6 46.5,33.3 47.0,28.4 47.8,28.1 48.5,27.3 49.2,28.2 50.0,29.5 51.0,31.5 52.0,32.7 53.0,32.4 54.0,31.8 55.0,31.6 56.0,31.0 57.0,31.5 58.0,31.4 59.0,31.1 60.0,30.5 61.0,30.2 62.0,29.9 63.0,29.1 64.0,28.5 65.0,28.4 66.0,29.2 67.0,29.4 68.0,29.5 69.0,29.4 70.0,29.5 71.0,29.0 72.0,27.9 73.0,27.1 74.0,26.7 75.0,26.5 76.0,26.7 77.0,26.3 78.0,25.0 79.0,23.9 80.0,23.5 80.0,33.3" fill="#b9e3b3"/><polyline points="0.0,29.0 1.2,31.8 2.5,33.8 3.8,31.7 5.0,30.0 5.9,29.8 6.8,29.4 7.8,30.1 8.7,29.5 9.6,30.8 10.5,32.7 11.4,32.9 12.2,32.8 13.1,32.9 14.0,32.7 14.4,12.5 15.2,12.5 15.6,32.7 17.0,33.3 17.5,34.6 18.5,34.5 19.5,34.5 20.6,34.5 21.6,34.2 22.6,34.4 23.6,34.4 24.6,34.9 25.6,34.6 26.7,34.2 27.7,34.2 28.7,34.5 29.7,35.0 30.7,34.2 31.8,34.6 32.8,34.8 33.8,34.3 34.8,34.9 35.8,34.9 36.8,34.9 37.9,34.3 38.9,35.0 39.9,34.4 40.9,34.9 41.9,34.9 42.9,34.6 44.0,34.8 45.0,34.8 46.0,34.6 46.5,33.3 47.0,28.4 47.8,28.1 48.5,27.3 49.2,28.2 50.0,29.5 51.0,31.5 52.0,32.7 53.0,32.4 54.0,31.8 55.0,31.6 56.0,31.0 57.0,31.5 58.0,31.4 59.0,31.1 60.0,30.5 61.0,30.2 62.0,29.9 63.0,29.1 64.0,28.5 65.0,28.4 66.0,29.2 67.0,29.4 68.0,29.5 69.0,29.4 70.0,29.5 71.0,29.0 72.0,27.9 73.0,27.1 74.0,26.7 75.0,26.5 76.0,26.7 77.0,26.3 78.0,25.0 79.0,23.9 80.0,23.5" fill="none" stroke="#4f9a4a" stroke-width="0.800"/></g><g clip-path="url(#m8d)"><polygon points="0.0,33.3 0.0,29.0 1.2,31.8 2.5,33.8 3.8,31.7 5.0,30.0 5.9,29.8 6.8,29.4 7.8,30.1 8.7,29.5 9.6,30.8 10.5,32.7 11.4,32.9 12.2,32.8 13.1,32.9 14.0,32.7 14.4,12.5 15.2,12.5 15.6,32.7 17.0,33.3 17.5,34.6 18.5,34.5 19.5,34.5 20.6,34.5 21.6,34.2 22.6,34.4 23.6,34.4 24.6,34.9 25.6,34.6 26.7,34.2 27.7,34.2 28.7,34.5 29.7,35.0 30.7,34.2 31.8,34.6 32.8,34.8 33.8,34.3 34.8,34.9 35.8,34.9 36.8,34.9 37.9,34.3 38.9,35.0 39.9,34.4 40.9,34.9 41.9,34.9 42.9,34.6 44.0,34.8 45.0,34.8 46.0,34.6 46.5,33.3 47.0,28.4 47.8,28.1 48.5,27.3 49.2,28.2 50.0,29.5 51.0,31.5 52.0,32.7 53.0,32.4 54.0,31.8 55.0,31.6 56.0,31.0 57.0,31.5 58.0,31.4 59.0,31.1 60.0,30.5 61.0,30.2 62.0,29.9 63.0,29.1 64.0,28.5 65.0,28.4 66.0,29.2 67.0,29.4 68.0,29.5 69.0,29.4 70.0,29.5 71.0,29.0 72.0,27.9 73.0,27.1 74.0,26.7 75.0,26.5 76.0,26.7 77.0,26.3 78.0,25.0 79.0,23.9 80.0,23.5 80.0,33.3" fill="#f7c6c6"/><polyline points="0.0,29.0 1.2,31.8 2.5,33.8 3.8,31.7 5.0,30.0 5.9,29.8 6.8,29.4 7.8,30.1 8.7,29.5 9.6,30.8 10.5,32.7 11.4,32.9 12.2,32.8 13.1,32.9 14.0,32.7 14.4,12.5 15.2,12.5 15.6,32.7 17.0,33.3 17.5,34.6 18.5,34.5 19.5,34.5 20.6,34.5 21.6,34.2 22.6,34.4 23.6,34.4 24.6,34.9 25.6,34.6 26.7,34.2 27.7,34.2 28.7,34.5 29.7,35.0 30.7,34.2 31.8,34.6 32.8,34.8 33.8,34.3 34.8,34.9 35.8,34.9 36.8,34.9 37.9,34.3 38.9,35.0 39.9,34.4 40.9,34.9 41.9,34.9 42.9,34.6 44.0,34.8 45.0,34.8 46.0,34.6 46.5,33.3 47.0,28.4 47.8,28.1 48.5,27.3 49.2,28.2 50.0,29.5 51.0,31.5 52.0,32.7 53.0,32.4 54.0,31.8 55.0,31.6 56.0,31.0 57.0,31.5 58.0,31.4 59.0,31.1 60.0,30.5 61.0,30.2 62.0,29.9 63.0,29.1 64.0,28.5 65.0,28.4 66.0,29.2 67.0,29.4 68.0,29.5 69.0,29.4 70.0,29.5 71.0,29.0 72.0,27.9 73.0,27.1 74.0,26.7 75.0,26.5 76.0,26.7 77.0,26.3 78.0,25.0 79.0,23.9 80.0,23.5" fill="none" stroke="#e06464" stroke-width="0.800"/></g><rect x="3.0" y="36.800" width="3.500" height="1.200" fill="#bdbdbd" opacity="0.800"/><rect x="12.0" y="36.800" width="3.500" height="1.200" fill="#bdbdbd" opacity="0.800"/><rect x="21.0" y="36.800" width="3.500" height="1.200" fill="#bdbdbd" opacity="0.800"/><rect x="30.0" y="36.800" width="3.500" height="1.200" fill="#bdbdbd" opacity="0.800"/><rect x="39.0" y="36.800" width="3.500" height="1.200" fill="#bdbdbd" opacity="0.800"/><rect x="48.0" y="36.800" width="3.500" height="1.200" fill="#bdbdbd" opacity="0.800"/><rect x="57.0" y="36.800" width="3.500" height="1.200" fill="#bdbdbd" opacity="0.800"/><rect x="66.0" y="36.800" width="3.500" height="1.200" fill="#bdbdbd" opacity="0.800"/><rect x="75.0" y="36.800" width="3.500" height="1.200" fill="#bdbdbd" opacity="0.800"/></svg><div class="wh" style=""><div class="v k"><u>1.620</u></div><div class="c g">+0.012</div><div class="pb g"><b>▲</b>0.75<small>%</small></div><div class="hl" style="line-height:16px;top:4.3px">H:1.621<br>L:1.608</div></div></div><div class="row" style="top:42px"><div class="lab"><div class="nm">長期国債先物 <span style="font-size:10.500px">大取</span></div><svg class="abs" style="left:127.300px;top:0" width="26" height="26" viewBox="0 0 26 26"><circle cx="13" cy="13" r="12.7" fill="#fdfdfd"/><circle cx="13" cy="12.5" r="6.6" fill="#cf3d2e"/></svg><div class="tm">16:04</div></div><div class="abs" style="left:154.500px;top:-1px;width:81.500px;height:43px;background:#3c3c3b;"></div><svg class="mc" width="80" height="40" viewBox="0 0 80 40"><rect x="0.300" y="0.300" width="79.400" height="39.400" rx="2.200" fill="#ffffff"/><rect x="6.0" y="1" width="0.600" height="37" fill="#ececec"/><rect x="12.5" y="1" width="0.600" height="37" fill="#ececec"/><rect x="19.0" y="1" width="0.600" height="37" fill="#ececec"/><rect x="25.5" y="1" width="0.600" height="37" fill="#ececec"/><rect x="32.0" y="1" width="0.600" height="37" fill="#ececec"/><rect x="38.5" y="1" width="0.600" height="37" fill="#ececec"/><rect x="45.0" y="1" width="0.600" height="37" fill="#ececec"/><rect x="51.5" y="1" width="0.600" height="37" fill="#ececec"/><rect x="58.0" y="1" width="0.600" height="37" fill="#ececec"/><rect x="64.5" y="1" width="0.600" height="37" fill="#ececec"/><rect x="71.0" y="1" width="0.600" height="37" fill="#ececec"/><rect x="77.5" y="1" width="0.600" height="37" fill="#ececec"/><rect x="1" y="8" width="78" height="0.500" fill="#f1f1f1"/><rect x="1" y="16" width="78" height="0.500" fill="#f1f1f1"/><rect x="1" y="24" width="78" height="0.500" fill="#f1f1f1"/><rect x="1" y="32" width="78" height="0.500" fill="#f1f1f1"/><defs><clipPath id="m9u"><rect x="0" y="0" width="80" height="24.5"/></clipPath><clipPath id="m9d"><rect x="0" y="24.5" width="80" height="15.5"/></clipPath></defs><g clip-path="url(#m9u)"><polygon points="0.0,24.5 0.0,26.7 1.0,25.8 2.0,24.0 2.8,22.2 3.5,20.2 4.5,21.0 5.5,21.8 6.5,21.3 7.5,20.7 8.8,22.8 10.0,24.5 11.0,23.5 12.0,21.6 13.0,20.2 14.0,21.3 15.0,22.9 16.0,21.7 17.0,20.7 17.8,21.4 18.5,22.9 19.2,21.9 20.0,20.7 20.8,23.0 21.5,24.5 22.2,26.2 23.0,28.4 24.0,29.4 25.0,30.0 26.0,31.4 27.0,33.3 28.0,35.3 29.0,36.5 30.0,36.6 31.0,36.5 32.0,34.5 33.0,32.7 34.0,32.1 35.0,32.1 36.0,32.2 37.0,33.1 38.0,33.3 39.0,32.5 40.0,32.3 41.0,31.6 42.0,31.4 43.0,31.0 44.0,31.5 45.0,32.2 46.0,32.4 47.0,31.9 48.0,32.4 49.0,31.8 50.0,31.9 51.0,32.4 52.0,31.9 53.0,31.9 54.0,32.2 55.0,31.9 56.0,31.6 56.8,28.2 57.5,24.5 58.5,20.7 59.8,20.6 61.0,21.3 62.0,20.9 63.0,20.2 64.0,21.0 65.0,21.2 66.0,22.4 67.0,22.8 68.0,22.7 69.0,23.5 70.0,23.5 71.0,23.6 72.0,23.5 73.0,23.9 74.0,24.5 75.0,25.2 76.0,26.2 77.0,26.7 78.0,26.7 78.8,27.3 79.5,28.4 79.5,24.5" fill="#b9e3b3"/><polyline points="0.0,26.7 1.0,25.8 2.0,24.0 2.8,22.2 3.5,20.2 4.5,21.0 5.5,21.8 6.5,21.3 7.5,20.7 8.8,22.8 10.0,24.5 11.0,23.5 12.0,21.6 13.0,20.2 14.0,21.3 15.0,22.9 16.0,21.7 17.0,20.7 17.8,21.4 18.5,22.9 19.2,21.9 20.0,20.7 20.8,23.0 21.5,24.5 22.2,26.2 23.0,28.4 24.0,29.4 25.0,30.0 26.0,31.4 27.0,33.3 28.0,35.3 29.0,36.5 30.0,36.6 31.0,36.5 32.0,34.5 33.0,32.7 34.0,32.1 35.0,32.1 36.0,32.2 37.0,33.1 38.0,33.3 39.0,32.5 40.0,32.3 41.0,31.6 42.0,31.4 43.0,31.0 44.0,31.5 45.0,32.2 46.0,32.4 47.0,31.9 48.0,32.4 49.0,31.8 50.0,31.9 51.0,32.4 52.0,31.9 53.0,31.9 54.0,32.2 55.0,31.9 56.0,31.6 56.8,28.2 57.5,24.5 58.5,20.7 59.8,20.6 61.0,21.3 62.0,20.9 63.0,20.2 64.0,21.0 65.0,21.2 66.0,22.4 67.0,22.8 68.0,22.7 69.0,23.5 70.0,23.5 71.0,23.6 72.0,23.5 73.0,23.9 74.0,24.5 75.0,25.2 76.0,26.2 77.0,26.7 78.0,26.7 78.8,27.3 79.5,28.4" fill="none" stroke="#4f9a4a" stroke-width="0.800"/></g><g clip-path="url(#m9d)"><polygon points="0.0,24.5 0.0,26.7 1.0,25.8 2.0,24.0 2.8,22.2 3.5,20.2 4.5,21.0 5.5,21.8 6.5,21.3 7.5,20.7 8.8,22.8 10.0,24.5 11.0,23.5 12.0,21.6 13.0,20.2 14.0,21.3 15.0,22.9 16.0,21.7 17.0,20.7 17.8,21.4 18.5,22.9 19.2,21.9 20.0,20.7 20.8,23.0 21.5,24.5 22.2,26.2 23.0,28.4 24.0,29.4 25.0,30.0 26.0,31.4 27.0,33.3 28.0,35.3 29.0,36.5 30.0,36.6 31.0,36.5 32.0,34.5 33.0,32.7 34.0,32.1 35.0,32.1 36.0,32.2 37.0,33.1 38.0,33.3 39.0,32.5 40.0,32.3 41.0,31.6 42.0,31.4 43.0,31.0 44.0,31.5 45.0,32.2 46.0,32.4 47.0,31.9 48.0,32.4 49.0,31.8 50.0,31.9 51.0,32.4 52.0,31.9 53.0,31.9 54.0,32.2 55.0,31.9 56.0,31.6 56.8,28.2 57.5,24.5 58.5,20.7 59.8,20.6 61.0,21.3 62.0,20.9 63.0,20.2 64.0,21.0 65.0,21.2 66.0,22.4 67.0,22.8 68.0,22.7 69.0,23.5 70.0,23.5 71.0,23.6 72.0,23.5 73.0,23.9 74.0,24.5 75.0,25.2 76.0,26.2 77.0,26.7 78.0,26.7 78.8,27.3 79.5,28.4 79.5,24.5" fill="#f7c6c6"/><polyline points="0.0,26.7 1.0,25.8 2.0,24.0 2.8,22.2 3.5,20.2 4.5,21.0 5.5,21.8 6.5,21.3 7.5,20.7 8.8,22.8 10.0,24.5 11.0,23.5 12.0,21.6 13.0,20.2 14.0,21.3 15.0,22.9 16.0,21.7 17.0,20.7 17.8,21.4 18.5,22.9 19.2,21.9 20.0,20.7 20.8,23.0 21.5,24.5 22.2,26.2 23.0,28.4 24.0,29.4 25.0,30.0 26.0,31.4 27.0,33.3 28.0,35.3 29.0,36.5 30.0,36.6 31.0,36.5 32.0,34.5 33.0,32.7 34.0,32.1 35.0,32.1 36.0,32.2 37.0,33.1 38.0,33.3 39.0,32.5 40.0,32.3 41.0,31.6 42.0,31.4 43.0,31.0 44.0,31.5 45.0,32.2 46.0,32.4 47.0,31.9 48.0,32.4 49.0,31.8 50.0,31.9 51.0,32.4 52.0,31.9 53.0,31.9 54.0,32.2 55.0,31.9 56.0,31.6 56.8,28.2 57.5,24.5 58.5,20.7 59.8,20.6 61.0,21.3 62.0,20.9 63.0,20.2 64.0,21.0 65.0,21.2 66.0,22.4 67.0,22.8 68.0,22.7 69.0,23.5 70.0,23.5 71.0,23.6 72.0,23.5 73.0,23.9 74.0,24.5 75.0,25.2 76.0,26.2 77.0,26.7 78.0,26.7 78.8,27.3 79.5,28.4" fill="none" stroke="#e06464" stroke-width="0.800"/></g><rect x="3.0" y="36.800" width="3.500" height="1.200" fill="#bdbdbd" opacity="0.800"/><rect x="12.0" y="36.800" width="3.500" height="1.200" fill="#bdbdbd" opacity="0.800"/><rect x="21.0" y="36.800" width="3.500" height="1.200" fill="#bdbdbd" opacity="0.800"/><rect x="30.0" y="36.800" width="3.500" height="1.200" fill="#bdbdbd" opacity="0.800"/><rect x="39.0" y="36.800" width="3.500" height="1.200" fill="#bdbdbd" opacity="0.800"/><rect x="48.0" y="36.800" width="3.500" height="1.200" fill="#bdbdbd" opacity="0.800"/><rect x="57.0" y="36.800" width="3.500" height="1.200" fill="#bdbdbd" opacity="0.800"/><rect x="66.0" y="36.800" width="3.500" height="1.200" fill="#bdbdbd" opacity="0.800"/><rect x="75.0" y="36.800" width="3.500" height="1.200" fill="#bdbdbd" opacity="0.800"/></svg><div class="wh" style=""><div class="v k"><u>137.49</u></div><div class="c r">-0.06</div><div class="pb r"><b>▼</b>0.00<small>%</small></div><div class="hl" style="line-height:16px;top:4.3px">H:137.55<br>L:137.48</div></div></div><div class="row" style="top:84px"><div class="lab"><div class="nm">日経<span class="la">VI</span></div><div class="bt" style="left:51px;width:74px;"><i></i><span>恐怖指数</span></div><svg class="abs" style="left:127.300px;top:0" width="26" height="26" viewBox="0 0 26 26"><circle cx="13" cy="13" r="12.7" fill="#8d8d8b"/><path d="M4 24c1-7 3-9 5-10-2-3-1-9 4-9s6 6 4 9c2 1 4 3 5 10z" fill="#727270" stroke="#bdbdbb" stroke-width="1"/><circle cx="10.8" cy="9.300" r="1.500" fill="#d0d0ce"/><circle cx="15.200" cy="9.300" r="1.500" fill="#d0d0ce"/></svg><div class="dd">08/22</div></div><div class="abs" style="left:154.500px;top:-1px;width:81.500px;height:43px;background:#3c3c3b;"></div><svg class="mc" width="80" height="40" viewBox="0 0 80 40"><rect x="0.300" y="0.300" width="79.400" height="39.400" rx="2.200" fill="#e3e3e3"/><rect x="33.5" y="1" width="0.600" height="37" fill="#d6d6d6"/><rect x="69.0" y="1" width="0.600" height="37" fill="#d6d6d6"/><rect x="1" y="8" width="78" height="0.500" fill="#dadada"/><rect x="1" y="16" width="78" height="0.500" fill="#dadada"/><rect x="1" y="24" width="78" height="0.500" fill="#dadada"/><rect x="1" y="32" width="78" height="0.500" fill="#dadada"/><defs><clipPath id="m10u"><rect x="0" y="0" width="80" height="18.0"/></clipPath><clipPath id="m10d"><rect x="0" y="18.0" width="80" height="22.0"/></clipPath></defs><g clip-path="url(#m10u)"><polygon points="0.0,18.0 0.0,18.0 0.8,12.4 1.5,6.5 2.5,14.2 3.2,15.4 4.0,17.5 4.8,17.5 5.5,18.0 6.0,19.6 7.0,19.9 8.0,20.9 9.0,21.3 10.0,20.9 11.0,20.2 12.0,21.1 13.0,20.9 14.0,21.8 15.0,21.9 16.0,21.8 17.0,22.4 18.0,22.4 19.0,22.9 20.0,22.4 21.0,21.4 22.0,21.3 23.0,21.4 24.0,22.2 25.0,22.4 26.0,22.1 27.0,21.4 28.0,21.3 29.0,20.8 30.0,20.2 31.0,20.3 32.0,19.4 33.0,19.6 34.0,19.3 35.0,18.5 36.0,18.0 37.0,18.2 38.0,17.9 39.0,18.0 40.0,17.5 41.0,16.6 42.0,16.8 43.0,15.8 44.0,15.3 45.0,14.7 46.0,14.7 47.0,14.1 48.0,14.2 49.0,15.1 50.0,15.3 51.0,15.6 52.0,15.9 53.0,15.8 54.0,16.2 55.0,16.2 56.0,16.4 57.0,16.8 58.0,16.3 59.0,16.4 60.0,17.6 61.0,17.4 62.0,17.4 63.0,16.9 64.0,17.2 65.0,17.6 66.0,17.4 67.0,17.3 68.0,17.3 69.0,16.5 70.0,16.8 71.0,16.7 72.0,16.9 73.0,16.8 74.0,17.3 75.0,16.9 76.0,16.6 77.0,16.8 78.0,16.7 79.0,17.1 80.0,17.1 80.0,18.0" fill="#bfe2b9"/><polyline points="0.0,18.0 0.8,12.4 1.5,6.5 2.5,14.2 3.2,15.4 4.0,17.5 4.8,17.5 5.5,18.0 6.0,19.6 7.0,19.9 8.0,20.9 9.0,21.3 10.0,20.9 11.0,20.2 12.0,21.1 13.0,20.9 14.0,21.8 15.0,21.9 16.0,21.8 17.0,22.4 18.0,22.4 19.0,22.9 20.0,22.4 21.0,21.4 22.0,21.3 23.0,21.4 24.0,22.2 25.0,22.4 26.0,22.1 27.0,21.4 28.0,21.3 29.0,20.8 30.0,20.2 31.0,20.3 32.0,19.4 33.0,19.6 34.0,19.3 35.0,18.5 36.0,18.0 37.0,18.2 38.0,17.9 39.0,18.0 40.0,17.5 41.0,16.6 42.0,16.8 43.0,15.8 44.0,15.3 45.0,14.7 46.0,14.7 47.0,14.1 48.0,14.2 49.0,15.1 50.0,15.3 51.0,15.6 52.0,15.9 53.0,15.8 54.0,16.2 55.0,16.2 56.0,16.4 57.0,16.8 58.0,16.3 59.0,16.4 60.0,17.6 61.0,17.4 62.0,17.4 63.0,16.9 64.0,17.2 65.0,17.6 66.0,17.4 67.0,17.3 68.0,17.3 69.0,16.5 70.0,16.8 71.0,16.7 72.0,16.9 73.0,16.8 74.0,17.3 75.0,16.9 76.0,16.6 77.0,16.8 78.0,16.7 79.0,17.1 80.0,17.1" fill="none" stroke="#4f9a4a" stroke-width="0.800"/></g><g clip-path="url(#m10d)"><polygon points="0.0,18.0 0.0,18.0 0.8,12.4 1.5,6.5 2.5,14.2 3.2,15.4 4.0,17.5 4.8,17.5 5.5,18.0 6.0,19.6 7.0,19.9 8.0,20.9 9.0,21.3 10.0,20.9 11.0,20.2 12.0,21.1 13.0,20.9 14.0,21.8 15.0,21.9 16.0,21.8 17.0,22.4 18.0,22.4 19.0,22.9 20.0,22.4 21.0,21.4 22.0,21.3 23.0,21.4 24.0,22.2 25.0,22.4 26.0,22.1 27.0,21.4 28.0,21.3 29.0,20.8 30.0,20.2 31.0,20.3 32.0,19.4 33.0,19.6 34.0,19.3 35.0,18.5 36.0,18.0 37.0,18.2 38.0,17.9 39.0,18.0 40.0,17.5 41.0,16.6 42.0,16.8 43.0,15.8 44.0,15.3 45.0,14.7 46.0,14.7 47.0,14.1 48.0,14.2 49.0,15.1 50.0,15.3 51.0,15.6 52.0,15.9 53.0,15.8 54.0,16.2 55.0,16.2 56.0,16.4 57.0,16.8 58.0,16.3 59.0,16.4 60.0,17.6 61.0,17.4 62.0,17.4 63.0,16.9 64.0,17.2 65.0,17.6 66.0,17.4 67.0,17.3 68.0,17.3 69.0,16.5 70.0,16.8 71.0,16.7 72.0,16.9 73.0,16.8 74.0,17.3 75.0,16.9 76.0,16.6 77.0,16.8 78.0,16.7 79.0,17.1 80.0,17.1 80.0,18.0" fill="#f1c0c0"/><polyline points="0.0,18.0 0.8,12.4 1.5,6.5 2.5,14.2 3.2,15.4 4.0,17.5 4.8,17.5 5.5,18.0 6.0,19.6 7.0,19.9 8.0,20.9 9.0,21.3 10.0,20.9 11.0,20.2 12.0,21.1 13.0,20.9 14.0,21.8 15.0,21.9 16.0,21.8 17.0,22.4 18.0,22.4 19.0,22.9 20.0,22.4 21.0,21.4 22.0,21.3 23.0,21.4 24.0,22.2 25.0,22.4 26.0,22.1 27.0,21.4 28.0,21.3 29.0,20.8 30.0,20.2 31.0,20.3 32.0,19.4 33.0,19.6 34.0,19.3 35.0,18.5 36.0,18.0 37.0,18.2 38.0,17.9 39.0,18.0 40.0,17.5 41.0,16.6 42.0,16.8 43.0,15.8 44.0,15.3 45.0,14.7 46.0,14.7 47.0,14.1 48.0,14.2 49.0,15.1 50.0,15.3 51.0,15.6 52.0,15.9 53.0,15.8 54.0,16.2 55.0,16.2 56.0,16.4 57.0,16.8 58.0,16.3 59.0,16.4 60.0,17.6 61.0,17.4 62.0,17.4 63.0,16.9 64.0,17.2 65.0,17.6 66.0,17.4 67.0,17.3 68.0,17.3 69.0,16.5 70.0,16.8 71.0,16.7 72.0,16.9 73.0,16.8 74.0,17.3 75.0,16.9 76.0,16.6 77.0,16.8 78.0,16.7 79.0,17.1 80.0,17.1" fill="none" stroke="#e06464" stroke-width="0.800"/></g><rect x="0.5" y="17.4" width="79.0" height="1.200" fill="#8794e4"/><rect x="32.0" y="36.800" width="3.500" height="1.200" fill="#bdbdbd" opacity="0.800"/><rect x="67.0" y="36.800" width="3.500" height="1.200" fill="#bdbdbd" opacity="0.800"/></svg><div class="wh" style=""><div class="v"><u>25.11</u></div><div class="c g">+0.05</div><div class="pb g" style="font-size:17px;letter-spacing:-0.600px"><b style="font-size:12px">▲</b>0.20<small>%</small></div><div class="hl" style="line-height:16px;top:4.3px">H:25.82<br>L:24.75</div></div></div><div class="row" style="top:126px"><div class="lab"><div class="nm"><span class="la">NT</span>倍率</div><div class="bt" style="left:51px;width:74px;"><i></i><span>NT倍率</span></div><svg class="abs" style="left:127.300px;top:0" width="26" height="26" viewBox="0 0 26 26"><circle cx="13" cy="13" r="12.7" fill="#8d8d8b"/><circle cx="13" cy="12.5" r="6.6" fill="#9b5443"/></svg><div class="dd">08/22</div></div><div class="abs" style="left:154.500px;top:-1px;width:81.500px;height:43px;background:#3c3c3b;"></div><svg class="mc" width="80" height="40" viewBox="0 0 80 40"><rect x="0.300" y="0.300" width="79.400" height="39.400" rx="2.200" fill="#e3e3e3"/><rect x="35.0" y="1" width="0.600" height="37" fill="#d6d6d6"/><rect x="72.0" y="1" width="0.600" height="37" fill="#d6d6d6"/><rect x="1" y="8" width="78" height="0.500" fill="#dadada"/><rect x="1" y="16" width="78" height="0.500" fill="#dadada"/><rect x="1" y="24" width="78" height="0.500" fill="#dadada"/><rect x="1" y="32" width="78" height="0.500" fill="#dadada"/><defs><clipPath id="m11u"><rect x="0" y="0" width="80" height="15.8"/></clipPath><clipPath id="m11d"><rect x="0" y="15.8" width="80" height="24.2"/></clipPath></defs><g clip-path="url(#m11u)"><polygon points="0.0,15.8 0.0,24.0 1.0,26.4 2.0,29.5 3.0,28.3 4.0,27.3 5.0,26.4 6.0,26.4 7.0,25.6 8.0,26.2 9.0,26.3 10.0,27.3 11.0,27.6 12.0,29.0 13.0,29.5 14.0,28.6 15.0,28.6 16.0,27.8 17.0,28.5 18.0,29.0 19.0,28.4 20.0,27.8 21.0,28.1 22.0,27.9 23.0,27.9 24.0,27.7 25.0,27.6 26.0,27.5 27.0,27.7 28.0,27.7 29.0,28.0 30.0,27.8 31.0,27.5 32.0,27.6 33.0,28.1 34.0,27.7 35.0,27.7 36.0,27.7 37.0,27.9 38.0,27.2 39.0,27.7 40.0,27.0 41.0,27.1 42.0,27.3 43.0,28.0 44.0,28.3 45.0,29.0 46.0,29.2 47.0,29.1 48.0,29.4 49.0,29.7 50.0,30.0 51.0,30.4 52.0,30.8 53.0,31.0 54.0,31.2 55.0,31.6 56.0,32.3 57.0,32.2 58.0,32.0 59.0,31.4 60.0,31.0 61.0,31.4 62.0,31.5 63.0,32.2 64.0,31.9 65.0,31.8 66.0,32.6 67.0,32.5 68.0,32.2 69.0,31.6 70.0,32.0 71.0,31.6 72.0,30.9 73.0,30.5 74.0,30.8 75.0,30.8 76.0,31.0 77.0,30.8 78.0,30.6 79.0,30.7 80.0,31.0 80.0,15.8" fill="#bfe2b9"/><polyline points="0.0,24.0 1.0,26.4 2.0,29.5 3.0,28.3 4.0,27.3 5.0,26.4 6.0,26.4 7.0,25.6 8.0,26.2 9.0,26.3 10.0,27.3 11.0,27.6 12.0,29.0 13.0,29.5 14.0,28.6 15.0,28.6 16.0,27.8 17.0,28.5 18.0,29.0 19.0,28.4 20.0,27.8 21.0,28.1 22.0,27.9 23.0,27.9 24.0,27.7 25.0,27.6 26.0,27.5 27.0,27.7 28.0,27.7 29.0,28.0 30.0,27.8 31.0,27.5 32.0,27.6 33.0,28.1 34.0,27.7 35.0,27.7 36.0,27.7 37.0,27.9 38.0,27.2 39.0,27.7 40.0,27.0 41.0,27.1 42.0,27.3 43.0,28.0 44.0,28.3 45.0,29.0 46.0,29.2 47.0,29.1 48.0,29.4 49.0,29.7 50.0,30.0 51.0,30.4 52.0,30.8 53.0,31.0 54.0,31.2 55.0,31.6 56.0,32.3 57.0,32.2 58.0,32.0 59.0,31.4 60.0,31.0 61.0,31.4 62.0,31.5 63.0,32.2 64.0,31.9 65.0,31.8 66.0,32.6 67.0,32.5 68.0,32.2 69.0,31.6 70.0,32.0 71.0,31.6 72.0,30.9 73.0,30.5 74.0,30.8 75.0,30.8 76.0,31.0 77.0,30.8 78.0,30.6 79.0,30.7 80.0,31.0" fill="none" stroke="#4f9a4a" stroke-width="0.800"/></g><g clip-path="url(#m11d)"><polygon points="0.0,15.8 0.0,24.0 1.0,26.4 2.0,29.5 3.0,28.3 4.0,27.3 5.0,26.4 6.0,26.4 7.0,25.6 8.0,26.2 9.0,26.3 10.0,27.3 11.0,27.6 12.0,29.0 13.0,29.5 14.0,28.6 15.0,28.6 16.0,27.8 17.0,28.5 18.0,29.0 19.0,28.4 20.0,27.8 21.0,28.1 22.0,27.9 23.0,27.9 24.0,27.7 25.0,27.6 26.0,27.5 27.0,27.7 28.0,27.7 29.0,28.0 30.0,27.8 31.0,27.5 32.0,27.6 33.0,28.1 34.0,27.7 35.0,27.7 36.0,27.7 37.0,27.9 38.0,27.2 39.0,27.7 40.0,27.0 41.0,27.1 42.0,27.3 43.0,28.0 44.0,28.3 45.0,29.0 46.0,29.2 47.0,29.1 48.0,29.4 49.0,29.7 50.0,30.0 51.0,30.4 52.0,30.8 53.0,31.0 54.0,31.2 55.0,31.6 56.0,32.3 57.0,32.2 58.0,32.0 59.0,31.4 60.0,31.0 61.0,31.4 62.0,31.5 63.0,32.2 64.0,31.9 65.0,31.8 66.0,32.6 67.0,32.5 68.0,32.2 69.0,31.6 70.0,32.0 71.0,31.6 72.0,30.9 73.0,30.5 74.0,30.8 75.0,30.8 76.0,31.0 77.0,30.8 78.0,30.6 79.0,30.7 80.0,31.0 80.0,15.8" fill="#f1c0c0"/><polyline points="0.0,24.0 1.0,26.4 2.0,29.5 3.0,28.3 4.0,27.3 5.0,26.4 6.0,26.4 7.0,25.6 8.0,26.2 9.0,26.3 10.0,27.3 11.0,27.6 12.0,29.0 13.0,29.5 14.0,28.6 15.0,28.6 16.0,27.8 17.0,28.5 18.0,29.0 19.0,28.4 20.0,27.8 21.0,28.1 22.0,27.9 23.0,27.9 24.0,27.7 25.0,27.6 26.0,27.5 27.0,27.7 28.0,27.7 29.0,28.0 30.0,27.8 31.0,27.5 32.0,27.6 33.0,28.1 34.0,27.7 35.0,27.7 36.0,27.7 37.0,27.9 38.0,27.2 39.0,27.7 40.0,27.0 41.0,27.1 42.0,27.3 43.0,28.0 44.0,28.3 45.0,29.0 46.0,29.2 47.0,29.1 48.0,29.4 49.0,29.7 50.0,30.0 51.0,30.4 52.0,30.8 53.0,31.0 54.0,31.2 55.0,31.6 56.0,32.3 57.0,32.2 58.0,32.0 59.0,31.4 60.0,31.0 61.0,31.4 62.0,31.5 63.0,32.2 64.0,31.9 65.0,31.8 66.0,32.6 67.0,32.5 68.0,32.2 69.0,31.6 70.0,32.0 71.0,31.6 72.0,30.9 73.0,30.5 74.0,30.8 75.0,30.8 76.0,31.0 77.0,30.8 78.0,30.6 79.0,30.7 80.0,31.0" fill="none" stroke="#e06464" stroke-width="0.800"/></g><rect x="30.0" y="1" width="12.0" height="36" fill="#e3e3e3" opacity="0.620"/><rect x="5.0" y="15.2" width="74.5" height="1.200" fill="#a3a6e6"/><rect x="33.0" y="36.800" width="3.500" height="1.200" fill="#bdbdbd" opacity="0.800"/><rect x="70.0" y="36.800" width="3.500" height="1.200" fill="#bdbdbd" opacity="0.800"/></svg><div class="wh" style=""><div class="v"><u>13.75</u></div><div class="c r">-0.07</div><div class="pb r"><b>▼</b>0.51<small>%</small></div><div class="hl" style="line-height:16px;top:4.3px">H:13.79<br>L:13.74</div></div></div><div class="row" style="top:168px"><div class="lab"><div class="nm"><span style="font-size:15px;letter-spacing:-0.1px">ドル建て日経平均</span></div><div class="bt" style="left:51px;width:74px;"><i></i><span>日経ドル</span></div><svg class="abs" style="left:127.300px;top:0" width="26" height="26" viewBox="0 0 26 26"><circle cx="13" cy="13" r="12.7" fill="#8d8d8b"/><circle cx="13" cy="12.5" r="6.6" fill="#9b5443"/></svg><div class="dd">08/22</div></div><div class="abs" style="left:154.500px;top:-1px;width:81.500px;height:43px;background:#3c3c3b;"></div><svg class="mc" width="80" height="40" viewBox="0 0 80 40"><rect x="0.300" y="0.300" width="79.400" height="39.400" rx="2.200" fill="#e3e3e3"/><rect x="35.0" y="1" width="0.600" height="37" fill="#d6d6d6"/><rect x="72.0" y="1" width="0.600" height="37" fill="#d6d6d6"/><rect x="1" y="8" width="78" height="0.500" fill="#dadada"/><rect x="1" y="16" width="78" height="0.500" fill="#dadada"/><rect x="1" y="24" width="78" height="0.500" fill="#dadada"/><rect x="1" y="32" width="78" height="0.500" fill="#dadada"/><defs><clipPath id="m12u"><rect x="0" y="0" width="80" height="9.3"/></clipPath><clipPath id="m12d"><rect x="0" y="9.3" width="80" height="30.7"/></clipPath></defs><g clip-path="url(#m12u)"><polygon points="0.0,9.3 0.0,22.0 0.8,26.0 1.5,30.0 2.5,34.4 3.2,30.5 4.0,27.3 5.0,27.7 6.0,28.4 7.0,27.2 8.0,26.2 9.0,25.2 10.0,25.1 11.0,24.5 12.0,26.0 13.0,26.7 14.0,25.6 15.0,24.9 16.0,23.5 17.0,22.8 18.0,21.3 19.0,21.4 20.0,22.4 21.0,23.6 22.0,25.6 23.0,24.5 24.0,23.9 25.0,22.4 26.0,21.0 27.0,19.6 28.0,20.7 29.0,21.3 30.0,24.0 31.0,24.4 32.0,24.1 33.0,24.8 34.0,25.2 35.0,25.0 36.0,25.6 37.0,25.6 38.0,26.3 39.0,26.3 40.0,26.9 41.0,26.8 42.0,27.3 43.0,27.5 44.0,28.3 45.0,29.0 46.0,29.8 47.0,29.9 48.0,30.5 49.0,30.7 50.0,31.0 51.0,30.7 52.0,31.0 53.0,31.5 54.0,31.0 55.0,31.6 56.0,31.4 57.0,31.0 58.0,31.0 59.0,30.6 60.0,31.1 61.0,30.3 62.0,30.5 63.0,30.5 64.0,30.0 65.0,30.2 66.0,29.5 67.0,29.6 68.0,28.5 69.0,29.1 70.0,28.4 71.0,27.9 72.0,27.3 73.0,28.1 74.0,28.4 75.0,27.5 76.0,27.5 77.0,26.7 78.0,26.5 79.0,26.4 80.0,25.6 80.0,9.3" fill="#bfe2b9"/><polyline points="0.0,22.0 0.8,26.0 1.5,30.0 2.5,34.4 3.2,30.5 4.0,27.3 5.0,27.7 6.0,28.4 7.0,27.2 8.0,26.2 9.0,25.2 10.0,25.1 11.0,24.5 12.0,26.0 13.0,26.7 14.0,25.6 15.0,24.9 16.0,23.5 17.0,22.8 18.0,21.3 19.0,21.4 20.0,22.4 21.0,23.6 22.0,25.6 23.0,24.5 24.0,23.9 25.0,22.4 26.0,21.0 27.0,19.6 28.0,20.7 29.0,21.3 30.0,24.0 31.0,24.4 32.0,24.1 33.0,24.8 34.0,25.2 35.0,25.0 36.0,25.6 37.0,25.6 38.0,26.3 39.0,26.3 40.0,26.9 41.0,26.8 42.0,27.3 43.0,27.5 44.0,28.3 45.0,29.0 46.0,29.8 47.0,29.9 48.0,30.5 49.0,30.7 50.0,31.0 51.0,30.7 52.0,31.0 53.0,31.5 54.0,31.0 55.0,31.6 56.0,31.4 57.0,31.0 58.0,31.0 59.0,30.6 60.0,31.1 61.0,30.3 62.0,30.5 63.0,30.5 64.0,30.0 65.0,30.2 66.0,29.5 67.0,29.6 68.0,28.5 69.0,29.1 70.0,28.4 71.0,27.9 72.0,27.3 73.0,28.1 74.0,28.4 75.0,27.5 76.0,27.5 77.0,26.7 78.0,26.5 79.0,26.4 80.0,25.6" fill="none" stroke="#4f9a4a" stroke-width="0.800"/></g><g clip-path="url(#m12d)"><polygon points="0.0,9.3 0.0,22.0 0.8,26.0 1.5,30.0 2.5,34.4 3.2,30.5 4.0,27.3 5.0,27.7 6.0,28.4 7.0,27.2 8.0,26.2 9.0,25.2 10.0,25.1 11.0,24.5 12.0,26.0 13.0,26.7 14.0,25.6 15.0,24.9 16.0,23.5 17.0,22.8 18.0,21.3 19.0,21.4 20.0,22.4 21.0,23.6 22.0,25.6 23.0,24.5 24.0,23.9 25.0,22.4 26.0,21.0 27.0,19.6 28.0,20.7 29.0,21.3 30.0,24.0 31.0,24.4 32.0,24.1 33.0,24.8 34.0,25.2 35.0,25.0 36.0,25.6 37.0,25.6 38.0,26.3 39.0,26.3 40.0,26.9 41.0,26.8 42.0,27.3 43.0,27.5 44.0,28.3 45.0,29.0 46.0,29.8 47.0,29.9 48.0,30.5 49.0,30.7 50.0,31.0 51.0,30.7 52.0,31.0 53.0,31.5 54.0,31.0 55.0,31.6 56.0,31.4 57.0,31.0 58.0,31.0 59.0,30.6 60.0,31.1 61.0,30.3 62.0,30.5 63.0,30.5 64.0,30.0 65.0,30.2 66.0,29.5 67.0,29.6 68.0,28.5 69.0,29.1 70.0,28.4 71.0,27.9 72.0,27.3 73.0,28.1 74.0,28.4 75.0,27.5 76.0,27.5 77.0,26.7 78.0,26.5 79.0,26.4 80.0,25.6 80.0,9.3" fill="#f1c0c0"/><polyline points="0.0,22.0 0.8,26.0 1.5,30.0 2.5,34.4 3.2,30.5 4.0,27.3 5.0,27.7 6.0,28.4 7.0,27.2 8.0,26.2 9.0,25.2 10.0,25.1 11.0,24.5 12.0,26.0 13.0,26.7 14.0,25.6 15.0,24.9 16.0,23.5 17.0,22.8 18.0,21.3 19.0,21.4 20.0,22.4 21.0,23.6 22.0,25.6 23.0,24.5 24.0,23.9 25.0,22.4 26.0,21.0 27.0,19.6 28.0,20.7 29.0,21.3 30.0,24.0 31.0,24.4 32.0,24.1 33.0,24.8 34.0,25.2 35.0,25.0 36.0,25.6 37.0,25.6 38.0,26.3 39.0,26.3 40.0,26.9 41.0,26.8 42.0,27.3 43.0,27.5 44.0,28.3 45.0,29.0 46.0,29.8 47.0,29.9 48.0,30.5 49.0,30.7 50.0,31.0 51.0,30.7 52.0,31.0 53.0,31.5 54.0,31.0 55.0,31.6 56.0,31.4 57.0,31.0 58.0,31.0 59.0,30.6 60.0,31.1 61.0,30.3 62.0,30.5 63.0,30.5 64.0,30.0 65.0,30.2 66.0,29.5 67.0,29.6 68.0,28.5 69.0,29.1 70.0,28.4 71.0,27.9 72.0,27.3 73.0,28.1 74.0,28.4 75.0,27.5 76.0,27.5 77.0,26.7 78.0,26.5 79.0,26.4 80.0,25.6" fill="none" stroke="#e06464" stroke-width="0.800"/></g><rect x="30.0" y="1" width="12.0" height="36" fill="#e3e3e3" opacity="0.620"/><rect x="5.0" y="8.7" width="74.5" height="1.200" fill="#a3a6e6"/><rect x="33.0" y="36.800" width="3.500" height="1.200" fill="#bdbdbd" opacity="0.800"/><rect x="70.0" y="36.800" width="3.500" height="1.200" fill="#bdbdbd" opacity="0.800"/></svg><div class="wh" style=""><div class="v"><u>287.05</u></div><div class="c r">-0.10</div><div class="pb r"><b>▼</b>0.03<small>%</small></div><div class="hl" style="line-height:16px;top:4.3px">H:287.61<br>L:285.50</div></div></div><div class="row" style="top:210px"><div class="lab" style="border-bottom-width:0"><div class="nm">東証<span class="la">REIT</span></div><svg class="abs" style="left:127.300px;top:0" width="26" height="26" viewBox="0 0 26 26"><circle cx="13" cy="13" r="12.7" fill="#8d8d8b"/><circle cx="13" cy="12.5" r="6.6" fill="#9b5443"/></svg><div class="dd">08/22</div></div><div class="abs" style="left:154.500px;top:-1px;width:81.500px;height:41px;background:#3c3c3b;"></div><svg class="mc" width="80" height="40" viewBox="0 0 80 40"><rect x="0.300" y="0.300" width="79.400" height="39.400" rx="2.200" fill="#e3e3e3"/><rect x="35.0" y="1" width="0.600" height="37" fill="#d6d6d6"/><rect x="72.0" y="1" width="0.600" height="37" fill="#d6d6d6"/><rect x="1" y="8" width="78" height="0.500" fill="#dadada"/><rect x="1" y="16" width="78" height="0.500" fill="#dadada"/><rect x="1" y="24" width="78" height="0.500" fill="#dadada"/><rect x="1" y="32" width="78" height="0.500" fill="#dadada"/><defs><clipPath id="m13u"><rect x="0" y="0" width="80" height="14.2"/></clipPath><clipPath id="m13d"><rect x="0" y="14.2" width="80" height="25.8"/></clipPath></defs><g clip-path="url(#m13u)"><polygon points="0.0,14.2 0.0,12.5 1.0,12.7 2.0,13.0 3.0,12.8 4.0,13.3 5.0,13.0 6.2,11.6 7.5,10.4 8.8,11.0 10.0,11.5 11.0,11.7 12.0,11.7 13.0,12.0 14.0,12.9 15.0,13.6 16.0,14.1 17.0,13.5 18.0,14.0 19.0,13.9 20.0,14.2 21.0,14.9 22.0,15.3 23.0,14.6 24.0,13.4 25.0,13.0 26.0,13.3 27.0,14.2 28.0,14.4 29.0,14.9 30.0,14.7 31.0,15.0 32.0,15.1 33.0,14.5 34.0,14.8 35.0,15.0 36.0,14.9 37.0,14.8 38.0,15.5 39.0,15.3 40.0,15.1 41.0,15.2 42.0,15.3 43.0,16.0 44.0,16.4 45.0,15.8 46.0,14.7 47.0,14.8 48.0,14.3 49.0,14.7 50.0,14.2 51.0,14.5 52.0,14.2 53.0,14.2 54.0,14.5 55.0,14.7 56.0,14.4 57.0,14.8 58.0,14.0 59.0,14.6 60.0,14.2 61.0,14.0 62.0,14.7 63.0,14.4 64.0,14.3 65.0,14.7 66.0,15.0 67.0,14.3 68.0,14.2 69.0,15.2 70.0,15.3 71.0,16.2 72.0,17.5 73.0,16.7 74.0,16.4 75.0,16.7 76.0,16.9 77.0,16.4 78.0,16.4 79.0,16.7 80.0,16.9 80.0,14.2" fill="#bfe2b9"/><polyline points="0.0,12.5 1.0,12.7 2.0,13.0 3.0,12.8 4.0,13.3 5.0,13.0 6.2,11.6 7.5,10.4 8.8,11.0 10.0,11.5 11.0,11.7 12.0,11.7 13.0,12.0 14.0,12.9 15.0,13.6 16.0,14.1 17.0,13.5 18.0,14.0 19.0,13.9 20.0,14.2 21.0,14.9 22.0,15.3 23.0,14.6 24.0,13.4 25.0,13.0 26.0,13.3 27.0,14.2 28.0,14.4 29.0,14.9 30.0,14.7 31.0,15.0 32.0,15.1 33.0,14.5 34.0,14.8 35.0,15.0 36.0,14.9 37.0,14.8 38.0,15.5 39.0,15.3 40.0,15.1 41.0,15.2 42.0,15.3 43.0,16.0 44.0,16.4 45.0,15.8 46.0,14.7 47.0,14.8 48.0,14.3 49.0,14.7 50.0,14.2 51.0,14.5 52.0,14.2 53.0,14.2 54.0,14.5 55.0,14.7 56.0,14.4 57.0,14.8 58.0,14.0 59.0,14.6 60.0,14.2 61.0,14.0 62.0,14.7 63.0,14.4 64.0,14.3 65.0,14.7 66.0,15.0 67.0,14.3 68.0,14.2 69.0,15.2 70.0,15.3 71.0,16.2 72.0,17.5 73.0,16.7 74.0,16.4 75.0,16.7 76.0,16.9 77.0,16.4 78.0,16.4 79.0,16.7 80.0,16.9" fill="none" stroke="#4f9a4a" stroke-width="0.800"/></g><g clip-path="url(#m13d)"><polygon points="0.0,14.2 0.0,12.5 1.0,12.7 2.0,13.0 3.0,12.8 4.0,13.3 5.0,13.0 6.2,11.6 7.5,10.4 8.8,11.0 10.0,11.5 11.0,11.7 12.0,11.7 13.0,12.0 14.0,12.9 15.0,13.6 16.0,14.1 17.0,13.5 18.0,14.0 19.0,13.9 20.0,14.2 21.0,14.9 22.0,15.3 23.0,14.6 24.0,13.4 25.0,13.0 26.0,13.3 27.0,14.2 28.0,14.4 29.0,14.9 30.0,14.7 31.0,15.0 32.0,15.1 33.0,14.5 34.0,14.8 35.0,15.0 36.0,14.9 37.0,14.8 38.0,15.5 39.0,15.3 40.0,15.1 41.0,15.2 42.0,15.3 43.0,16.0 44.0,16.4 45.0,15.8 46.0,14.7 47.0,14.8 48.0,14.3 49.0,14.7 50.0,14.2 51.0,14.5 52.0,14.2 53.0,14.2 54.0,14.5 55.0,14.7 56.0,14.4 57.0,14.8 58.0,14.0 59.0,14.6 60.0,14.2 61.0,14.0 62.0,14.7 63.0,14.4 64.0,14.3 65.0,14.7 66.0,15.0 67.0,14.3 68.0,14.2 69.0,15.2 70.0,15.3 71.0,16.2 72.0,17.5 73.0,16.7 74.0,16.4 75.0,16.7 76.0,16.9 77.0,16.4 78.0,16.4 79.0,16.7 80.0,16.9 80.0,14.2" fill="#f1c0c0"/><polyline points="0.0,12.5 1.0,12.7 2.0,13.0 3.0,12.8 4.0,13.3 5.0,13.0 6.2,11.6 7.5,10.4 8.8,11.0 10.0,11.5 11.0,11.7 12.0,11.7 13.0,12.0 14.0,12.9 15.0,13.6 16.0,14.1 17.0,13.5 18.0,14.0 19.0,13.9 20.0,14.2 21.0,14.9 22.0,15.3 23.0,14.6 24.0,13.4 25.0,13.0 26.0,13.3 27.0,14.2 28.0,14.4 29.0,14.9 30.0,14.7 31.0,15.0 32.0,15.1 33.0,14.5 34.0,14.8 35.0,15.0 36.0,14.9 37.0,14.8 38.0,15.5 39.0,15.3 40.0,15.1 41.0,15.2 42.0,15.3 43.0,16.0 44.0,16.4 45.0,15.8 46.0,14.7 47.0,14.8 48.0,14.3 49.0,14.7 50.0,14.2 51.0,14.5 52.0,14.2 53.0,14.2 54.0,14.5 55.0,14.7 56.0,14.4 57.0,14.8 58.0,14.0 59.0,14.6 60.0,14.2 61.0,14.0 62.0,14.7 63.0,14.4 64.0,14.3 65.0,14.7 66.0,15.0 67.0,14.3 68.0,14.2 69.0,15.2 70.0,15.3 71.0,16.2 72.0,17.5 73.0,16.7 74.0,16.4 75.0,16.7 76.0,16.9 77.0,16.4 78.0,16.4 79.0,16.7 80.0,16.9" fill="none" stroke="#e06464" stroke-width="0.800"/></g><rect x="30.0" y="1" width="12.0" height="36" fill="#e3e3e3" opacity="0.620"/><rect x="0.5" y="13.6" width="79.0" height="1.200" fill="#a3a6e6"/><rect x="1.0" y="36.800" width="3.500" height="1.200" fill="#bdbdbd" opacity="0.800"/><rect x="33.0" y="36.800" width="3.500" height="1.200" fill="#bdbdbd" opacity="0.800"/><rect x="70.0" y="36.800" width="3.500" height="1.200" fill="#bdbdbd" opacity="0.800"/></svg><div class="wh" style="border-bottom:none;height:40px;"><div class="v"><u>1,923</u><small>.62</small></div><div class="c r">-2<small>.39</small></div><div class="pb r"><b>▼</b>0.12<small>%</small></div><div class="hl">H:1,930<small>.25</small><br>L:1,921<small>.94</small></div></div></div></div>
</body></html>
